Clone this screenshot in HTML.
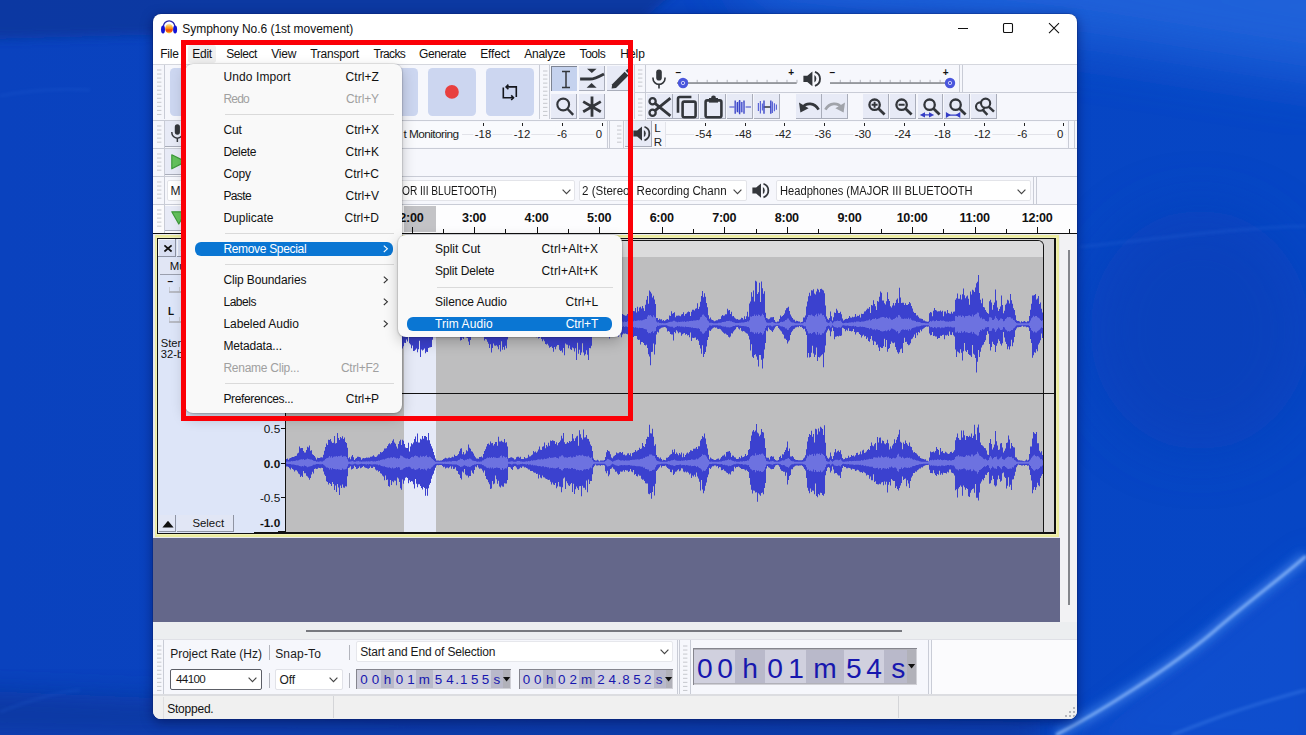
<!DOCTYPE html>
<html><head><meta charset="utf-8"><title>Audacity</title>
<style>
html,body{margin:0;padding:0}
body{width:1306px;height:735px;overflow:hidden;position:relative;background:#0b45c2;font-family:"Liberation Sans", sans-serif;}
span{font-family:"Liberation Sans", sans-serif}
</style></head><body>

<svg style="position:absolute;left:0;top:0" width="1306" height="735" viewBox="0 0 1306 735">
<defs>
<linearGradient id="bgA" x1="0" y1="0" x2="1" y2="0">
 <stop offset="0" stop-color="#0a42be"/><stop offset="0.5" stop-color="#0845c2"/><stop offset="1" stop-color="#0646c5"/>
</linearGradient>
<filter id="bl2" x="-20%" y="-20%" width="140%" height="140%"><feGaussianBlur stdDeviation="1.6"/></filter>
<filter id="bl6" x="-20%" y="-20%" width="140%" height="140%"><feGaussianBlur stdDeviation="5"/></filter>
<filter id="bl14" x="-30%" y="-30%" width="160%" height="160%"><feGaussianBlur stdDeviation="14"/></filter>
<filter id="bl30" x="-30%" y="-30%" width="160%" height="160%"><feGaussianBlur stdDeviation="28"/></filter>
</defs>
<rect width="1306" height="735" fill="url(#bgA)"/>
<!-- darker top-left band -->
<path d="M-40 -30 H700 L640 22 L-40 40 Z" fill="#0a389f" opacity="0.9" filter="url(#bl6)"/>
<!-- lighter top-right -->
<path d="M720 -60 H1400 V90 L1080 40 L760 8 Z" fill="#2265dc" opacity="0.9" filter="url(#bl30)"/>
<!-- darker bottom-left band -->
<path d="M-40 735 V690 L500 712 L1040 722 V760 Z" fill="#0a3597" opacity="0.7" filter="url(#bl14)"/>
<!-- mid-right slightly darker -->
<ellipse cx="1200" cy="330" rx="110" ry="120" fill="#083db6" opacity="0.55" filter="url(#bl30)"/>
<!-- lighter zone below streak -->
<path d="M1070 745 C1110 712 1170 668 1212 633 C1250 600 1285 575 1316 550 V760 Z" fill="#1254d6" opacity="0.55" filter="url(#bl14)"/>
<path d="M1056 735 C1100 712 1170 668 1212 633 C1250 600 1285 575 1306 556" stroke="#4a8af0" stroke-width="11" fill="none" opacity="0.62" filter="url(#bl6)"/>
<path d="M1056 735 C1100 712 1170 668 1212 633 C1250 600 1285 575 1306 556" stroke="#9cc6ff" stroke-width="2.6" fill="none" opacity="0.85" filter="url(#bl2)"/>
<path d="M1172 735 C1210 720 1240 708 1306 690" stroke="#3f80ea" stroke-width="3" fill="none" opacity="0.45" filter="url(#bl2)"/>
<path d="M1080 247 C1150 240 1230 228 1306 226" stroke="#2a68d8" stroke-width="2.5" fill="none" opacity="0.3" filter="url(#bl2)"/>
<path d="M0 96 C30 90 60 88 90 90" stroke="#2a68d8" stroke-width="3" fill="none" opacity="0.18" filter="url(#bl2)"/>
<path d="M0 712 C30 700 60 692 80 690" stroke="#2a68d8" stroke-width="3" fill="none" opacity="0.18" filter="url(#bl2)"/>
</svg>
<div style="position:absolute;left:153px;top:14px;width:924px;height:705px;border-radius:8px;background:#fff;overflow:hidden;box-shadow:0 0 0 0.6px rgba(10,30,100,0.5),0 3px 12px rgba(0,10,70,0.55)"><div style="position:absolute;left:-153px;top:-14px;width:1306px;height:735px">
<svg style="position:absolute;left:160px;top:19px;overflow:visible;" width="18" height="18" viewBox="0 0 18 18">
<defs><linearGradient id="audg" x1="0" y1="0" x2="0" y2="1">
<stop offset="0" stop-color="#fff1c0"/><stop offset="0.25" stop-color="#ffc04a"/><stop offset="0.5" stop-color="#ff8a12"/>
<stop offset="0.62" stop-color="#f0480e"/><stop offset="0.78" stop-color="#f4520e"/><stop offset="0.9" stop-color="#ffb020"/><stop offset="1" stop-color="#fff060"/>
</linearGradient></defs>
<ellipse cx="9.1" cy="9.6" rx="3.9" ry="4.9" fill="url(#audg)"/>
<path d="M3.4 10 V7.6 A5.7 5.8 0 0 1 14.8 7.6 V10" fill="none" stroke="#2a2ab0" stroke-width="1.3"/>
<ellipse cx="3" cy="10.5" rx="2" ry="4.1" fill="#1414d6"/>
<ellipse cx="15.1" cy="10.5" rx="2" ry="4.1" fill="#1414d6"/>
</svg>
<span id="t1" style="position:absolute;left:182.3px;top:19.6px;line-height:18px;font-size:12px;font-weight:normal;color:#111;white-space:pre;letter-spacing:-0.039px;">Symphony No.6 (1st movement)</span>
<svg style="position:absolute;left:950px;top:18px;overflow:visible;" width="120" height="22" viewBox="0 0 120 22">
<path d="M8 10.5 H18" stroke="#111" stroke-width="1.1" fill="none"/>
<rect x="53.5" y="5.5" width="9" height="9" rx="1" stroke="#111" stroke-width="1.1" fill="none"/>
<path d="M99 5.2 L109 15.2 M109 5.2 L99 15.2" stroke="#111" stroke-width="1.1" fill="none"/>
</svg>
<div style="position:absolute;left:188px;top:45px;width:28px;height:18px;background:#f0f0f0;border-radius:3px"></div>
<span id="t2" style="position:absolute;left:160.3px;top:45.0px;line-height:18px;font-size:12px;font-weight:normal;color:#111;white-space:pre;letter-spacing:-0.270px;">File</span>
<span id="t3" style="position:absolute;left:192.3px;top:45.0px;line-height:18px;font-size:12px;font-weight:normal;color:#111;white-space:pre;letter-spacing:-0.282px;">Edit</span>
<span id="t4" style="position:absolute;left:226.2px;top:45.0px;line-height:18px;font-size:12px;font-weight:normal;color:#111;white-space:pre;letter-spacing:-0.429px;">Select</span>
<span id="t5" style="position:absolute;left:271.2px;top:45.0px;line-height:18px;font-size:12px;font-weight:normal;color:#111;white-space:pre;letter-spacing:-0.228px;">View</span>
<span id="t6" style="position:absolute;left:310.2px;top:45.0px;line-height:18px;font-size:12px;font-weight:normal;color:#111;white-space:pre;letter-spacing:-0.248px;">Transport</span>
<span id="t7" style="position:absolute;left:373.6px;top:45.0px;line-height:18px;font-size:12px;font-weight:normal;color:#111;white-space:pre;letter-spacing:-0.684px;">Tracks</span>
<span id="t8" style="position:absolute;left:419.1px;top:45.0px;line-height:18px;font-size:12px;font-weight:normal;color:#111;white-space:pre;letter-spacing:-0.393px;">Generate</span>
<span id="t9" style="position:absolute;left:480.2px;top:45.0px;line-height:18px;font-size:12px;font-weight:normal;color:#111;white-space:pre;letter-spacing:-0.140px;">Effect</span>
<span id="t10" style="position:absolute;left:524.2px;top:45.0px;line-height:18px;font-size:12px;font-weight:normal;color:#111;white-space:pre;letter-spacing:-0.231px;">Analyze</span>
<span id="t11" style="position:absolute;left:579.6px;top:45.0px;line-height:18px;font-size:12px;font-weight:normal;color:#111;white-space:pre;letter-spacing:-0.448px;">Tools</span>
<span id="t12" style="position:absolute;left:620.2px;top:45.0px;line-height:18px;font-size:12px;font-weight:normal;color:#111;white-space:pre;letter-spacing:0.032px;">Help</span>
<div style="position:absolute;left:153px;top:64px;width:924px;height:170px;background:#f6f7fc"></div>
<div style="position:absolute;left:153px;top:64px;width:924px;height:1px;background:#d5d7de"></div>
<div style="position:absolute;left:153px;top:119.5px;width:924px;height:1.2px;background:#c9ccd6"></div>
<div style="position:absolute;left:153px;top:147.5px;width:924px;height:1.2px;background:#c9ccd6"></div>
<div style="position:absolute;left:153px;top:175.5px;width:924px;height:1.2px;background:#c9ccd6"></div>
<div style="position:absolute;left:153px;top:203.5px;width:924px;height:1.2px;background:#c9ccd6"></div>
<div style="position:absolute;left:153px;top:91.5px;width:443px;height:1.2px;background:#c9ccd6;left:634px"></div>
<svg style="position:absolute;left:156.5px;top:67.8px;overflow:visible;" width="6" height="50" viewBox="0 0 6 50"><rect x="0" y="1.50" width="4.4" height="1" fill="#c6c8ce"/><rect x="0" y="5.54" width="4.4" height="1" fill="#c6c8ce"/><rect x="0" y="9.58" width="4.4" height="1" fill="#c6c8ce"/><rect x="0" y="13.62" width="4.4" height="1" fill="#c6c8ce"/><rect x="0" y="17.66" width="4.4" height="1" fill="#c6c8ce"/><rect x="0" y="21.70" width="4.4" height="1" fill="#c6c8ce"/><rect x="0" y="25.74" width="4.4" height="1" fill="#c6c8ce"/><rect x="0" y="29.78" width="4.4" height="1" fill="#c6c8ce"/><rect x="0" y="33.82" width="4.4" height="1" fill="#c6c8ce"/><rect x="0" y="37.86" width="4.4" height="1" fill="#c6c8ce"/><rect x="0" y="41.90" width="4.4" height="1" fill="#c6c8ce"/><rect x="0" y="45.94" width="4.4" height="1" fill="#c6c8ce"/></svg>
<div style="position:absolute;left:163.5px;top:65px;width:1px;height:54px;background:#c9ccd6"></div>
<div style="position:absolute;left:169.5px;top:67.7px;width:47.7px;height:48.3px;background:#ccd6f0;border-radius:4.5px"></div>
<div style="position:absolute;left:215px;top:67.7px;width:47.7px;height:48.3px;background:#ccd6f0;border-radius:4.5px"></div>
<div style="position:absolute;left:262px;top:67.7px;width:47.7px;height:48.3px;background:#ccd6f0;border-radius:4.5px"></div>
<div style="position:absolute;left:312px;top:67.7px;width:47.7px;height:48.3px;background:#ccd6f0;border-radius:4.5px"></div>
<div style="position:absolute;left:370.5px;top:67.7px;width:47.7px;height:48.3px;background:#ccd6f0;border-radius:4.5px"></div>
<div style="position:absolute;left:428.1px;top:67.7px;width:47.7px;height:48.3px;background:#ccd6f0;border-radius:4.5px"></div>
<div style="position:absolute;left:486.2px;top:67.7px;width:47.7px;height:48.3px;background:#ccd6f0;border-radius:4.5px"></div>
<svg style="position:absolute;left:428.1px;top:67.7px;overflow:visible;" width="48" height="48" viewBox="0 0 48 48"><circle cx="23.9" cy="23.9" r="6.9" fill="#e8403f"/></svg>
<svg style="position:absolute;left:486.2px;top:67.7px;overflow:visible;" width="48" height="48" viewBox="0 0 48 48">
<g fill="none" stroke="#14161c" stroke-width="1.6" stroke-linejoin="miter" stroke-linecap="butt">
<path d="M20.4 18.9 H30.3 V29"/><path d="M22.4 16.6 L20.1 18.9 L22.4 21.2"/>
<path d="M17.3 19.6 V29.7 H27.2"/><path d="M25.2 27.4 L27.5 29.7 L25.2 32"/>
</g></svg>
<div style="position:absolute;left:538.5px;top:65px;width:1px;height:54px;background:#c9ccd6"></div>
<svg style="position:absolute;left:542.5px;top:69.2px;overflow:visible;" width="6" height="50" viewBox="0 0 6 50"><rect x="0" y="1.50" width="4.4" height="1" fill="#c6c8ce"/><rect x="0" y="5.54" width="4.4" height="1" fill="#c6c8ce"/><rect x="0" y="9.58" width="4.4" height="1" fill="#c6c8ce"/><rect x="0" y="13.62" width="4.4" height="1" fill="#c6c8ce"/><rect x="0" y="17.66" width="4.4" height="1" fill="#c6c8ce"/><rect x="0" y="21.70" width="4.4" height="1" fill="#c6c8ce"/><rect x="0" y="25.74" width="4.4" height="1" fill="#c6c8ce"/><rect x="0" y="29.78" width="4.4" height="1" fill="#c6c8ce"/><rect x="0" y="33.82" width="4.4" height="1" fill="#c6c8ce"/><rect x="0" y="37.86" width="4.4" height="1" fill="#c6c8ce"/><rect x="0" y="41.90" width="4.4" height="1" fill="#c6c8ce"/><rect x="0" y="45.94" width="4.4" height="1" fill="#c6c8ce"/></svg>
<div style="position:absolute;left:549.3px;top:65px;width:1px;height:54px;background:#c9ccd6"></div>
<div style="position:absolute;left:551.2px;top:65.6px;width:26.2px;height:25px;background:#c5d2ee;box-shadow:inset 1px 1px 0 #7d8493"></div>
<div style="position:absolute;left:579px;top:65.6px;width:26.4px;height:25px;background:#e7eaf6;box-shadow:inset -1px -1px 0 #a9adba"></div>
<div style="position:absolute;left:606.8px;top:65.6px;width:26.4px;height:25px;background:#e7eaf6;box-shadow:inset -1px -1px 0 #a9adba"></div>
<div style="position:absolute;left:551.2px;top:93.8px;width:26.2px;height:25.4px;background:#e7eaf6;box-shadow:inset -1px -1px 0 #a9adba"></div>
<div style="position:absolute;left:579px;top:93.8px;width:26.4px;height:25.4px;background:#e7eaf6;box-shadow:inset -1px -1px 0 #a9adba"></div>
<svg style="position:absolute;left:551.2px;top:65.6px;overflow:visible;" width="26" height="25" viewBox="0 0 26 25"><path d="M11 5.6 H19 M11 21.4 H19 M15 5.6 V21.4" stroke="#33363b" stroke-width="1.5" fill="none"/></svg>
<svg style="position:absolute;left:579px;top:65.6px;overflow:visible;" width="26" height="25" viewBox="0 0 26 25">
<path d="M8 2.8 H17.6 L12.8 7.1 Z" fill="#33363b"/>
<path d="M7.6 21.8 H17.6 L12.6 17 Z" fill="#33363b"/>
<path d="M1.1 13 H11 C15 13 18.5 11.4 25 7.9" stroke="#33363b" stroke-width="2.8" fill="none"/></svg>
<svg style="position:absolute;left:606.8px;top:65.6px;overflow:visible;" width="26" height="25" viewBox="0 0 26 25">
<path d="M4.6 22.6 L5.2 18.2 L17.6 5.8 L21.4 9.6 L9 22 Z" fill="#33363b"/>
<path d="M18.6 4.8 L20.2 3.2 Q21.2 2.4 22.2 3.4 L23.8 5 Q24.6 6 23.8 7 L22.4 8.6 Z" fill="#33363b"/></svg>
<svg style="position:absolute;left:551.2px;top:93.8px;overflow:visible;" width="26" height="25" viewBox="0 0 26 25">
<circle cx="12.2" cy="10.5" r="5.9" stroke="#33363b" stroke-width="2.1" fill="none"/>
<path d="M16.6 15 L22.2 20.8" stroke="#33363b" stroke-width="2.4" fill="none"/></svg>
<svg style="position:absolute;left:579px;top:93.8px;overflow:visible;" width="26" height="25" viewBox="0 0 26 25">
<path d="M13 2.6 V22.8 M4.2 7.6 L21.8 17.8 M21.8 7.6 L4.2 17.8" stroke="#33363b" stroke-width="2.8" fill="none"/></svg>
<div style="position:absolute;left:634px;top:65px;width:1px;height:54px;background:#c9ccd6"></div>
<svg style="position:absolute;left:638px;top:68.4px;overflow:visible;" width="6" height="23" viewBox="0 0 6 23"><rect x="0" y="1.50" width="4.4" height="1" fill="#c6c8ce"/><rect x="0" y="5.54" width="4.4" height="1" fill="#c6c8ce"/><rect x="0" y="9.58" width="4.4" height="1" fill="#c6c8ce"/><rect x="0" y="13.62" width="4.4" height="1" fill="#c6c8ce"/><rect x="0" y="17.66" width="4.4" height="1" fill="#c6c8ce"/></svg>
<div style="position:absolute;left:644.6px;top:65px;width:1px;height:26.5px;background:#c9ccd6"></div>
<svg style="position:absolute;left:651.2px;top:69.2px;overflow:visible;" width="16" height="20" viewBox="0 0 16 20">
<g transform="scale(1.0)">
<rect x="5.2" y="0.4" width="5.6" height="11.2" rx="2.8" fill="#33363b"/>
<path d="M2 8.6 V9.4 A6 6 0 0 0 14 9.4 V8.6" stroke="#33363b" stroke-width="1.6" fill="none"/>
<path d="M8 15.4 V19.6" stroke="#33363b" stroke-width="1.6"/>
</g></svg>
<span id="t13" style="position:absolute;left:675.6px;top:65.1px;line-height:15px;font-size:10px;font-weight:bold;color:#111;white-space:pre;">–</span>
<span id="t14" style="position:absolute;left:788.2px;top:64.8px;line-height:15px;font-size:10px;font-weight:bold;color:#111;white-space:pre;">+</span>
<svg style="position:absolute;left:676.7px;top:82.9px;overflow:visible;" width="119.69999999999993" height="2" viewBox="0 0 119.69999999999993 2"><rect x="9.8" y="-3.2" width="1" height="3" fill="#b4b6bd"/><rect x="19.7" y="-3.2" width="1" height="3" fill="#b4b6bd"/><rect x="29.7" y="-3.2" width="1" height="3" fill="#b4b6bd"/><rect x="39.7" y="-3.2" width="1" height="3" fill="#b4b6bd"/><rect x="49.7" y="-3.2" width="1" height="3" fill="#b4b6bd"/><rect x="59.6" y="-3.2" width="1" height="3" fill="#b4b6bd"/><rect x="69.6" y="-3.2" width="1" height="3" fill="#b4b6bd"/><rect x="79.6" y="-3.2" width="1" height="3" fill="#b4b6bd"/><rect x="89.6" y="-3.2" width="1" height="3" fill="#b4b6bd"/><rect x="99.5" y="-3.2" width="1" height="3" fill="#b4b6bd"/><rect x="109.5" y="-3.2" width="1" height="3" fill="#b4b6bd"/><rect x="119.5" y="-3.2" width="1" height="3" fill="#b4b6bd"/><rect x="0" y="-0.8" width="119.69999999999993" height="1.7" fill="#8b8d93"/></svg>
<svg style="position:absolute;left:676.8px;top:76.60000000000001px;overflow:visible;" width="12" height="12" viewBox="0 0 12 12"><circle cx="6" cy="6" r="5.2" fill="#4a56dd"/><circle cx="6" cy="6" r="1.7" fill="none" stroke="#c8ccf6" stroke-width="1"/></svg>
<svg style="position:absolute;left:802.6px;top:70.6px;overflow:visible;" width="19" height="16" viewBox="0 0 19 16">
<g transform="scale(0.98)">
<path d="M0.4 4.8 H4.4 L9.6 0.4 V15.6 L4.4 11.2 H0.4 Z" fill="#33363b"/>
<path d="M11.6 4.2 A4.6 4.6 0 0 1 11.6 11.8 Z" fill="#33363b"/>
<path d="M12.2 0.8 A7.6 7.6 0 0 1 12.2 15.2" stroke="#33363b" stroke-width="1.9" fill="none"/>
</g></svg>
<span id="t15" style="position:absolute;left:829.6px;top:65.1px;line-height:15px;font-size:10px;font-weight:bold;color:#111;white-space:pre;">–</span>
<span id="t16" style="position:absolute;left:942.8px;top:64.8px;line-height:15px;font-size:10px;font-weight:bold;color:#111;white-space:pre;">+</span>
<svg style="position:absolute;left:830.4px;top:82.9px;overflow:visible;" width="119.80000000000007" height="2" viewBox="0 0 119.80000000000007 2"><rect x="9.8" y="-3.2" width="1" height="3" fill="#b4b6bd"/><rect x="19.8" y="-3.2" width="1" height="3" fill="#b4b6bd"/><rect x="29.8" y="-3.2" width="1" height="3" fill="#b4b6bd"/><rect x="39.7" y="-3.2" width="1" height="3" fill="#b4b6bd"/><rect x="49.7" y="-3.2" width="1" height="3" fill="#b4b6bd"/><rect x="59.7" y="-3.2" width="1" height="3" fill="#b4b6bd"/><rect x="69.7" y="-3.2" width="1" height="3" fill="#b4b6bd"/><rect x="79.7" y="-3.2" width="1" height="3" fill="#b4b6bd"/><rect x="89.7" y="-3.2" width="1" height="3" fill="#b4b6bd"/><rect x="99.6" y="-3.2" width="1" height="3" fill="#b4b6bd"/><rect x="109.6" y="-3.2" width="1" height="3" fill="#b4b6bd"/><rect x="119.6" y="-3.2" width="1" height="3" fill="#b4b6bd"/><rect x="0" y="-0.8" width="119.80000000000007" height="1.7" fill="#8b8d93"/></svg>
<svg style="position:absolute;left:943.7px;top:76.60000000000001px;overflow:visible;" width="12" height="12" viewBox="0 0 12 12"><circle cx="6" cy="6" r="5.2" fill="#4a56dd"/><circle cx="6" cy="6" r="1.7" fill="none" stroke="#c8ccf6" stroke-width="1"/></svg>
<div style="position:absolute;left:959.2px;top:65px;width:1px;height:26.5px;background:#c9ccd6"></div>
<div style="position:absolute;left:961.6px;top:65px;width:1px;height:26.5px;background:#c9ccd6"></div>
<svg style="position:absolute;left:638px;top:96.6px;overflow:visible;" width="6" height="23" viewBox="0 0 6 23"><rect x="0" y="1.50" width="4.4" height="1" fill="#c6c8ce"/><rect x="0" y="5.54" width="4.4" height="1" fill="#c6c8ce"/><rect x="0" y="9.58" width="4.4" height="1" fill="#c6c8ce"/><rect x="0" y="13.62" width="4.4" height="1" fill="#c6c8ce"/><rect x="0" y="17.66" width="4.4" height="1" fill="#c6c8ce"/></svg>
<div style="position:absolute;left:644.6px;top:92.5px;width:1px;height:27px;background:#c9ccd6"></div>
<div style="position:absolute;left:646.7px;top:93.6px;width:25.9px;height:25.8px;background:#e7eaf6;box-shadow:inset -1px -1px 0 #a9adba"></div>
<div style="position:absolute;left:673.2px;top:93.6px;width:25.9px;height:25.8px;background:#e7eaf6;box-shadow:inset -1px -1px 0 #a9adba"></div>
<div style="position:absolute;left:700.4px;top:93.6px;width:25.9px;height:25.8px;background:#e7eaf6;box-shadow:inset -1px -1px 0 #a9adba"></div>
<div style="position:absolute;left:727.3px;top:93.6px;width:25.9px;height:25.8px;background:#e7eaf6;box-shadow:inset -1px -1px 0 #a9adba"></div>
<div style="position:absolute;left:754.3px;top:93.6px;width:25.9px;height:25.8px;background:#e7eaf6;box-shadow:inset -1px -1px 0 #a9adba"></div>
<div style="position:absolute;left:795.7px;top:93.6px;width:25.9px;height:25.8px;background:#e7eaf6;box-shadow:inset -1px -1px 0 #a9adba"></div>
<div style="position:absolute;left:822.4px;top:93.6px;width:25.9px;height:25.8px;background:#e7eaf6;box-shadow:inset -1px -1px 0 #a9adba"></div>
<div style="position:absolute;left:863.3px;top:93.6px;width:25.9px;height:25.8px;background:#e7eaf6;box-shadow:inset -1px -1px 0 #a9adba"></div>
<div style="position:absolute;left:890.4px;top:93.6px;width:25.9px;height:25.8px;background:#e7eaf6;box-shadow:inset -1px -1px 0 #a9adba"></div>
<div style="position:absolute;left:917.5px;top:93.6px;width:25.9px;height:25.8px;background:#e7eaf6;box-shadow:inset -1px -1px 0 #a9adba"></div>
<div style="position:absolute;left:944.4px;top:93.6px;width:25.9px;height:25.8px;background:#e7eaf6;box-shadow:inset -1px -1px 0 #a9adba"></div>
<div style="position:absolute;left:971.4px;top:93.6px;width:25.9px;height:25.8px;background:#e7eaf6;box-shadow:inset -1px -1px 0 #a9adba"></div>
<svg style="position:absolute;left:646.7px;top:93.6px;overflow:visible;" width="26" height="26" viewBox="0 0 26 26">
<circle cx="5.6" cy="7.2" r="3.1" stroke="#33363b" stroke-width="2.3" fill="none"/>
<circle cx="5.6" cy="18.8" r="3.1" stroke="#33363b" stroke-width="2.3" fill="none"/>
<path d="M8 9.4 L23.4 21.8 M8 16.6 L23.4 4.2" stroke="#33363b" stroke-width="2.8" fill="none"/></svg>
<svg style="position:absolute;left:673.2px;top:93.6px;overflow:visible;" width="26" height="26" viewBox="0 0 26 26">
<path d="M5 18.8 V4.8 Q5 3 6.8 3 H18.4" stroke="#33363b" stroke-width="2.6" fill="none"/>
<rect x="9.6" y="7.6" width="13" height="15.6" rx="1.6" stroke="#33363b" stroke-width="2.6" fill="none"/></svg>
<svg style="position:absolute;left:700.4px;top:93.6px;overflow:visible;" width="26" height="26" viewBox="0 0 26 26">
<rect x="5.6" y="6.4" width="15.8" height="16.8" rx="1.6" stroke="#33363b" stroke-width="2.6" fill="none"/>
<rect x="9" y="4" width="9" height="4.6" fill="#33363b"/>
<circle cx="13.5" cy="4" r="2.4" fill="#33363b"/></svg>
<svg style="position:absolute;left:727.3px;top:93.6px;overflow:visible;" width="26" height="26" viewBox="0 0 26 26">
<path d="M2.4 13 H7.6 M18.6 13 H24" stroke="#3a45c8" stroke-width="1.2" fill="none"/>
<path d="M8.2 6.4 V19.8 M10.4 8 V18.2 M12.6 6 V20.2 M14.8 8 V18.2 M17 6.4 V19.8" stroke="#3a45c8" stroke-width="1.4" fill="none"/>
<path d="M9.3 9 V17.2 M11.5 7.4 V18.6 M13.7 7.4 V18.6 M15.9 9 V17.2" stroke="#8f97e6" stroke-width="0.9" fill="none"/></svg>
<svg style="position:absolute;left:754.3px;top:93.6px;overflow:visible;" width="26" height="26" viewBox="0 0 26 26">
<path d="M4.4 9 V17 M6.4 7 V19.4 M8.4 9.4 V16.6 M18.4 7.4 V19 M20.4 9.2 V17.2 M22.4 10.4 V15.8" stroke="#5a64d8" stroke-width="1.2" fill="none"/>
<path d="M9.6 13 H17" stroke="#33363b" stroke-width="1.3" fill="none"/>
<path d="M10 6.6 V19.8 M16.8 6.6 V19.8" stroke="#3a45c8" stroke-width="1.4" fill="none"/></svg>
<svg style="position:absolute;left:795.7px;top:93.6px;overflow:visible;" width="26" height="26" viewBox="0 0 26 26">
<path d="M6.4 13.6 C10 8.4 18.4 8 22.6 15.6" stroke="#33363b" stroke-width="2.7" fill="none"/>
<path d="M3 8.4 L4.4 18.4 L12.6 14.2 Z" fill="#33363b"/></svg>
<svg style="position:absolute;left:822.4px;top:93.6px;overflow:visible;" width="26" height="26" viewBox="0 0 26 26">
<path d="M19.6 13.6 C16 8.4 7.6 8 3.4 15.6" stroke="#a0a3aa" stroke-width="2.7" fill="none"/>
<path d="M23 8.4 L21.6 18.4 L13.4 14.2 Z" fill="#a0a3aa"/></svg>
<svg style="position:absolute;left:863.3px;top:93.6px;overflow:visible;" width="26" height="26" viewBox="0 0 26 26">
<circle cx="11.6" cy="10.7" r="5.2" stroke="#33363b" stroke-width="2.3" fill="none"/>
<path d="M15.4 14.6 L21.6 20.4" stroke="#33363b" stroke-width="2.8" fill="none"/><path d="M8.6 10.7 H14.6 M11.6 7.7 V13.7" stroke="#33363b" stroke-width="1.9"/></svg>
<svg style="position:absolute;left:890.4px;top:93.6px;overflow:visible;" width="26" height="26" viewBox="0 0 26 26">
<circle cx="11.6" cy="10.7" r="5.2" stroke="#33363b" stroke-width="2.3" fill="none"/>
<path d="M15.4 14.6 L21.6 20.4" stroke="#33363b" stroke-width="2.8" fill="none"/><path d="M8.6 10.7 H14.6" stroke="#33363b" stroke-width="1.9"/></svg>
<svg style="position:absolute;left:917.5px;top:93.6px;overflow:visible;" width="26" height="26" viewBox="0 0 26 26">
<circle cx="11.6" cy="10.7" r="5.2" stroke="#33363b" stroke-width="2.3" fill="none"/>
<path d="M15.4 14.6 L21.6 20.4" stroke="#33363b" stroke-width="2.8" fill="none"/><path d="M4 20.9 H14" stroke="#343cc6" stroke-width="1.1"/><path d="M1.8 20.9 L7 18.3 V23.5 Z M16.2 20.9 L11 18.3 V23.5 Z" fill="#343cc6"/></svg>
<svg style="position:absolute;left:944.4px;top:93.6px;overflow:visible;" width="26" height="26" viewBox="0 0 26 26">
<circle cx="11.6" cy="10.7" r="5.2" stroke="#33363b" stroke-width="2.3" fill="none"/>
<path d="M15.4 14.6 L21.6 20.4" stroke="#33363b" stroke-width="2.8" fill="none"/><path d="M4 21.1 H14" stroke="#343cc6" stroke-width="1.2"/><path d="M1.9 18.1 V24.1 L6.7 21.1 Z M16.3 18.1 V24.1 L11.5 21.1 Z" fill="#343cc6"/></svg>
<svg style="position:absolute;left:971.4px;top:93.6px;overflow:visible;" width="26" height="26" viewBox="0 0 26 26">
<circle cx="9.2" cy="12.6" r="4.2" stroke="#33363b" stroke-width="2.1" fill="none"/>
<path d="M12 16.2 L16.4 20.8" stroke="#33363b" stroke-width="2.5" fill="none"/>
<circle cx="14.6" cy="9.2" r="4.6" stroke="#33363b" stroke-width="2.1" fill="#e7eaf6"/>
<path d="M17.8 12.8 L23 17.6" stroke="#33363b" stroke-width="2.5" fill="none"/></svg>
<svg style="position:absolute;left:156.5px;top:124.3px;overflow:visible;" width="6" height="23" viewBox="0 0 6 23"><rect x="0" y="1.50" width="4.4" height="1" fill="#c6c8ce"/><rect x="0" y="5.54" width="4.4" height="1" fill="#c6c8ce"/><rect x="0" y="9.58" width="4.4" height="1" fill="#c6c8ce"/><rect x="0" y="13.62" width="4.4" height="1" fill="#c6c8ce"/><rect x="0" y="17.66" width="4.4" height="1" fill="#c6c8ce"/></svg>
<div style="position:absolute;left:163.5px;top:120.5px;width:1px;height:27px;background:#c9ccd6"></div>
<div style="position:absolute;left:165px;top:121.2px;width:24px;height:25.6px;background:#e7eaf6;box-shadow:inset -1px -1px 0 #a9adba"></div>
<svg style="position:absolute;left:170.4px;top:124.4px;overflow:visible;" width="16" height="20" viewBox="0 0 16 20">
<g transform="scale(0.92)">
<rect x="5.2" y="0.4" width="5.6" height="11.2" rx="2.8" fill="#33363b"/>
<path d="M2 8.6 V9.4 A6 6 0 0 0 14 9.4 V8.6" stroke="#33363b" stroke-width="1.6" fill="none"/>
<path d="M8 15.4 V19.6" stroke="#33363b" stroke-width="1.6"/>
</g></svg>
<div style="position:absolute;left:190px;top:121.5px;width:416px;height:25px;background:#f9fafd"></div>
<span id="t17" style="position:absolute;left:403.6px;top:125.4px;line-height:18px;font-size:11.8px;font-weight:normal;color:#222;white-space:pre;letter-spacing:-0.560px;">t Monitoring</span>
<div style="position:absolute;left:483.1px;top:122.6px;width:1px;height:3.6px;background:#222"></div>
<span id="t18" style="position:absolute;left:483.0px;transform:translateX(-50%);top:125.80000000000001px;line-height:17px;font-size:11.4px;font-weight:normal;color:#222;white-space:pre;background:#f9fafd;padding:0 1.5px;z-index:2">-18</span>
<div style="position:absolute;left:522.1px;top:122.6px;width:1px;height:3.6px;background:#222"></div>
<span id="t19" style="position:absolute;left:522.0px;transform:translateX(-50%);top:125.80000000000001px;line-height:17px;font-size:11.4px;font-weight:normal;color:#222;white-space:pre;background:#f9fafd;padding:0 1.5px;z-index:2">-12</span>
<div style="position:absolute;left:562.1px;top:122.6px;width:1px;height:3.6px;background:#222"></div>
<span id="t20" style="position:absolute;left:562.0px;transform:translateX(-50%);top:125.80000000000001px;line-height:17px;font-size:11.4px;font-weight:normal;color:#222;white-space:pre;background:#f9fafd;padding:0 1.5px;z-index:2">-6</span>
<div style="position:absolute;left:601.9px;top:122.6px;width:1px;height:3.6px;background:#222"></div>
<span id="t21" style="position:absolute;left:598.8px;transform:translateX(-50%);top:125.80000000000001px;line-height:17px;font-size:11.4px;font-weight:normal;color:#222;white-space:pre;background:#f9fafd;padding:0 1.5px;z-index:2">0</span>
<div style="position:absolute;left:462px;top:134.2px;width:140px;height:1px;background:#e2e3e9"></div>
<div style="position:absolute;left:606.6px;top:121px;width:1px;height:26.5px;background:#c9ccd6"></div>
<div style="position:absolute;left:609.4px;top:121px;width:1px;height:26.5px;background:#c9ccd6"></div>
<svg style="position:absolute;left:616.6px;top:124.3px;overflow:visible;" width="6" height="23" viewBox="0 0 6 23"><rect x="0" y="1.50" width="4.4" height="1" fill="#c6c8ce"/><rect x="0" y="5.54" width="4.4" height="1" fill="#c6c8ce"/><rect x="0" y="9.58" width="4.4" height="1" fill="#c6c8ce"/><rect x="0" y="13.62" width="4.4" height="1" fill="#c6c8ce"/><rect x="0" y="17.66" width="4.4" height="1" fill="#c6c8ce"/></svg>
<div style="position:absolute;left:623.4px;top:120.5px;width:1px;height:27px;background:#c9ccd6"></div>
<div style="position:absolute;left:625px;top:121.2px;width:26.8px;height:25.6px;background:#e7eaf6;box-shadow:inset -1px -1px 0 #a9adba"></div>
<svg style="position:absolute;left:632.6px;top:126.4px;overflow:visible;" width="19" height="16" viewBox="0 0 19 16">
<g transform="scale(0.94)">
<path d="M0.4 4.8 H4.4 L9.6 0.4 V15.6 L4.4 11.2 H0.4 Z" fill="#33363b"/>
<path d="M11.6 4.2 A4.6 4.6 0 0 1 11.6 11.8 Z" fill="#33363b"/>
<path d="M12.2 0.8 A7.6 7.6 0 0 1 12.2 15.2" stroke="#33363b" stroke-width="1.9" fill="none"/>
</g></svg>
<span id="t22" style="position:absolute;left:654.2px;top:118.7px;line-height:17px;font-size:11.6px;font-weight:normal;color:#222;white-space:pre;">L</span>
<span id="t23" style="position:absolute;left:653.8px;top:132.7px;line-height:17px;font-size:11.6px;font-weight:normal;color:#222;white-space:pre;">R</span>
<div style="position:absolute;left:664.6px;top:121.5px;width:401px;height:25.4px;background:#f9fafd"></div>
<div style="position:absolute;left:664.6px;top:133.9px;width:401px;height:1px;background:#e2e3e9"></div>
<div style="position:absolute;left:664.6px;top:121.5px;width:1px;height:25.4px;background:#e3e4ea"></div>
<div style="position:absolute;left:704.8px;top:122.6px;width:1px;height:3.6px;background:#222"></div>
<span id="t24" style="position:absolute;left:703.5px;transform:translateX(-50%);top:125.80000000000001px;line-height:17px;font-size:11.4px;font-weight:normal;color:#222;white-space:pre;background:#f9fafd;padding:0 1.5px;z-index:2">-54</span>
<div style="position:absolute;left:744.64px;top:122.6px;width:1px;height:3.6px;background:#222"></div>
<span id="t25" style="position:absolute;left:743.34px;transform:translateX(-50%);top:125.80000000000001px;line-height:17px;font-size:11.4px;font-weight:normal;color:#222;white-space:pre;background:#f9fafd;padding:0 1.5px;z-index:2">-48</span>
<div style="position:absolute;left:784.48px;top:122.6px;width:1px;height:3.6px;background:#222"></div>
<span id="t26" style="position:absolute;left:783.1800000000001px;transform:translateX(-50%);top:125.80000000000001px;line-height:17px;font-size:11.4px;font-weight:normal;color:#222;white-space:pre;background:#f9fafd;padding:0 1.5px;z-index:2">-42</span>
<div style="position:absolute;left:824.3199999999999px;top:122.6px;width:1px;height:3.6px;background:#222"></div>
<span id="t27" style="position:absolute;left:823.02px;transform:translateX(-50%);top:125.80000000000001px;line-height:17px;font-size:11.4px;font-weight:normal;color:#222;white-space:pre;background:#f9fafd;padding:0 1.5px;z-index:2">-36</span>
<div style="position:absolute;left:864.16px;top:122.6px;width:1px;height:3.6px;background:#222"></div>
<span id="t28" style="position:absolute;left:862.86px;transform:translateX(-50%);top:125.80000000000001px;line-height:17px;font-size:11.4px;font-weight:normal;color:#222;white-space:pre;background:#f9fafd;padding:0 1.5px;z-index:2">-30</span>
<div style="position:absolute;left:904.0px;top:122.6px;width:1px;height:3.6px;background:#222"></div>
<span id="t29" style="position:absolute;left:902.7px;transform:translateX(-50%);top:125.80000000000001px;line-height:17px;font-size:11.4px;font-weight:normal;color:#222;white-space:pre;background:#f9fafd;padding:0 1.5px;z-index:2">-24</span>
<div style="position:absolute;left:943.8399999999999px;top:122.6px;width:1px;height:3.6px;background:#222"></div>
<span id="t30" style="position:absolute;left:942.54px;transform:translateX(-50%);top:125.80000000000001px;line-height:17px;font-size:11.4px;font-weight:normal;color:#222;white-space:pre;background:#f9fafd;padding:0 1.5px;z-index:2">-18</span>
<div style="position:absolute;left:983.68px;top:122.6px;width:1px;height:3.6px;background:#222"></div>
<span id="t31" style="position:absolute;left:982.38px;transform:translateX(-50%);top:125.80000000000001px;line-height:17px;font-size:11.4px;font-weight:normal;color:#222;white-space:pre;background:#f9fafd;padding:0 1.5px;z-index:2">-12</span>
<div style="position:absolute;left:1023.52px;top:122.6px;width:1px;height:3.6px;background:#222"></div>
<span id="t32" style="position:absolute;left:1022.22px;transform:translateX(-50%);top:125.80000000000001px;line-height:17px;font-size:11.4px;font-weight:normal;color:#222;white-space:pre;background:#f9fafd;padding:0 1.5px;z-index:2">-6</span>
<div style="position:absolute;left:1063.36px;top:122.6px;width:1px;height:3.6px;background:#222"></div>
<span id="t33" style="position:absolute;left:1060.1599999999999px;transform:translateX(-50%);top:125.80000000000001px;line-height:17px;font-size:11.4px;font-weight:normal;color:#222;white-space:pre;background:#f9fafd;padding:0 1.5px;z-index:2">0</span>
<div style="position:absolute;left:1067.6px;top:121px;width:1px;height:26.5px;background:#c9ccd6"></div>
<div style="position:absolute;left:1073.6px;top:121px;width:1px;height:26.5px;background:#c9ccd6"></div>
<svg style="position:absolute;left:156.5px;top:152px;overflow:visible;" width="6" height="23" viewBox="0 0 6 23"><rect x="0" y="1.50" width="4.4" height="1" fill="#c6c8ce"/><rect x="0" y="5.54" width="4.4" height="1" fill="#c6c8ce"/><rect x="0" y="9.58" width="4.4" height="1" fill="#c6c8ce"/><rect x="0" y="13.62" width="4.4" height="1" fill="#c6c8ce"/><rect x="0" y="17.66" width="4.4" height="1" fill="#c6c8ce"/></svg>
<div style="position:absolute;left:163.5px;top:148.5px;width:1px;height:27px;background:#c9ccd6"></div>
<div style="position:absolute;left:165px;top:149.4px;width:25px;height:25.4px;background:#e7eaf6;box-shadow:inset -1px -1px 0 #a9adba"></div>
<svg style="position:absolute;left:170.6px;top:154.4px;overflow:visible;" width="16" height="16" viewBox="0 0 16 16"><path d="M0.8 0.8 L14.6 7.6 L0.8 14.8 Z" fill="#63c25c" stroke="#3d9a3a" stroke-width="1.2" stroke-linejoin="round"/></svg>
<svg style="position:absolute;left:156.5px;top:180.2px;overflow:visible;" width="6" height="23" viewBox="0 0 6 23"><rect x="0" y="1.50" width="4.4" height="1" fill="#c6c8ce"/><rect x="0" y="5.54" width="4.4" height="1" fill="#c6c8ce"/><rect x="0" y="9.58" width="4.4" height="1" fill="#c6c8ce"/><rect x="0" y="13.62" width="4.4" height="1" fill="#c6c8ce"/><rect x="0" y="17.66" width="4.4" height="1" fill="#c6c8ce"/></svg>
<div style="position:absolute;left:163.5px;top:176.4px;width:1px;height:27.4px;background:#c9ccd6"></div>
<div style="position:absolute;left:167.4px;top:179.8px;width:94.6px;height:21px;background:#fff;border:1px solid #e3e4e9;box-sizing:border-box;border-radius:2px"></div>
<span id="t34" style="position:absolute;left:170.6px;top:181.8px;line-height:18px;font-size:12px;font-weight:normal;color:#1a1a1a;white-space:pre;">MME</span>
<svg style="position:absolute;left:248.5px;top:188.6px;overflow:visible;" width="9" height="6" viewBox="0 0 9 6"><path d="M0.6 0.6 L4.5 4.6 L8.4 0.6" stroke="#444" stroke-width="1.15" fill="none"/></svg>
<svg style="position:absolute;left:270px;top:181.4px;overflow:visible;" width="16" height="20" viewBox="0 0 16 20">
<g transform="scale(0.95)">
<rect x="5.2" y="0.4" width="5.6" height="11.2" rx="2.8" fill="#33363b"/>
<path d="M2 8.6 V9.4 A6 6 0 0 0 14 9.4 V8.6" stroke="#33363b" stroke-width="1.6" fill="none"/>
<path d="M8 15.4 V19.6" stroke="#33363b" stroke-width="1.6"/>
</g></svg>
<div style="position:absolute;left:290px;top:179.8px;width:285px;height:21px;background:#fff;border:1px solid #e3e4e9;box-sizing:border-box;border-radius:2px"></div>
<span id="t35" style="position:absolute;left:401.9px;top:181.8px;line-height:18px;font-size:12px;font-weight:normal;color:#1a1a1a;white-space:pre;transform:scaleX(0.8462);transform-origin:left center;">OR III BLUETOOTH)</span>
<svg style="position:absolute;left:561.5px;top:188.6px;overflow:visible;" width="9" height="6" viewBox="0 0 9 6"><path d="M0.6 0.6 L4.5 4.6 L8.4 0.6" stroke="#444" stroke-width="1.15" fill="none"/></svg>
<div style="position:absolute;left:578.7px;top:179.8px;width:168.0999999999999px;height:21px;background:#fff;border:1px solid #e3e4e9;box-sizing:border-box;border-radius:2px"></div>
<span id="t36" style="position:absolute;left:582.2px;top:181.8px;line-height:18px;font-size:12px;font-weight:normal;color:#1a1a1a;white-space:pre;transform:scaleX(0.9634);transform-origin:left center;">2 (Stereo) Recording Chann</span>
<svg style="position:absolute;left:733.3px;top:188.6px;overflow:visible;" width="9" height="6" viewBox="0 0 9 6"><path d="M0.6 0.6 L4.5 4.6 L8.4 0.6" stroke="#444" stroke-width="1.15" fill="none"/></svg>
<svg style="position:absolute;left:752.2px;top:183.4px;overflow:visible;" width="19" height="16" viewBox="0 0 19 16">
<g transform="scale(0.94)">
<path d="M0.4 4.8 H4.4 L9.6 0.4 V15.6 L4.4 11.2 H0.4 Z" fill="#33363b"/>
<path d="M11.6 4.2 A4.6 4.6 0 0 1 11.6 11.8 Z" fill="#33363b"/>
<path d="M12.2 0.8 A7.6 7.6 0 0 1 12.2 15.2" stroke="#33363b" stroke-width="1.9" fill="none"/>
</g></svg>
<div style="position:absolute;left:776px;top:179.8px;width:254.5999999999999px;height:21px;background:#fff;border:1px solid #e3e4e9;box-sizing:border-box;border-radius:2px"></div>
<span id="t37" style="position:absolute;left:779.6px;top:181.8px;line-height:18px;font-size:12px;font-weight:normal;color:#1a1a1a;white-space:pre;transform:scaleX(0.9296);transform-origin:left center;">Headphones (MAJOR III BLUETOOTH</span>
<svg style="position:absolute;left:1017.0999999999999px;top:188.6px;overflow:visible;" width="9" height="6" viewBox="0 0 9 6"><path d="M0.6 0.6 L4.5 4.6 L8.4 0.6" stroke="#444" stroke-width="1.15" fill="none"/></svg>
<div style="position:absolute;left:1033.4px;top:176.4px;width:1px;height:27.4px;background:#c9ccd6"></div>
<div style="position:absolute;left:1036px;top:176.4px;width:1px;height:27.4px;background:#c9ccd6"></div>
<div style="position:absolute;left:153px;top:204.6px;width:924px;height:28.2px;background:#fbfbfd"></div>
<svg style="position:absolute;left:156.5px;top:208.4px;overflow:visible;" width="6" height="23" viewBox="0 0 6 23"><rect x="0" y="1.50" width="4.4" height="1" fill="#c6c8ce"/><rect x="0" y="5.54" width="4.4" height="1" fill="#c6c8ce"/><rect x="0" y="9.58" width="4.4" height="1" fill="#c6c8ce"/><rect x="0" y="13.62" width="4.4" height="1" fill="#c6c8ce"/><rect x="0" y="17.66" width="4.4" height="1" fill="#c6c8ce"/></svg>
<div style="position:absolute;left:163.5px;top:205px;width:1px;height:27.6px;background:#c9ccd6"></div>
<div style="position:absolute;left:165px;top:205.8px;width:25px;height:25.6px;background:#e7eaf6;box-shadow:inset -1px -1px 0 #a9adba"></div>
<svg style="position:absolute;left:171px;top:211.4px;overflow:visible;" width="16" height="14" viewBox="0 0 16 14"><path d="M0.8 0.8 H14.8 L7.8 13 Z" fill="#63c25c" stroke="#3d9a3a" stroke-width="1.2" stroke-linejoin="round"/></svg>
<div style="position:absolute;left:253px;top:205.2px;width:824px;height:27.4px;background:#fdfdfe"></div>
<div style="position:absolute;left:403.6px;top:206.2px;width:32.8px;height:25.8px;background:#c3c3c6"></div>
<div style="position:absolute;left:286.3px;top:227.4px;width:1.1px;height:5.4px;background:#111"></div>
<div style="position:absolute;left:317.6px;top:229.0px;width:1.1px;height:3.8px;background:#111"></div>
<div style="position:absolute;left:348.9px;top:227.4px;width:1.1px;height:5.4px;background:#111"></div>
<span id="t38" style="position:absolute;left:348.78px;transform:translateX(-50%);top:209.1px;line-height:19px;font-size:12.6px;font-weight:bold;color:#111;white-space:pre;letter-spacing:-0.3px">1:00</span>
<div style="position:absolute;left:380.2px;top:229.0px;width:1.1px;height:3.8px;background:#111"></div>
<div style="position:absolute;left:411.5px;top:227.4px;width:1.1px;height:5.4px;background:#111"></div>
<span id="t39" style="position:absolute;left:411.36px;transform:translateX(-50%);top:209.1px;line-height:19px;font-size:12.6px;font-weight:bold;color:#111;white-space:pre;letter-spacing:-0.3px">2:00</span>
<div style="position:absolute;left:442.8px;top:229.0px;width:1.1px;height:3.8px;background:#111"></div>
<div style="position:absolute;left:474.0px;top:227.4px;width:1.1px;height:5.4px;background:#111"></div>
<span id="t40" style="position:absolute;left:473.94px;transform:translateX(-50%);top:209.1px;line-height:19px;font-size:12.6px;font-weight:bold;color:#111;white-space:pre;letter-spacing:-0.3px">3:00</span>
<div style="position:absolute;left:505.3px;top:229.0px;width:1.1px;height:3.8px;background:#111"></div>
<div style="position:absolute;left:536.6px;top:227.4px;width:1.1px;height:5.4px;background:#111"></div>
<span id="t41" style="position:absolute;left:536.52px;transform:translateX(-50%);top:209.1px;line-height:19px;font-size:12.6px;font-weight:bold;color:#111;white-space:pre;letter-spacing:-0.3px">4:00</span>
<div style="position:absolute;left:567.9px;top:229.0px;width:1.1px;height:3.8px;background:#111"></div>
<div style="position:absolute;left:599.2px;top:227.4px;width:1.1px;height:5.4px;background:#111"></div>
<span id="t42" style="position:absolute;left:599.1px;transform:translateX(-50%);top:209.1px;line-height:19px;font-size:12.6px;font-weight:bold;color:#111;white-space:pre;letter-spacing:-0.3px">5:00</span>
<div style="position:absolute;left:630.5px;top:229.0px;width:1.1px;height:3.8px;background:#111"></div>
<div style="position:absolute;left:661.8px;top:227.4px;width:1.1px;height:5.4px;background:#111"></div>
<span id="t43" style="position:absolute;left:661.68px;transform:translateX(-50%);top:209.1px;line-height:19px;font-size:12.6px;font-weight:bold;color:#111;white-space:pre;letter-spacing:-0.3px">6:00</span>
<div style="position:absolute;left:693.1px;top:229.0px;width:1.1px;height:3.8px;background:#111"></div>
<div style="position:absolute;left:724.4px;top:227.4px;width:1.1px;height:5.4px;background:#111"></div>
<span id="t44" style="position:absolute;left:724.26px;transform:translateX(-50%);top:209.1px;line-height:19px;font-size:12.6px;font-weight:bold;color:#111;white-space:pre;letter-spacing:-0.3px">7:00</span>
<div style="position:absolute;left:755.6px;top:229.0px;width:1.1px;height:3.8px;background:#111"></div>
<div style="position:absolute;left:786.9px;top:227.4px;width:1.1px;height:5.4px;background:#111"></div>
<span id="t45" style="position:absolute;left:786.84px;transform:translateX(-50%);top:209.1px;line-height:19px;font-size:12.6px;font-weight:bold;color:#111;white-space:pre;letter-spacing:-0.3px">8:00</span>
<div style="position:absolute;left:818.2px;top:229.0px;width:1.1px;height:3.8px;background:#111"></div>
<div style="position:absolute;left:849.5px;top:227.4px;width:1.1px;height:5.4px;background:#111"></div>
<span id="t46" style="position:absolute;left:849.42px;transform:translateX(-50%);top:209.1px;line-height:19px;font-size:12.6px;font-weight:bold;color:#111;white-space:pre;letter-spacing:-0.3px">9:00</span>
<div style="position:absolute;left:880.8px;top:229.0px;width:1.1px;height:3.8px;background:#111"></div>
<div style="position:absolute;left:912.1px;top:227.4px;width:1.1px;height:5.4px;background:#111"></div>
<span id="t47" style="position:absolute;left:911.9999999999999px;transform:translateX(-50%);top:209.1px;line-height:19px;font-size:12.6px;font-weight:bold;color:#111;white-space:pre;letter-spacing:-0.3px">10:00</span>
<div style="position:absolute;left:943.4px;top:229.0px;width:1.1px;height:3.8px;background:#111"></div>
<div style="position:absolute;left:974.7px;top:227.4px;width:1.1px;height:5.4px;background:#111"></div>
<span id="t48" style="position:absolute;left:974.58px;transform:translateX(-50%);top:209.1px;line-height:19px;font-size:12.6px;font-weight:bold;color:#111;white-space:pre;letter-spacing:-0.3px">11:00</span>
<div style="position:absolute;left:1006.0px;top:229.0px;width:1.1px;height:3.8px;background:#111"></div>
<div style="position:absolute;left:1037.3px;top:227.4px;width:1.1px;height:5.4px;background:#111"></div>
<span id="t49" style="position:absolute;left:1037.16px;transform:translateX(-50%);top:209.1px;line-height:19px;font-size:12.6px;font-weight:bold;color:#111;white-space:pre;letter-spacing:-0.3px">12:00</span>
<div style="position:absolute;left:1068.5px;top:229.0px;width:1.1px;height:3.8px;background:#111"></div>
<div style="position:absolute;left:153px;top:232.5px;width:924px;height:1.4px;background:#111"></div>
<div style="position:absolute;left:153px;top:234px;width:907px;height:303.5px;background:#e9eaef"></div>
<div style="position:absolute;left:154.6px;top:235.3px;width:904.2px;height:301.3px;background:#ebeb9e"></div>
<div style="position:absolute;left:156.2px;top:236.8px;width:901px;height:298.2px;background:#f0f0b6"></div>
<div style="position:absolute;left:157.3px;top:238.2px;width:898.7px;height:295.4px;background:#111"></div>
<div style="position:absolute;left:158.2px;top:239.0px;width:95.4px;height:293.6px;background:#dde5f8"></div>
<div style="position:absolute;left:158.2px;top:239.0px;width:17.5px;height:17.6px;background:#d9dff2;box-shadow:inset -1px -1px 0 #8f94a3, inset 1px 1px 0 #f4f6fc"></div>
<svg style="position:absolute;left:164px;top:245px;overflow:visible;" width="8" height="7" viewBox="0 0 8 7"><path d="M0.4 0.3 L7.6 6.5 M7.6 0.3 L0.4 6.5" stroke="#111" stroke-width="1.7"/></svg>
<div style="position:absolute;left:176.6px;top:239.0px;width:77px;height:17.6px;background:#d9dff2;box-shadow:inset -1px -1px 0 #8f94a3, inset 1px 1px 0 #f4f6fc"></div>
<span id="t50" style="position:absolute;left:180.4px;top:239.9px;line-height:17px;font-size:11.4px;font-weight:normal;color:#111;white-space:pre;">Symphony...</span>
<div style="position:absolute;left:160.4px;top:258.2px;width:45.4px;height:16.4px;background:#e1e6f5;box-shadow:inset -1px -1px 0 #9a9fae"></div>
<span id="t51" style="position:absolute;left:169.8px;top:257.9px;line-height:17px;font-size:11.4px;font-weight:normal;color:#111;white-space:pre;">Mute</span>
<div style="position:absolute;left:207px;top:258.2px;width:45.4px;height:16.4px;background:#e1e6f5;box-shadow:inset -1px -1px 0 #9a9fae"></div>
<span id="t52" style="position:absolute;left:218.6px;top:257.9px;line-height:17px;font-size:11.4px;font-weight:normal;color:#111;white-space:pre;">Solo</span>
<span id="t53" style="position:absolute;left:167.6px;top:273.9px;line-height:15px;font-size:10px;font-weight:bold;color:#111;white-space:pre;">–</span>
<div style="position:absolute;left:169px;top:291.2px;width:62px;height:1.6px;background:#b7bac4"></div>
<div style="position:absolute;left:169.0px;top:287.4px;width:1px;height:4px;background:#c8cbd4"></div>
<div style="position:absolute;left:179.2px;top:287.4px;width:1px;height:4px;background:#c8cbd4"></div>
<div style="position:absolute;left:189.4px;top:287.4px;width:1px;height:4px;background:#c8cbd4"></div>
<div style="position:absolute;left:199.6px;top:287.4px;width:1px;height:4px;background:#c8cbd4"></div>
<div style="position:absolute;left:209.8px;top:287.4px;width:1px;height:4px;background:#c8cbd4"></div>
<div style="position:absolute;left:220.0px;top:287.4px;width:1px;height:4px;background:#c8cbd4"></div>
<div style="position:absolute;left:230.2px;top:287.4px;width:1px;height:4px;background:#c8cbd4"></div>
<span id="t54" style="position:absolute;left:238px;top:274.9px;line-height:15px;font-size:10px;font-weight:bold;color:#111;white-space:pre;">+</span>
<span id="t55" style="position:absolute;left:168px;top:304.3px;line-height:15px;font-size:10px;font-weight:bold;color:#111;white-space:pre;">L</span>
<div style="position:absolute;left:169px;top:321.2px;width:62px;height:1.6px;background:#b7bac4"></div>
<div style="position:absolute;left:169.0px;top:317.4px;width:1px;height:4px;background:#c8cbd4"></div>
<div style="position:absolute;left:179.2px;top:317.4px;width:1px;height:4px;background:#c8cbd4"></div>
<div style="position:absolute;left:189.4px;top:317.4px;width:1px;height:4px;background:#c8cbd4"></div>
<div style="position:absolute;left:199.6px;top:317.4px;width:1px;height:4px;background:#c8cbd4"></div>
<div style="position:absolute;left:209.8px;top:317.4px;width:1px;height:4px;background:#c8cbd4"></div>
<div style="position:absolute;left:220.0px;top:317.4px;width:1px;height:4px;background:#c8cbd4"></div>
<div style="position:absolute;left:230.2px;top:317.4px;width:1px;height:4px;background:#c8cbd4"></div>
<span id="t56" style="position:absolute;left:238px;top:304.3px;line-height:15px;font-size:10px;font-weight:bold;color:#111;white-space:pre;">R</span>
<span id="t57" style="position:absolute;left:160.8px;top:335.1px;line-height:17px;font-size:11.2px;font-weight:normal;color:#111;white-space:pre;">Stereo, 44100Hz</span>
<span id="t58" style="position:absolute;left:160.8px;top:346.3px;line-height:17px;font-size:11.2px;font-weight:normal;color:#111;white-space:pre;">32-bit float</span>
<div style="position:absolute;left:159.2px;top:514.8px;width:16.6px;height:17.2px;background:#e1e6f5;box-shadow:inset -1px -1px 0 #8f94a3"></div>
<svg style="position:absolute;left:161.8px;top:519.8px;overflow:visible;" width="12" height="8" viewBox="0 0 12 8"><path d="M0.4 7.4 L6 0.8 L11.6 7.4 Z" fill="#111"/></svg>
<div style="position:absolute;left:176.6px;top:514.8px;width:57.6px;height:17.2px;background:#e1e6f5;box-shadow:inset -1px -1px 0 #8f94a3"></div>
<span id="t59" style="position:absolute;left:192.4px;top:514.7px;line-height:17px;font-size:11.4px;font-weight:normal;color:#111;white-space:pre;">Select</span>
<div style="position:absolute;left:254.4px;top:239.2px;width:30.4px;height:293.2px;background:#dde5f8"></div>
<span id="t60" style="position:absolute;right:1025.8px;top:419.6px;line-height:18px;font-size:11.8px;font-weight:normal;color:#111;white-space:pre;">0.5</span>
<span id="t61" style="position:absolute;right:1025.8px;top:454.8px;line-height:18px;font-size:11.8px;font-weight:bold;color:#111;white-space:pre;">0.0</span>
<span id="t62" style="position:absolute;right:1025.8px;top:489.2px;line-height:18px;font-size:11.8px;font-weight:normal;color:#111;white-space:pre;">-0.5</span>
<span id="t63" style="position:absolute;right:1025.8px;top:514.4px;line-height:18px;font-size:11.8px;font-weight:bold;color:#111;white-space:pre;">-1.0</span>
<div style="position:absolute;left:280.6px;top:428.40000000000003px;width:4.4px;height:1px;background:#111"></div>
<div style="position:absolute;left:280.6px;top:462.8px;width:4.4px;height:1px;background:#111"></div>
<div style="position:absolute;left:280.6px;top:497.20000000000005px;width:4.4px;height:1px;background:#111"></div>
<div style="position:absolute;left:278px;top:531.2px;width:7px;height:1.2px;background:#111"></div>
<div style="position:absolute;left:284.8px;top:239.2px;width:1.1px;height:293.2px;background:#111"></div>
<div style="position:absolute;left:285.8px;top:239.2px;width:768.4px;height:293.2px;background:#d5d5d6"></div>
<div style="position:absolute;left:285.8px;top:239.6px;width:758.4px;height:153.8px;background:#bebebf;border:1px solid #151515;border-left:none;border-bottom:none;box-sizing:border-box;border-radius:0 6px 0 0;overflow:hidden"><div style="position:absolute;left:0;top:0;width:100%;height:16.8px;background:#dbdbdc"></div></div>
<div style="position:absolute;left:285.8px;top:394.2px;width:758.4px;height:138.2px;background:#bebebf;border-right:1px solid #151515;box-sizing:border-box"></div>
<div style="position:absolute;left:403.6px;top:257.4px;width:32.8px;height:275px;background:#e6eaf7"></div>
<div style="position:absolute;left:403.6px;top:240.6px;width:32.8px;height:16.8px;background:#eef0f8"></div>
<div style="position:absolute;left:285.8px;top:393.2px;width:768.4px;height:1.2px;background:#111"></div>
<svg style="position:absolute;left:0px;top:0px;overflow:visible;" width="1306" height="735" viewBox="0 0 1306 735"><polygon points="286,320.3 287,320.3 287,319.9 288,319.9 288,319.8 289,319.8 289,319.3 290,319.3 290,317.9 291,317.9 291,318.7 292,318.7 292,317.5 293,317.5 293,317.9 294,317.9 294,317.0 295,317.0 295,316.4 296,316.4 296,314.3 297,314.3 297,313.7 298,313.7 298,310.7 299,310.7 299,310.3 300,310.3 300,310.1 301,310.1 301,309.2 302,309.2 302,305.5 303,305.5 303,311.6 304,311.6 304,311.9 305,311.9 305,311.7 306,311.7 306,310.9 307,310.9 307,309.0 308,309.0 308,304.3 309,304.3 309,309.0 310,309.0 310,314.1 311,314.1 311,312.8 312,312.8 312,317.1 313,317.1 313,318.2 314,318.2 314,316.7 315,316.7 315,319.8 316,319.8 316,317.4 317,317.4 317,317.8 318,317.8 318,318.6 319,318.6 319,318.5 320,318.5 320,318.3 321,318.3 321,318.2 322,318.2 322,319.1 323,319.1 323,315.7 324,315.7 324,312.6 325,312.6 325,306.2 326,306.2 326,306.0 327,306.0 327,302.2 328,302.2 328,298.4 329,298.4 329,302.1 330,302.1 330,302.3 331,302.3 331,294.1 332,294.1 332,301.0 333,301.0 333,303.3 334,303.3 334,308.7 335,308.7 335,300.6 336,300.6 336,299.5 337,299.5 337,300.7 338,300.7 338,296.4 339,296.4 339,295.2 340,295.2 340,295.3 341,295.3 341,297.7 342,297.7 342,297.9 343,297.9 343,295.4 344,295.4 344,307.0 345,307.0 345,301.2 346,301.2 346,302.6 347,302.6 347,306.9 348,306.9 348,317.8 349,317.8 349,319.7 350,319.7 350,316.9 351,316.9 351,317.5 352,317.5 352,314.4 353,314.4 353,319.0 354,319.0 354,321.2 355,321.2 355,320.6 356,320.6 356,317.4 357,317.4 357,317.0 358,317.0 358,318.2 359,318.2 359,318.8 360,318.8 360,318.4 361,318.4 361,317.9 362,317.9 362,319.6 363,319.6 363,319.1 364,319.1 364,318.6 365,318.6 365,318.5 366,318.5 366,319.1 367,319.1 367,317.9 368,317.9 368,318.5 369,318.5 369,317.4 370,317.4 370,316.3 371,316.3 371,317.9 372,317.9 372,315.9 373,315.9 373,318.1 374,318.1 374,317.2 375,317.2 375,318.0 376,318.0 376,316.0 377,316.0 377,315.9 378,315.9 378,315.0 379,315.0 379,315.6 380,315.6 380,313.4 381,313.4 381,314.0 382,314.0 382,311.1 383,311.1 383,311.4 384,311.4 384,309.4 385,309.4 385,303.8 386,303.8 386,306.0 387,306.0 387,306.9 388,306.9 388,304.6 389,304.6 389,305.4 390,305.4 390,301.5 391,301.5 391,300.0 392,300.0 392,299.0 393,299.0 393,299.7 394,299.7 394,305.0 395,305.0 395,304.6 396,304.6 396,303.7 397,303.7 397,307.5 398,307.5 398,305.3 399,305.3 399,300.8 400,300.8 400,298.8 401,298.8 401,293.0 402,293.0 402,295.2 403,295.2 403,294.3 404,294.3 404,304.9 405,304.9 405,307.2 406,307.2 406,308.8 407,308.8 407,309.6 408,309.6 408,308.3 409,308.3 409,306.7 410,306.7 410,304.5 411,304.5 411,309.7 412,309.7 412,299.4 413,299.4 413,300.5 414,300.5 414,301.9 415,301.9 415,301.2 416,301.2 416,306.8 417,306.8 417,297.8 418,297.8 418,292.5 419,292.5 419,297.2 420,297.2 420,307.2 421,307.2 421,297.7 422,297.7 422,298.8 423,298.8 423,297.0 424,297.0 424,297.9 425,297.9 425,298.1 426,298.1 426,297.3 427,297.3 427,294.7 428,294.7 428,296.6 429,296.6 429,298.3 430,298.3 430,310.2 431,310.2 431,301.7 432,301.7 432,308.5 433,308.5 433,313.6 434,313.6 434,315.7 435,315.7 435,319.6 436,319.6 436,321.0 437,321.0 437,321.5 438,321.5 438,321.7 439,321.7 439,320.9 440,320.9 440,321.5 441,321.5 441,321.8 442,321.8 442,320.2 443,320.2 443,319.4 444,319.4 444,319.3 445,319.3 445,319.3 446,319.3 446,318.7 447,318.7 447,317.5 448,317.5 448,317.3 449,317.3 449,318.0 450,318.0 450,319.0 451,319.0 451,318.4 452,318.4 452,317.7 453,317.7 453,317.8 454,317.8 454,317.9 455,317.9 455,316.1 456,316.1 456,315.7 457,315.7 457,314.8 458,314.8 458,311.9 459,311.9 459,310.9 460,310.9 460,307.9 461,307.9 461,308.7 462,308.7 462,311.8 463,311.8 463,313.6 464,313.6 464,314.2 465,314.2 465,312.0 466,312.0 466,311.8 467,311.8 467,308.1 468,308.1 468,310.4 469,310.4 469,306.8 470,306.8 470,306.0 471,306.0 471,311.7 472,311.7 472,314.5 473,314.5 473,315.9 474,315.9 474,315.7 475,315.7 475,318.5 476,318.5 476,319.0 477,319.0 477,320.2 478,320.2 478,320.1 479,320.1 479,319.6 480,319.6 480,318.7 481,318.7 481,317.6 482,317.6 482,315.0 483,315.0 483,314.6 484,314.6 484,311.6 485,311.6 485,305.5 486,305.5 486,305.5 487,305.5 487,303.7 488,303.7 488,300.8 489,300.8 489,302.7 490,302.7 490,300.4 491,300.4 491,303.7 492,303.7 492,304.4 493,304.4 493,301.4 494,301.4 494,301.2 495,301.2 495,300.8 496,300.8 496,301.1 497,301.1 497,297.2 498,297.2 498,301.1 499,301.1 499,308.3 500,308.3 500,307.5 501,307.5 501,301.9 502,301.9 502,300.8 503,300.8 503,299.4 504,299.4 504,301.9 505,301.9 505,301.0 506,301.0 506,298.9 507,298.9 507,305.1 508,305.1 508,318.4 509,318.4 509,319.9 510,319.9 510,318.2 511,318.2 511,317.1 512,317.1 512,317.7 513,317.7 513,318.1 514,318.1 514,320.6 515,320.6 515,320.4 516,320.4 516,318.1 517,318.1 517,317.5 518,317.5 518,316.3 519,316.3 519,317.7 520,317.7 520,318.7 521,318.7 521,320.1 522,320.1 522,321.4 523,321.4 523,318.4 524,318.4 524,317.9 525,317.9 525,318.5 526,318.5 526,320.4 527,320.4 527,318.7 528,318.7 528,319.6 529,319.6 529,317.3 530,317.3 530,316.5 531,316.5 531,315.4 532,315.4 532,314.9 533,314.9 533,317.4 534,317.4 534,314.8 535,314.8 535,312.8 536,312.8 536,312.6 537,312.6 537,312.4 538,312.4 538,312.2 539,312.2 539,310.7 540,310.7 540,308.1 541,308.1 541,308.9 542,308.9 542,308.1 543,308.1 543,308.2 544,308.2 544,308.2 545,308.2 545,306.3 546,306.3 546,304.5 547,304.5 547,305.6 548,305.6 548,310.6 549,310.6 549,303.8 550,303.8 550,309.4 551,309.4 551,303.9 552,303.9 552,308.0 553,308.0 553,297.8 554,297.8 554,300.2 555,300.2 555,300.1 556,300.1 556,309.7 557,309.7 557,303.1 558,303.1 558,302.4 559,302.4 559,299.4 560,299.4 560,300.6 561,300.6 561,294.9 562,294.9 562,296.7 563,296.7 563,295.8 564,295.8 564,302.6 565,302.6 565,302.7 566,302.7 566,303.3 567,303.3 567,302.0 568,302.0 568,303.8 569,303.8 569,301.0 570,301.0 570,299.1 571,299.1 571,302.5 572,302.5 572,300.2 573,300.2 573,297.3 574,297.3 574,298.4 575,298.4 575,294.8 576,294.8 576,299.2 577,299.2 577,293.6 578,293.6 578,298.3 579,298.3 579,294.3 580,294.3 580,295.0 581,295.0 581,294.6 582,294.6 582,295.4 583,295.4 583,305.0 584,305.0 584,287.4 585,287.4 585,294.9 586,294.9 586,291.9 587,291.9 587,294.2 588,294.2 588,296.8 589,296.8 589,298.5 590,298.5 590,301.6 591,301.6 591,303.9 592,303.9 592,311.2 593,311.2 593,319.2 594,319.2 594,320.6 595,320.6 595,321.4 596,321.4 596,321.3 597,321.3 597,321.6 598,321.6 598,321.6 599,321.6 599,321.2 600,321.2 600,321.7 601,321.7 601,321.8 602,321.8 602,320.8 603,320.8 603,321.7 604,321.7 604,321.6 605,321.6 605,319.4 606,319.4 606,308.9 607,308.9 607,309.8 608,309.8 608,310.2 609,310.2 609,309.7 610,309.7 610,313.8 611,313.8 611,316.5 612,316.5 612,319.2 613,319.2 613,316.1 614,316.1 614,318.8 615,318.8 615,314.3 616,314.3 616,312.7 617,312.7 617,311.9 618,311.9 618,311.2 619,311.2 619,312.0 620,312.0 620,310.7 621,310.7 621,314.0 622,314.0 622,314.1 623,314.1 623,314.7 624,314.7 624,315.2 625,315.2 625,315.7 626,315.7 626,315.5 627,315.5 627,314.1 628,314.1 628,313.7 629,313.7 629,315.2 630,315.2 630,317.3 631,317.3 631,313.8 632,313.8 632,312.7 633,312.7 633,311.1 634,311.1 634,311.2 635,311.2 635,308.0 636,308.0 636,312.4 637,312.4 637,306.7 638,306.7 638,311.3 639,311.3 639,307.6 640,307.6 640,306.8 641,306.8 641,308.5 642,308.5 642,306.1 643,306.1 643,308.2 644,308.2 644,311.0 645,311.0 645,304.7 646,304.7 646,299.7 647,299.7 647,296.0 648,296.0 648,303.7 649,303.7 649,290.5 650,290.5 650,291.7 651,291.7 651,293.5 652,293.5 652,297.5 653,297.5 653,295.8 654,295.8 654,299.6 655,299.6 655,303.9 656,303.9 656,318.0 657,318.0 657,317.9 658,317.9 658,320.0 659,320.0 659,318.7 660,318.7 660,319.5 661,319.5 661,319.2 662,319.2 662,320.8 663,320.8 663,319.9 664,319.9 664,320.9 665,320.9 665,320.3 666,320.3 666,319.5 667,319.5 667,319.1 668,319.1 668,319.7 669,319.7 669,315.5 670,315.5 670,316.1 671,316.1 671,311.2 672,311.2 672,313.8 673,313.8 673,313.0 674,313.0 674,312.3 675,312.3 675,317.3 676,317.3 676,315.8 677,315.8 677,315.7 678,315.7 678,315.5 679,315.5 679,315.8 680,315.8 680,316.2 681,316.2 681,314.5 682,314.5 682,314.1 683,314.1 683,312.3 684,312.3 684,315.8 685,315.8 685,314.0 686,314.0 686,313.5 687,313.5 687,312.2 688,312.2 688,311.6 689,311.6 689,312.1 690,312.1 690,315.9 691,315.9 691,311.7 692,311.7 692,309.8 693,309.8 693,309.7 694,309.7 694,310.4 695,310.4 695,308.8 696,308.8 696,308.2 697,308.2 697,303.2 698,303.2 698,309.0 699,309.0 699,306.7 700,306.7 700,301.7 701,301.7 701,296.1 702,296.1 702,290.9 703,290.9 703,297.2 704,297.2 704,293.2 705,293.2 705,296.8 706,296.8 706,302.9 707,302.9 707,307.2 708,307.2 708,315.2 709,315.2 709,318.8 710,318.8 710,317.5 711,317.5 711,319.5 712,319.5 712,320.0 713,320.0 713,320.4 714,320.4 714,321.3 715,321.3 715,320.8 716,320.8 716,320.2 717,320.2 717,320.3 718,320.3 718,319.2 719,319.2 719,319.2 720,319.2 720,319.1 721,319.1 721,316.2 722,316.2 722,315.0 723,315.0 723,315.8 724,315.8 724,315.6 725,315.6 725,314.3 726,314.3 726,314.2 727,314.2 727,308.7 728,308.7 728,310.4 729,310.4 729,309.9 730,309.9 730,314.1 731,314.1 731,311.8 732,311.8 732,316.2 733,316.2 733,316.0 734,316.0 734,317.5 735,317.5 735,318.4 736,318.4 736,319.2 737,319.2 737,318.9 738,318.9 738,319.8 739,319.8 739,319.7 740,319.7 740,319.2 741,319.2 741,317.7 742,317.7 742,318.0 743,318.0 743,319.6 744,319.6 744,316.3 745,316.3 745,319.1 746,319.1 746,316.2 747,316.2 747,311.7 748,311.7 748,316.7 749,316.7 749,303.5 750,303.5 750,301.5 751,301.5 751,292.3 752,292.3 752,296.7 753,296.7 753,290.6 754,290.6 754,301.6 755,301.6 755,280.8 756,280.8 756,281.5 757,281.5 757,293.9 758,293.9 758,292.3 759,292.3 759,282.7 760,282.7 760,302.0 761,302.0 761,281.4 762,281.4 762,288.2 763,288.2 763,293.8 764,293.8 764,291.3 765,291.3 765,312.7 766,312.7 766,317.9 767,317.9 767,318.6 768,318.6 768,319.3 769,319.3 769,318.7 770,318.7 770,317.5 771,317.5 771,317.3 772,317.3 772,317.3 773,317.3 773,317.1 774,317.1 774,320.1 775,320.1 775,321.8 776,321.8 776,322.3 777,322.3 777,321.6 778,321.6 778,321.4 779,321.4 779,319.1 780,319.1 780,315.4 781,315.4 781,316.7 782,316.7 782,316.1 783,316.1 783,315.1 784,315.1 784,313.5 785,313.5 785,310.3 786,310.3 786,308.3 787,308.3 787,307.7 788,307.7 788,306.8 789,306.8 789,311.1 790,311.1 790,314.4 791,314.4 791,316.5 792,316.5 792,317.9 793,317.9 793,319.4 794,319.4 794,319.7 795,319.7 795,321.4 796,321.4 796,320.8 797,320.8 797,320.9 798,320.9 798,321.6 799,321.6 799,321.4 800,321.4 800,322.4 801,322.4 801,321.9 802,321.9 802,321.8 803,321.8 803,317.6 804,317.6 804,317.5 805,317.5 805,315.6 806,315.6 806,306.5 807,306.5 807,301.4 808,301.4 808,296.2 809,296.2 809,292.7 810,292.7 810,295.7 811,295.7 811,290.2 812,290.2 812,290.5 813,290.5 813,289.2 814,289.2 814,293.5 815,293.5 815,294.4 816,294.4 816,291.5 817,291.5 817,288.7 818,288.7 818,289.8 819,289.8 819,292.2 820,292.2 820,289.0 821,289.0 821,288.7 822,288.7 822,289.7 823,289.7 823,290.6 824,290.6 824,293.3 825,293.3 825,305.6 826,305.6 826,316.6 827,316.6 827,318.7 828,318.7 828,319.7 829,319.7 829,318.0 830,318.0 830,311.5 831,311.5 831,316.3 832,316.3 832,320.5 833,320.5 833,317.3 834,317.3 834,312.5 835,312.5 835,312.9 836,312.9 836,308.7 837,308.7 837,310.5 838,310.5 838,313.1 839,313.1 839,313.1 840,313.1 840,311.8 841,311.8 841,314.3 842,314.3 842,318.6 843,318.6 843,320.4 844,320.4 844,319.8 845,319.8 845,319.1 846,319.1 846,318.8 847,318.8 847,319.1 848,319.1 848,317.9 849,317.9 849,316.1 850,316.1 850,317.6 851,317.6 851,317.7 852,317.7 852,316.7 853,316.7 853,317.3 854,317.3 854,316.7 855,316.7 855,314.0 856,314.0 856,316.8 857,316.8 857,315.8 858,315.8 858,315.9 859,315.9 859,314.8 860,314.8 860,317.6 861,317.6 861,313.7 862,313.7 862,313.9 863,313.9 863,313.7 864,313.7 864,311.5 865,311.5 865,311.2 866,311.2 866,309.8 867,309.8 867,308.4 868,308.4 868,308.7 869,308.7 869,307.1 870,307.1 870,312.9 871,312.9 871,305.1 872,305.1 872,305.4 873,305.4 873,300.3 874,300.3 874,304.0 875,304.0 875,306.2 876,306.2 876,310.1 877,310.1 877,301.1 878,301.1 878,301.7 879,301.7 879,296.8 880,296.8 880,291.5 881,291.5 881,292.7 882,292.7 882,300.4 883,300.4 883,300.4 884,300.4 884,303.2 885,303.2 885,304.6 886,304.6 886,301.3 887,301.3 887,292.2 888,292.2 888,298.9 889,298.9 889,301.1 890,301.1 890,306.3 891,306.3 891,307.4 892,307.4 892,305.4 893,305.4 893,303.0 894,303.0 894,305.4 895,305.4 895,302.9 896,302.9 896,299.7 897,299.7 897,298.6 898,298.6 898,303.0 899,303.0 899,287.8 900,287.8 900,297.6 901,297.6 901,303.1 902,303.1 902,302.7 903,302.7 903,302.7 904,302.7 904,304.9 905,304.9 905,303.3 906,303.3 906,305.1 907,305.1 907,305.0 908,305.0 908,304.1 909,304.1 909,301.9 910,301.9 910,303.3 911,303.3 911,306.0 912,306.0 912,308.5 913,308.5 913,311.8 914,311.8 914,313.0 915,313.0 915,313.0 916,313.0 916,315.6 917,315.6 917,315.3 918,315.3 918,316.8 919,316.8 919,318.2 920,318.2 920,318.6 921,318.6 921,318.8 922,318.8 922,319.0 923,319.0 923,320.5 924,320.5 924,320.5 925,320.5 925,321.2 926,321.2 926,321.6 927,321.6 927,321.7 928,321.7 928,321.4 929,321.4 929,313.2 930,313.2 930,312.1 931,312.1 931,312.4 932,312.4 932,316.3 933,316.3 933,310.7 934,310.7 934,308.1 935,308.1 935,310.0 936,310.0 936,310.4 937,310.4 937,311.6 938,311.6 938,311.2 939,311.2 939,311.2 940,311.2 940,310.4 941,310.4 941,311.7 942,311.7 942,310.8 943,310.8 943,316.2 944,316.2 944,311.6 945,311.6 945,311.4 946,311.4 946,313.4 947,313.4 947,309.9 948,309.9 948,313.1 949,313.1 949,313.4 950,313.4 950,313.8 951,313.8 951,311.7 952,311.7 952,313.4 953,313.4 953,311.8 954,311.8 954,311.4 955,311.4 955,299.7 956,299.7 956,298.2 957,298.2 957,293.6 958,293.6 958,298.7 959,298.7 959,298.7 960,298.7 960,294.7 961,294.7 961,299.6 962,299.6 962,294.3 963,294.3 963,288.6 964,288.6 964,295.2 965,295.2 965,298.3 966,298.3 966,296.6 967,296.6 967,295.5 968,295.5 968,298.7 969,298.7 969,304.7 970,304.7 970,291.6 971,291.6 971,294.4 972,294.4 972,289.8 973,289.8 973,290.4 974,290.4 974,291.9 975,291.9 975,287.6 976,287.6 976,283.2 977,283.2 977,281.8 978,281.8 978,275.0 979,275.0 979,292.9 980,292.9 980,299.7 981,299.7 981,303.3 982,303.3 982,298.4 983,298.4 983,307.0 984,307.0 984,307.5 985,307.5 985,309.9 986,309.9 986,311.8 987,311.8 987,313.1 988,313.1 988,313.8 989,313.8 989,301.2 990,301.2 990,299.8 991,299.8 991,302.5 992,302.5 992,309.7 993,309.7 993,304.9 994,304.9 994,302.5 995,302.5 995,289.4 996,289.4 996,300.6 997,300.6 997,307.5 998,307.5 998,311.0 999,311.0 999,309.1 1000,309.1 1000,306.5 1001,306.5 1001,295.5 1002,295.5 1002,305.1 1003,305.1 1003,313.3 1004,313.3 1004,310.8 1005,310.8 1005,304.7 1006,304.7 1006,303.5 1007,303.5 1007,299.7 1008,299.7 1008,300.5 1009,300.5 1009,303.4 1010,303.4 1010,294.1 1011,294.1 1011,300.2 1012,300.2 1012,303.8 1013,303.8 1013,308.2 1014,308.2 1014,310.0 1015,310.0 1015,315.2 1016,315.2 1016,320.2 1017,320.2 1017,321.1 1018,321.1 1018,321.1 1019,321.1 1019,321.5 1020,321.5 1020,322.5 1021,322.5 1021,321.3 1022,321.3 1022,322.1 1023,322.1 1023,321.6 1024,321.6 1024,321.0 1025,321.0 1025,321.7 1026,321.7 1026,322.3 1027,322.3 1027,321.3 1028,321.3 1028,321.3 1029,321.3 1029,316.0 1030,316.0 1030,309.7 1031,309.7 1031,303.7 1032,303.7 1032,295.5 1033,295.5 1033,295.6 1034,295.6 1034,295.0 1035,295.0 1035,294.1 1036,294.1 1036,299.6 1037,299.6 1037,298.4 1038,298.4 1038,296.0 1039,296.0 1039,303.9 1040,303.9 1040,302.5 1041,302.5 1041,308.8 1042,308.8 1042,312.5 1043,312.5 1043,337.9 1042,337.9 1042,333.6 1041,333.6 1041,340.3 1040,340.3 1040,342.8 1039,342.8 1039,344.6 1038,344.6 1038,351.2 1037,351.2 1037,349.2 1036,349.2 1036,352.8 1035,352.8 1035,352.2 1034,352.2 1034,355.3 1033,355.3 1033,357.8 1032,357.8 1032,342.9 1031,342.9 1031,339.0 1030,339.0 1030,331.0 1029,331.0 1029,327.6 1028,327.6 1028,327.1 1027,327.1 1027,327.3 1026,327.3 1026,326.6 1025,326.6 1025,326.6 1024,326.6 1024,326.7 1023,326.7 1023,325.7 1022,325.7 1022,326.4 1021,326.4 1021,326.9 1020,326.9 1020,327.1 1019,327.1 1019,327.3 1018,327.3 1018,327.2 1017,327.2 1017,328.6 1016,328.6 1016,330.2 1015,330.2 1015,336.9 1014,336.9 1014,342.4 1013,342.4 1013,346.2 1012,346.2 1012,339.7 1011,339.7 1011,346.2 1010,346.2 1010,349.6 1009,349.6 1009,346.5 1008,346.5 1008,349.2 1007,349.2 1007,344.0 1006,344.0 1006,341.7 1005,341.7 1005,337.6 1004,337.6 1004,332.1 1003,332.1 1003,343.3 1002,343.3 1002,345.5 1001,345.5 1001,343.7 1000,343.7 1000,341.0 999,341.0 999,339.3 998,339.3 998,343.3 997,343.3 997,345.8 996,345.8 996,351.9 995,351.9 995,344.9 994,344.9 994,344.1 993,344.1 993,341.8 992,341.8 992,347.1 991,347.1 991,350.5 990,350.5 990,344.0 989,344.0 989,333.7 988,333.7 988,331.2 987,331.2 987,335.0 986,335.0 986,340.2 985,340.2 985,342.0 984,342.0 984,344.4 983,344.4 983,345.3 982,345.3 982,347.4 981,347.4 981,351.7 980,351.7 980,356.9 979,356.9 979,350.1 978,350.1 978,361.8 977,361.8 977,372.4 976,372.4 976,358.1 975,358.1 975,354.7 974,354.7 974,353.8 973,353.8 973,345.0 972,345.0 972,356.9 971,356.9 971,355.6 970,355.6 970,354.9 969,354.9 969,354.0 968,354.0 968,349.9 967,349.9 967,352.0 966,352.0 966,350.8 965,350.8 965,342.9 964,342.9 964,351.3 963,351.3 963,360.4 962,360.4 962,352.8 961,352.8 961,349.2 960,349.2 960,353.2 959,353.2 959,352.3 958,352.3 958,351.4 957,351.4 957,357.0 956,357.0 956,349.4 955,349.4 955,336.6 954,336.6 954,335.3 953,335.3 953,332.2 952,332.2 952,335.0 951,335.0 951,334.7 950,334.7 950,331.5 949,331.5 949,335.9 948,335.9 948,334.8 947,334.8 947,335.4 946,335.4 946,335.2 945,335.2 945,339.3 944,339.3 944,334.8 943,334.8 943,335.1 942,335.1 942,336.0 941,336.0 941,335.8 940,335.8 940,338.1 939,338.1 939,338.1 938,338.1 938,339.0 937,339.0 937,336.6 936,336.6 936,336.6 935,336.6 935,335.7 934,335.7 934,336.1 933,336.1 933,332.1 932,332.1 932,334.9 931,334.9 931,335.3 930,335.3 930,333.5 929,333.5 929,326.6 928,326.6 928,326.7 927,326.7 927,326.6 926,326.6 926,326.9 925,326.9 925,327.7 924,327.7 924,328.4 923,328.4 923,329.3 922,329.3 922,331.2 921,331.2 921,329.8 920,329.8 920,332.8 919,332.8 919,331.9 918,331.9 918,335.3 917,335.3 917,332.8 916,332.8 916,337.9 915,337.9 915,334.4 914,334.4 914,336.7 913,336.7 913,338.4 912,338.4 912,339.3 911,339.3 911,343.3 910,343.3 910,344.7 909,344.7 909,345.3 908,345.3 908,344.0 907,344.0 907,341.7 906,341.7 906,342.0 905,342.0 905,337.8 904,337.8 904,343.1 903,343.1 903,353.1 902,353.1 902,348.4 901,348.4 901,349.3 900,349.3 900,352.3 899,352.3 899,353.7 898,353.7 898,352.2 897,352.2 897,349.8 896,349.8 896,347.0 895,347.0 895,342.6 894,342.6 894,343.3 893,343.3 893,342.7 892,342.7 892,341.6 891,341.6 891,344.0 890,344.0 890,347.9 889,347.9 889,348.9 888,348.9 888,351.7 887,351.7 887,340.1 886,340.1 886,347.1 885,347.1 885,338.8 884,338.8 884,346.2 883,346.2 883,348.1 882,348.1 882,347.9 881,347.9 881,347.0 880,347.0 880,351.1 879,351.1 879,347.5 878,347.5 878,344.4 877,344.4 877,345.0 876,345.0 876,341.8 875,341.8 875,341.3 874,341.3 874,345.1 873,345.1 873,340.4 872,340.4 872,335.9 871,335.9 871,338.9 870,338.9 870,341.7 869,341.7 869,340.9 868,340.9 868,337.4 867,337.4 867,338.9 866,338.9 866,335.9 865,335.9 865,336.6 864,336.6 864,334.7 863,334.7 863,335.8 862,335.8 862,337.4 861,337.4 861,335.0 860,335.0 860,333.9 859,333.9 859,332.2 858,332.2 858,332.1 857,332.1 857,332.5 856,332.5 856,334.6 855,334.6 855,332.1 854,332.1 854,329.1 853,329.1 853,330.9 852,330.9 852,331.4 851,331.4 851,330.9 850,330.9 850,330.9 849,330.9 849,328.3 848,328.3 848,330.7 847,330.7 847,329.8 846,329.8 846,331.2 845,331.2 845,329.0 844,329.0 844,328.3 843,328.3 843,327.7 842,327.7 842,335.5 841,335.5 841,336.0 840,336.0 840,335.7 839,335.7 839,336.5 838,336.5 838,336.0 837,336.0 837,336.5 836,336.5 836,336.8 835,336.8 835,339.2 834,339.2 834,330.9 833,330.9 833,327.8 832,327.8 832,331.4 831,331.4 831,336.2 830,336.2 830,330.5 829,330.5 829,328.7 828,328.7 828,330.5 827,330.5 827,332.4 826,332.4 826,345.4 825,345.4 825,352.6 824,352.6 824,367.2 823,367.2 823,354.2 822,354.2 822,355.2 821,355.2 821,356.6 820,356.6 820,357.5 819,357.5 819,356.9 818,356.9 818,361.0 817,361.0 817,347.5 816,347.5 816,354.8 815,354.8 815,357.0 814,357.0 814,353.6 813,353.6 813,345.7 812,345.7 812,352.8 811,352.8 811,357.1 810,357.1 810,357.6 809,357.6 809,352.9 808,352.9 808,357.6 807,357.6 807,334.9 806,334.9 806,331.6 805,331.6 805,328.7 804,328.7 804,329.2 803,329.2 803,327.9 802,327.9 802,326.8 801,326.8 801,326.9 800,326.9 800,326.1 799,326.1 799,327.2 798,327.2 798,326.8 797,326.8 797,327.3 796,327.3 796,327.5 795,327.5 795,328.8 794,328.8 794,329.3 793,329.3 793,330.7 792,330.7 792,332.3 791,332.3 791,335.0 790,335.0 790,340.3 789,340.3 789,341.4 788,341.4 788,343.4 787,343.4 787,340.1 786,340.1 786,338.7 785,338.7 785,338.6 784,338.6 784,334.8 783,334.8 783,333.7 782,333.7 782,331.5 781,331.5 781,330.5 780,330.5 780,329.2 779,329.2 779,327.9 778,327.9 778,325.9 777,325.9 777,326.1 776,326.1 776,326.8 775,326.8 775,328.6 774,328.6 774,330.2 773,330.2 773,332.0 772,332.0 772,330.7 771,330.7 771,330.0 770,330.0 770,329.2 769,329.2 769,327.6 768,327.6 768,331.3 767,331.3 767,330.6 766,330.6 766,343.0 765,343.0 765,349.5 764,349.5 764,358.5 763,358.5 763,368.4 762,368.4 762,359.7 761,359.7 761,355.0 760,355.0 760,354.9 759,354.9 759,366.4 758,366.4 758,359.8 757,359.8 757,356.6 756,356.6 756,354.2 755,354.2 755,355.1 754,355.1 754,358.1 753,358.1 753,356.7 752,356.7 752,344.3 751,344.3 751,350.5 750,350.5 750,339.6 749,339.6 749,335.7 748,335.7 748,333.7 747,333.7 747,333.2 746,333.2 746,332.5 745,332.5 745,331.6 744,331.6 744,330.9 743,330.9 743,331.4 742,331.4 742,330.7 741,330.7 741,328.0 740,328.0 740,329.5 739,329.5 739,328.5 738,328.5 738,327.0 737,327.0 737,327.2 736,327.2 736,329.3 735,329.3 735,330.2 734,330.2 734,331.6 733,331.6 733,333.4 732,333.4 732,333.3 731,333.3 731,336.6 730,336.6 730,337.4 729,337.4 729,336.8 728,336.8 728,335.0 727,335.0 727,334.4 726,334.4 726,333.4 725,333.4 725,333.7 724,333.7 724,332.7 723,332.7 723,331.7 722,331.7 722,330.6 721,330.6 721,329.3 720,329.3 720,328.8 719,328.8 719,329.0 718,329.0 718,328.8 717,328.8 717,327.6 716,327.6 716,327.7 715,327.7 715,327.3 714,327.3 714,327.8 713,327.8 713,328.4 712,328.4 712,329.4 711,329.4 711,331.0 710,331.0 710,330.4 709,330.4 709,337.0 708,337.0 708,339.9 707,339.9 707,346.4 706,346.4 706,352.1 705,352.1 705,354.0 704,354.0 704,357.0 703,357.0 703,345.2 702,345.2 702,353.8 701,353.8 701,348.6 700,348.6 700,345.1 699,345.1 699,340.8 698,340.8 698,339.2 697,339.2 697,339.9 696,339.9 696,337.5 695,337.5 695,337.7 694,337.7 694,337.9 693,337.9 693,337.8 692,337.8 692,340.9 691,340.9 691,332.5 690,332.5 690,337.3 689,337.3 689,334.9 688,334.9 688,335.4 687,335.4 687,333.9 686,333.9 686,334.8 685,334.8 685,332.9 684,332.9 684,333.6 683,333.6 683,334.2 682,334.2 682,335.7 681,335.7 681,332.4 680,332.4 680,332.3 679,332.3 679,333.2 678,333.2 678,331.4 677,331.4 677,330.2 676,330.2 676,333.3 675,333.3 675,332.0 674,332.0 674,340.4 673,340.4 673,334.4 672,334.4 672,334.5 671,334.5 671,334.1 670,334.1 670,331.8 669,331.8 669,331.0 668,331.0 668,331.4 667,331.4 667,328.2 666,328.2 666,327.3 665,327.3 665,327.0 664,327.0 664,327.3 663,327.3 663,327.6 662,327.6 662,327.7 661,327.7 661,328.4 660,328.4 660,329.2 659,329.2 659,332.4 658,332.4 658,331.7 657,331.7 657,334.4 656,334.4 656,344.4 655,344.4 655,354.6 654,354.6 654,343.4 653,343.4 653,351.7 652,351.7 652,351.9 651,351.9 651,365.2 650,365.2 650,356.4 649,356.4 649,354.2 648,354.2 648,348.0 647,348.0 647,344.8 646,344.8 646,345.6 645,345.6 645,345.0 644,345.0 644,342.9 643,342.9 643,342.0 642,342.0 642,342.1 641,342.1 641,344.5 640,344.5 640,339.8 639,339.8 639,340.1 638,340.1 638,339.2 637,339.2 637,335.9 636,335.9 636,336.1 635,336.1 635,336.1 634,336.1 634,336.9 633,336.9 633,338.8 632,338.8 632,333.9 631,333.9 631,337.5 630,337.5 630,333.2 629,333.2 629,333.8 628,333.8 628,334.2 627,334.2 627,334.0 626,334.0 626,333.5 625,333.5 625,333.8 624,333.8 624,333.4 623,333.4 623,334.5 622,334.5 622,337.2 621,337.2 621,334.2 620,334.2 620,335.0 619,335.0 619,336.8 618,336.8 618,335.7 617,335.7 617,335.3 616,335.3 616,334.1 615,334.1 615,332.5 614,332.5 614,330.5 613,330.5 613,328.4 612,328.4 612,332.1 611,332.1 611,334.8 610,334.8 610,338.5 609,338.5 609,336.6 608,336.6 608,332.9 607,332.9 607,334.7 606,334.7 606,331.1 605,331.1 605,327.0 604,327.0 604,327.2 603,327.2 603,327.2 602,327.2 602,326.6 601,326.6 601,326.6 600,326.6 600,326.4 599,326.4 599,326.5 598,326.5 598,326.8 597,326.8 597,326.9 596,326.9 596,327.8 595,327.8 595,327.2 594,327.2 594,328.7 593,328.7 593,336.4 592,336.4 592,345.8 591,345.8 591,348.2 590,348.2 590,348.1 589,348.1 589,359.9 588,359.9 588,354.7 587,354.7 587,350.2 586,350.2 586,354.3 585,354.3 585,355.5 584,355.5 584,352.5 583,352.5 583,343.3 582,343.3 582,352.6 581,352.6 581,355.0 580,355.0 580,349.8 579,349.8 579,353.8 578,353.8 578,342.8 577,342.8 577,359.9 576,359.9 576,348.3 575,348.3 575,351.4 574,351.4 574,348.3 573,348.3 573,347.4 572,347.4 572,350.1 571,350.1 571,349.3 570,349.3 570,345.5 569,345.5 569,348.2 568,348.2 568,344.8 567,344.8 567,344.6 566,344.6 566,343.6 565,343.6 565,355.2 564,355.2 564,348.0 563,348.0 563,352.5 562,352.5 562,350.5 561,350.5 561,351.1 560,351.1 560,349.8 559,349.8 559,344.9 558,344.9 558,344.9 557,344.9 557,346.4 556,346.4 556,349.2 555,349.2 555,347.0 554,347.0 554,351.7 553,351.7 553,348.0 552,348.0 552,346.6 551,346.6 551,347.0 550,347.0 550,347.8 549,347.8 549,345.5 548,345.5 548,343.8 547,343.8 547,344.6 546,344.6 546,344.0 545,344.0 545,341.3 544,341.3 544,339.5 543,339.5 543,341.2 542,341.2 542,339.0 541,339.0 541,337.1 540,337.1 540,337.9 539,337.9 539,338.5 538,338.5 538,332.8 537,332.8 537,337.2 536,337.2 536,335.6 535,335.6 535,334.1 534,334.1 534,335.2 533,335.2 533,334.3 532,334.3 532,335.6 531,335.6 531,332.8 530,332.8 530,334.0 529,334.0 529,328.8 528,328.8 528,331.0 527,331.0 527,330.5 526,330.5 526,331.1 525,331.1 525,329.4 524,329.4 524,328.2 523,328.2 523,327.9 522,327.9 522,329.8 521,329.8 521,329.9 520,329.9 520,330.7 519,330.7 519,331.1 518,331.1 518,331.8 517,331.8 517,331.4 516,331.4 516,328.3 515,328.3 515,328.0 514,328.0 514,328.7 513,328.7 513,330.2 512,330.2 512,332.6 511,332.6 511,329.3 510,329.3 510,328.6 509,328.6 509,329.0 508,329.0 508,339.6 507,339.6 507,348.3 506,348.3 506,345.8 505,345.8 505,349.8 504,349.8 504,346.9 503,346.9 503,349.8 502,349.8 502,341.2 501,341.2 501,351.4 500,351.4 500,345.0 499,345.0 499,349.2 498,349.2 498,346.5 497,346.5 497,345.2 496,345.2 496,345.7 495,345.7 495,345.6 494,345.6 494,343.5 493,343.5 493,348.1 492,348.1 492,352.6 491,352.6 491,344.3 490,344.3 490,347.9 489,347.9 489,343.7 488,343.7 488,341.8 487,341.8 487,339.5 486,339.5 486,338.9 485,338.9 485,340.6 484,340.6 484,331.3 483,331.3 483,333.4 482,333.4 482,330.1 481,330.1 481,329.9 480,329.9 480,329.4 479,329.4 479,330.2 478,330.2 478,327.9 477,327.9 477,328.6 476,328.6 476,330.9 475,330.9 475,331.7 474,331.7 474,334.4 473,334.4 473,335.0 472,335.0 472,335.6 471,335.6 471,339.9 470,339.9 470,345.0 469,345.0 469,341.5 468,341.5 468,338.1 467,338.1 467,337.4 466,337.4 466,335.5 465,335.5 465,331.1 464,331.1 464,339.1 463,339.1 463,337.7 462,337.7 462,339.9 461,339.9 461,340.6 460,340.6 460,336.9 459,336.9 459,335.4 458,335.4 458,330.0 457,330.0 457,331.0 456,331.0 456,331.5 455,331.5 455,331.8 454,331.8 454,331.2 453,331.2 453,329.9 452,329.9 452,330.3 451,330.3 451,329.9 450,329.9 450,330.3 449,330.3 449,329.0 448,329.0 448,329.8 447,329.8 447,329.6 446,329.6 446,329.6 445,329.6 445,329.1 444,329.1 444,328.4 443,328.4 443,327.2 442,327.2 442,327.0 441,327.0 441,326.5 440,326.5 440,327.5 439,327.5 439,327.7 438,327.7 438,326.7 437,326.7 437,326.9 436,326.9 436,329.1 435,329.1 435,332.1 434,332.1 434,334.4 433,334.4 433,339.8 432,339.8 432,347.1 431,347.1 431,347.3 430,347.3 430,347.5 429,347.5 429,348.1 428,348.1 428,352.1 427,352.1 427,351.7 426,351.7 426,353.2 425,353.2 425,348.5 424,348.5 424,349.7 423,349.7 423,350.6 422,350.6 422,349.4 421,349.4 421,357.0 420,357.0 420,340.7 419,340.7 419,349.3 418,349.3 418,352.2 417,352.2 417,348.4 416,348.4 416,349.7 415,349.7 415,350.7 414,350.7 414,350.9 413,350.9 413,345.4 412,345.4 412,348.3 411,348.3 411,344.4 410,344.4 410,343.2 409,343.2 409,335.8 408,335.8 408,341.5 407,341.5 407,339.6 406,339.6 406,343.0 405,343.0 405,342.8 404,342.8 404,346.3 403,346.3 403,348.6 402,348.6 402,354.1 401,354.1 401,347.6 400,347.6 400,344.7 399,344.7 399,349.7 398,349.7 398,341.3 397,341.3 397,341.4 396,341.4 396,350.8 395,350.8 395,346.0 394,346.0 394,346.0 393,346.0 393,344.8 392,344.8 392,338.9 391,338.9 391,347.7 390,347.7 390,350.6 389,350.6 389,337.3 388,337.3 388,343.3 387,343.3 387,346.5 386,346.5 386,335.0 385,335.0 385,338.6 384,338.6 384,338.6 383,338.6 383,335.5 382,335.5 382,336.7 381,336.7 381,335.2 380,335.2 380,330.7 379,330.7 379,334.1 378,334.1 378,332.5 377,332.5 377,331.9 376,331.9 376,333.1 375,333.1 375,331.5 374,331.5 374,330.9 373,330.9 373,332.6 372,332.6 372,332.4 371,332.4 371,330.2 370,330.2 370,331.0 369,331.0 369,330.1 368,330.1 368,330.6 367,330.6 367,330.2 366,330.2 366,331.4 365,331.4 365,330.2 364,330.2 364,329.4 363,329.4 363,327.6 362,327.6 362,328.8 361,328.8 361,329.3 360,329.3 360,329.5 359,329.5 359,330.0 358,330.0 358,330.8 357,330.8 357,329.9 356,329.9 356,329.4 355,329.4 355,327.8 354,327.8 354,329.8 353,329.8 353,331.4 352,331.4 352,330.1 351,330.1 351,329.8 350,329.8 350,328.5 349,328.5 349,330.4 348,330.4 348,338.6 347,338.6 347,340.1 346,340.1 346,346.2 345,346.2 345,347.4 344,347.4 344,353.4 343,353.4 343,351.0 342,351.0 342,351.8 341,351.8 341,351.3 340,351.3 340,348.7 339,348.7 339,350.9 338,350.9 338,346.5 337,346.5 337,356.3 336,356.3 336,348.5 335,348.5 335,346.8 334,346.8 334,345.4 333,345.4 333,349.7 332,349.7 332,345.6 331,345.6 331,350.1 330,350.1 330,346.1 329,346.1 329,346.7 328,346.7 328,344.6 327,344.6 327,345.3 326,345.3 326,342.0 325,342.0 325,335.8 324,335.8 324,333.7 323,333.7 323,329.7 322,329.7 322,329.5 321,329.5 321,330.3 320,330.3 320,329.6 319,329.6 319,329.6 318,329.6 318,329.2 317,329.2 317,329.0 316,329.0 316,330.0 315,330.0 315,331.2 314,331.2 314,333.4 313,333.4 313,333.8 312,333.8 312,336.0 311,336.0 311,338.7 310,338.7 310,343.0 309,343.0 309,342.9 308,342.9 308,338.4 307,338.4 307,337.7 306,337.7 306,336.5 305,336.5 305,337.5 304,337.5 304,341.7 303,341.7 303,337.4 302,337.4 302,344.8 301,344.8 301,340.8 300,340.8 300,339.5 299,339.5 299,336.0 298,336.0 298,333.6 297,333.6 297,332.2 296,332.2 296,331.9 295,331.9 295,331.1 294,331.1 294,331.4 293,331.4 293,332.6 292,332.6 292,330.0 291,330.0 291,329.2 290,329.2 290,329.6 289,329.6 289,328.6 288,328.6 288,330.1 287,330.1 287,329.5 286,329.5" fill="#3b41cf"/><polygon points="286,323.1 287,323.1 287,323.0 288,323.0 288,323.0 289,323.0 289,322.8 290,322.8 290,322.9 291,322.9 291,322.5 292,322.5 292,322.7 293,322.7 293,322.3 294,322.3 294,322.4 295,322.4 295,322.3 296,322.3 296,322.1 297,322.1 297,321.3 298,321.3 298,320.8 299,320.8 299,320.2 300,320.2 300,319.5 301,319.5 301,320.0 302,320.0 302,320.7 303,320.7 303,320.7 304,320.7 304,321.2 305,321.2 305,321.2 306,321.2 306,320.2 307,320.2 307,319.7 308,319.7 308,319.1 309,319.1 309,319.1 310,319.1 310,320.8 311,320.8 311,321.3 312,321.3 312,321.8 313,321.8 313,321.9 314,321.9 314,322.1 315,322.1 315,322.6 316,322.6 316,322.8 317,322.8 317,322.6 318,322.6 318,323.0 319,323.0 319,322.9 320,322.9 320,322.6 321,322.6 321,322.9 322,322.9 322,322.4 323,322.4 323,322.0 324,322.0 324,320.7 325,320.7 325,319.3 326,319.3 326,318.3 327,318.3 327,317.6 328,317.6 328,317.5 329,317.5 329,317.0 330,317.0 330,318.0 331,318.0 331,317.5 332,317.5 332,317.3 333,317.3 333,317.9 334,317.9 334,318.3 335,318.3 335,316.9 336,316.9 336,317.7 337,317.7 337,317.4 338,317.4 338,317.0 339,317.0 339,317.4 340,317.4 340,315.9 341,315.9 341,316.5 342,316.5 342,316.5 343,316.5 343,316.0 344,316.0 344,318.3 345,318.3 345,316.7 346,316.7 346,317.0 347,317.0 347,320.0 348,320.0 348,322.7 349,322.7 349,323.1 350,323.1 350,322.6 351,322.6 351,322.1 352,322.1 352,322.3 353,322.3 353,322.8 354,322.8 354,323.2 355,323.2 355,323.0 356,323.0 356,323.0 357,323.0 357,322.2 358,322.2 358,322.7 359,322.7 359,322.7 360,322.7 360,322.8 361,322.8 361,322.8 362,322.8 362,322.7 363,322.7 363,322.8 364,322.8 364,322.7 365,322.7 365,322.9 366,322.9 366,322.9 367,322.9 367,322.8 368,322.8 368,322.7 369,322.7 369,322.3 370,322.3 370,322.5 371,322.5 371,322.6 372,322.6 372,322.6 373,322.6 373,322.3 374,322.3 374,322.1 375,322.1 375,322.2 376,322.2 376,322.4 377,322.4 377,321.7 378,321.7 378,322.0 379,322.0 379,321.3 380,321.3 380,321.3 381,321.3 381,321.0 382,321.0 382,321.3 383,321.3 383,319.9 384,319.9 384,319.9 385,319.9 385,320.2 386,320.2 386,320.3 387,320.3 387,319.6 388,319.6 388,318.3 389,318.3 389,318.8 390,318.8 390,319.1 391,319.1 391,318.3 392,318.3 392,317.3 393,317.3 393,318.9 394,318.9 394,319.0 395,319.0 395,318.2 396,318.2 396,318.4 397,318.4 397,319.3 398,319.3 398,319.6 399,319.6 399,318.8 400,318.8 400,316.5 401,316.5 401,316.3 402,316.3 402,316.2 403,316.2 403,318.7 404,318.7 404,318.1 405,318.1 405,319.5 406,319.5 406,319.7 407,319.7 407,320.5 408,320.5 408,320.0 409,320.0 409,319.3 410,319.3 410,319.6 411,319.6 411,318.1 412,318.1 412,318.3 413,318.3 413,318.8 414,318.8 414,317.2 415,317.2 415,316.3 416,316.3 416,317.2 417,317.2 417,316.8 418,316.8 418,318.1 419,318.1 419,318.1 420,318.1 420,317.3 421,317.3 421,318.3 422,318.3 422,316.1 423,316.1 423,316.3 424,316.3 424,317.0 425,317.0 425,317.9 426,317.9 426,315.9 427,315.9 427,317.2 428,317.2 428,317.8 429,317.8 429,318.1 430,318.1 430,319.1 431,319.1 431,319.6 432,319.6 432,319.8 433,319.8 433,321.7 434,321.7 434,322.2 435,322.2 435,323.0 436,323.0 436,323.2 437,323.2 437,323.2 438,323.2 438,323.2 439,323.2 439,323.2 440,323.2 440,323.2 441,323.2 441,323.2 442,323.2 442,323.2 443,323.2 443,323.2 444,323.2 444,323.0 445,323.0 445,322.8 446,322.8 446,322.9 447,322.9 447,322.7 448,322.7 448,322.8 449,322.8 449,322.9 450,322.9 450,322.8 451,322.8 451,322.4 452,322.4 452,322.5 453,322.5 453,322.6 454,322.6 454,322.4 455,322.4 455,322.1 456,322.1 456,321.9 457,321.9 457,322.1 458,322.1 458,320.9 459,320.9 459,321.0 460,321.0 460,320.4 461,320.4 461,320.1 462,320.1 462,320.6 463,320.6 463,321.5 464,321.5 464,321.8 465,321.8 465,320.6 466,320.6 466,320.3 467,320.3 467,320.7 468,320.7 468,320.1 469,320.1 469,319.8 470,319.8 470,320.5 471,320.5 471,320.3 472,320.3 472,321.6 473,321.6 473,322.1 474,322.1 474,321.9 475,321.9 475,322.3 476,322.3 476,322.9 477,322.9 477,322.9 478,322.9 478,322.8 479,322.8 479,322.9 480,322.9 480,322.7 481,322.7 481,322.6 482,322.6 482,321.9 483,321.9 483,321.4 484,321.4 484,320.6 485,320.6 485,320.4 486,320.4 486,319.3 487,319.3 487,318.3 488,318.3 488,319.3 489,319.3 489,318.6 490,318.6 490,318.8 491,318.8 491,318.9 492,318.9 492,319.0 493,319.0 493,318.7 494,318.7 494,319.3 495,319.3 495,319.0 496,319.0 496,318.8 497,318.8 497,319.0 498,319.0 498,318.6 499,318.6 499,318.0 500,318.0 500,317.2 501,317.2 501,317.7 502,317.7 502,317.2 503,317.2 503,318.3 504,318.3 504,317.7 505,317.7 505,317.9 506,317.9 506,318.2 507,318.2 507,319.9 508,319.9 508,322.8 509,322.8 509,322.9 510,322.9 510,322.9 511,322.9 511,322.3 512,322.3 512,322.7 513,322.7 513,322.8 514,322.8 514,323.2 515,323.2 515,323.1 516,323.1 516,322.8 517,322.8 517,322.4 518,322.4 518,322.2 519,322.2 519,322.3 520,322.3 520,322.7 521,322.7 521,322.9 522,322.9 522,323.1 523,323.1 523,322.9 524,322.9 524,322.9 525,322.9 525,322.6 526,322.6 526,322.9 527,322.9 527,322.3 528,322.3 528,322.2 529,322.2 529,322.3 530,322.3 530,321.7 531,321.7 531,321.9 532,321.9 532,321.6 533,321.6 533,321.8 534,321.8 534,321.8 535,321.8 535,321.1 536,321.1 536,321.2 537,321.2 537,320.6 538,320.6 538,320.4 539,320.4 539,320.9 540,320.9 540,319.7 541,319.7 541,320.1 542,320.1 542,320.1 543,320.1 543,319.3 544,319.3 544,320.1 545,320.1 545,319.6 546,319.6 546,319.6 547,319.6 547,319.5 548,319.5 548,319.5 549,319.5 549,318.6 550,318.6 550,318.5 551,318.5 551,318.0 552,318.0 552,317.9 553,317.9 553,316.9 554,316.9 554,317.0 555,317.0 555,318.1 556,318.1 556,317.9 557,317.9 557,318.9 558,318.9 558,319.1 559,319.1 559,316.7 560,316.7 560,316.0 561,316.0 561,315.8 562,315.8 562,317.0 563,317.0 563,316.7 564,316.7 564,318.3 565,318.3 565,317.9 566,317.9 566,317.5 567,317.5 567,318.8 568,318.8 568,318.2 569,318.2 569,317.7 570,317.7 570,317.8 571,317.8 571,318.2 572,318.2 572,318.6 573,318.6 573,317.4 574,317.4 574,316.1 575,316.1 575,316.2 576,316.2 576,318.0 577,318.0 577,317.7 578,317.7 578,315.7 579,315.7 579,316.0 580,316.0 580,317.4 581,317.4 581,315.6 582,315.6 582,316.6 583,316.6 583,316.5 584,316.5 584,316.5 585,316.5 585,316.6 586,316.6 586,317.6 587,317.6 587,315.1 588,315.1 588,316.3 589,316.3 589,317.5 590,317.5 590,318.3 591,318.3 591,319.0 592,319.0 592,320.5 593,320.5 593,322.9 594,322.9 594,323.2 595,323.2 595,323.2 596,323.2 596,323.2 597,323.2 597,323.2 598,323.2 598,323.2 599,323.2 599,323.2 600,323.2 600,323.2 601,323.2 601,323.2 602,323.2 602,323.2 603,323.2 603,323.2 604,323.2 604,323.2 605,323.2 605,322.5 606,322.5 606,321.4 607,321.4 607,321.3 608,321.3 608,321.2 609,321.2 609,321.0 610,321.0 610,321.7 611,321.7 611,322.5 612,322.5 612,323.1 613,323.1 613,322.5 614,322.5 614,322.2 615,322.2 615,321.4 616,321.4 616,321.8 617,321.8 617,321.1 618,321.1 618,321.1 619,321.1 619,320.8 620,320.8 620,321.4 621,321.4 621,321.2 622,321.2 622,321.4 623,321.4 623,322.2 624,322.2 624,321.4 625,321.4 625,322.0 626,322.0 626,322.0 627,322.0 627,321.3 628,321.3 628,321.9 629,321.9 629,321.5 630,321.5 630,321.0 631,321.0 631,321.6 632,321.6 632,321.7 633,321.7 633,321.3 634,321.3 634,320.6 635,320.6 635,321.1 636,321.1 636,320.7 637,320.7 637,320.6 638,320.6 638,320.2 639,320.2 639,320.6 640,320.6 640,320.3 641,320.3 641,320.5 642,320.5 642,320.3 643,320.3 643,319.8 644,319.8 644,319.4 645,319.4 645,319.1 646,319.1 646,318.9 647,318.9 647,316.4 648,316.4 648,315.1 649,315.1 649,315.5 650,315.5 650,315.1 651,315.1 651,316.3 652,316.3 652,317.2 653,317.2 653,315.3 654,315.3 654,316.8 655,316.8 655,317.5 656,317.5 656,321.4 657,321.4 657,322.6 658,322.6 658,322.3 659,322.3 659,322.9 660,322.9 660,322.9 661,322.9 661,323.2 662,323.2 662,323.1 663,323.1 663,323.2 664,323.2 664,323.2 665,323.2 665,323.2 666,323.2 666,323.1 667,323.1 667,322.7 668,322.7 668,322.2 669,322.2 669,321.9 670,321.9 670,321.7 671,321.7 671,321.7 672,321.7 672,321.6 673,321.6 673,320.7 674,320.7 674,320.7 675,320.7 675,321.4 676,321.4 676,321.7 677,321.7 677,322.3 678,322.3 678,321.8 679,321.8 679,322.1 680,322.1 680,321.7 681,321.7 681,321.8 682,321.8 682,321.6 683,321.6 683,321.7 684,321.7 684,321.2 685,321.2 685,322.0 686,322.0 686,321.4 687,321.4 687,321.3 688,321.3 688,321.5 689,321.5 689,321.1 690,321.1 690,321.1 691,321.1 691,320.7 692,320.7 692,321.0 693,321.0 693,320.5 694,320.5 694,320.5 695,320.5 695,320.5 696,320.5 696,320.2 697,320.2 697,319.9 698,319.9 698,320.2 699,320.2 699,319.4 700,319.4 700,317.2 701,317.2 701,316.7 702,316.7 702,314.8 703,314.8 703,314.6 704,314.6 704,315.7 705,315.7 705,317.1 706,317.1 706,317.7 707,317.7 707,320.2 708,320.2 708,321.2 709,321.2 709,322.8 710,322.8 710,322.8 711,322.8 711,322.7 712,322.7 712,323.1 713,323.1 713,323.2 714,323.2 714,323.2 715,323.2 715,323.2 716,323.2 716,323.2 717,323.2 717,323.2 718,323.2 718,322.8 719,322.8 719,322.8 720,322.8 720,322.8 721,322.8 721,322.4 722,322.4 722,322.0 723,322.0 723,322.0 724,322.0 724,321.7 725,321.7 725,321.8 726,321.8 726,321.1 727,321.1 727,321.1 728,321.1 728,321.1 729,321.1 729,320.8 730,320.8 730,321.2 731,321.2 731,321.3 732,321.3 732,321.9 733,321.9 733,322.3 734,322.3 734,322.5 735,322.5 735,322.9 736,322.9 736,323.0 737,323.0 737,323.0 738,323.0 738,323.1 739,323.1 739,322.7 740,322.7 740,322.7 741,322.7 741,322.5 742,322.5 742,322.5 743,322.5 743,322.5 744,322.5 744,322.2 745,322.2 745,322.1 746,322.1 746,321.9 747,321.9 747,321.3 748,321.3 748,321.4 749,321.4 749,320.2 750,320.2 750,316.5 751,316.5 751,316.7 752,316.7 752,316.1 753,316.1 753,315.9 754,315.9 754,314.5 755,314.5 755,316.0 756,316.0 756,314.8 757,314.8 757,316.1 758,316.1 758,314.5 759,314.5 759,315.1 760,315.1 760,316.2 761,316.2 761,315.5 762,315.5 762,313.7 763,313.7 763,314.9 764,314.9 764,317.4 765,317.4 765,320.3 766,320.3 766,322.3 767,322.3 767,322.8 768,322.8 768,322.7 769,322.7 769,322.8 770,322.8 770,322.8 771,322.8 771,322.2 772,322.2 772,322.0 773,322.0 773,322.6 774,322.6 774,323.0 775,323.0 775,323.2 776,323.2 776,323.2 777,323.2 777,323.2 778,323.2 778,323.2 779,323.2 779,323.0 780,323.0 780,322.1 781,322.1 781,321.8 782,321.8 782,321.9 783,321.9 783,321.5 784,321.5 784,321.2 785,321.2 785,320.0 786,320.0 786,319.8 787,319.8 787,318.5 788,318.5 788,318.6 789,318.6 789,320.3 790,320.3 790,321.5 791,321.5 791,322.3 792,322.3 792,322.6 793,322.6 793,322.6 794,322.6 794,323.0 795,323.0 795,323.2 796,323.2 796,323.2 797,323.2 797,323.2 798,323.2 798,323.2 799,323.2 799,323.2 800,323.2 800,323.2 801,323.2 801,323.2 802,323.2 802,323.2 803,323.2 803,322.7 804,322.7 804,322.1 805,322.1 805,322.2 806,322.2 806,319.5 807,319.5 807,317.1 808,317.1 808,315.0 809,315.0 809,314.9 810,314.9 810,315.3 811,315.3 811,314.4 812,314.4 812,315.4 813,315.4 813,316.1 814,316.1 814,316.4 815,316.4 815,314.9 816,314.9 816,313.7 817,313.7 817,316.3 818,316.3 818,313.6 819,313.6 819,314.8 820,314.8 820,313.5 821,313.5 821,313.6 822,313.6 822,315.2 823,315.2 823,315.1 824,315.1 824,316.8 825,316.8 825,318.7 826,318.7 826,321.7 827,321.7 827,322.4 828,322.4 828,322.9 829,322.9 829,322.5 830,322.5 830,320.9 831,320.9 831,321.7 832,321.7 832,323.2 833,323.2 833,322.2 834,322.2 834,321.3 835,321.3 835,321.2 836,321.2 836,320.9 837,320.9 837,320.5 838,320.5 838,321.1 839,321.1 839,321.1 840,321.1 840,320.6 841,320.6 841,321.7 842,321.7 842,323.0 843,323.0 843,323.2 844,323.2 844,322.9 845,322.9 845,322.7 846,322.7 846,322.7 847,322.7 847,322.9 848,322.9 848,322.7 849,322.7 849,322.5 850,322.5 850,322.4 851,322.4 851,322.2 852,322.2 852,322.3 853,322.3 853,322.6 854,322.6 854,321.8 855,321.8 855,322.3 856,322.3 856,321.6 857,321.6 857,321.5 858,321.5 858,321.4 859,321.4 859,321.7 860,321.7 860,321.9 861,321.9 861,321.4 862,321.4 862,321.6 863,321.6 863,321.5 864,321.5 864,321.3 865,321.3 865,321.0 866,321.0 866,320.6 867,320.6 867,320.4 868,320.4 868,320.3 869,320.3 869,319.2 870,319.2 870,320.4 871,320.4 871,320.0 872,320.0 872,319.0 873,319.0 873,318.7 874,318.7 874,319.1 875,319.1 875,318.1 876,318.1 876,319.2 877,319.2 877,319.0 878,319.0 878,318.5 879,318.5 879,318.3 880,318.3 880,317.5 881,317.5 881,317.2 882,317.2 882,317.0 883,317.0 883,317.1 884,317.1 884,317.4 885,317.4 885,318.0 886,318.0 886,317.1 887,317.1 887,317.9 888,317.9 888,318.7 889,318.7 889,317.4 890,317.4 890,318.7 891,318.7 891,319.8 892,319.8 892,319.7 893,319.7 893,319.1 894,319.1 894,318.7 895,318.7 895,317.9 896,317.9 896,316.7 897,316.7 897,317.4 898,317.4 898,314.9 899,314.9 899,315.3 900,315.3 900,316.8 901,316.8 901,318.5 902,318.5 902,318.8 903,318.8 903,318.9 904,318.9 904,318.5 905,318.5 905,318.8 906,318.8 906,318.5 907,318.5 907,319.0 908,319.0 908,317.7 909,317.7 909,319.3 910,319.3 910,318.2 911,318.2 911,319.7 912,319.7 912,320.4 913,320.4 913,320.6 914,320.6 914,320.8 915,320.8 915,321.1 916,321.1 916,322.0 917,322.0 917,321.8 918,321.8 918,321.9 919,321.9 919,322.1 920,322.1 920,322.4 921,322.4 921,322.9 922,322.9 922,323.0 923,323.0 923,323.1 924,323.1 924,323.1 925,323.1 925,323.2 926,323.2 926,323.2 927,323.2 927,323.2 928,323.2 928,323.2 929,323.2 929,322.1 930,322.1 930,321.1 931,321.1 931,321.5 932,321.5 932,320.8 933,320.8 933,320.5 934,320.5 934,321.3 935,321.3 935,320.9 936,320.9 936,320.1 937,320.1 937,321.1 938,321.1 938,321.1 939,321.1 939,321.1 940,321.1 940,320.2 941,320.2 941,320.8 942,320.8 942,320.8 943,320.8 943,320.6 944,320.6 944,321.0 945,321.0 945,321.6 946,321.6 946,321.5 947,321.5 947,321.6 948,321.6 948,321.7 949,321.7 949,321.2 950,321.2 950,321.6 951,321.6 951,321.2 952,321.2 952,321.0 953,321.0 953,320.8 954,320.8 954,321.1 955,321.1 955,316.0 956,316.0 956,316.0 957,316.0 957,316.9 958,316.9 958,315.4 959,315.4 959,315.8 960,315.8 960,315.4 961,315.4 961,317.1 962,317.1 962,315.6 963,315.6 963,316.1 964,316.1 964,317.5 965,317.5 965,316.0 966,316.0 966,316.1 967,316.1 967,316.0 968,316.0 968,315.4 969,315.4 969,315.3 970,315.3 970,316.0 971,316.0 971,316.6 972,316.6 972,314.6 973,314.6 973,316.5 974,316.5 974,314.9 975,314.9 975,314.2 976,314.2 976,313.7 977,313.7 977,312.6 978,312.6 978,312.8 979,312.8 979,316.4 980,316.4 980,318.3 981,318.3 981,317.6 982,317.6 982,319.3 983,319.3 983,318.7 984,318.7 984,319.2 985,319.2 985,320.8 986,320.8 986,320.9 987,320.9 987,321.4 988,321.4 988,321.3 989,321.3 989,317.3 990,317.3 990,317.3 991,317.3 991,317.7 992,317.7 992,319.9 993,319.9 993,320.1 994,320.1 994,318.8 995,318.8 995,316.3 996,316.3 996,318.0 997,318.0 997,319.3 998,319.3 998,320.8 999,320.8 999,320.0 1000,320.0 1000,318.5 1001,318.5 1001,318.4 1002,318.4 1002,318.9 1003,318.9 1003,321.3 1004,321.3 1004,320.8 1005,320.8 1005,319.0 1006,319.0 1006,318.2 1007,318.2 1007,317.0 1008,317.0 1008,317.3 1009,317.3 1009,316.9 1010,316.9 1010,317.3 1011,317.3 1011,318.4 1012,318.4 1012,318.4 1013,318.4 1013,319.9 1014,319.9 1014,320.6 1015,320.6 1015,321.9 1016,321.9 1016,322.9 1017,322.9 1017,323.2 1018,323.2 1018,323.2 1019,323.2 1019,323.2 1020,323.2 1020,323.2 1021,323.2 1021,323.2 1022,323.2 1022,323.2 1023,323.2 1023,323.2 1024,323.2 1024,323.2 1025,323.2 1025,323.2 1026,323.2 1026,323.2 1027,323.2 1027,323.2 1028,323.2 1028,323.2 1029,323.2 1029,322.4 1030,322.4 1030,320.4 1031,320.4 1031,318.2 1032,318.2 1032,317.3 1033,317.3 1033,315.8 1034,315.8 1034,316.8 1035,316.8 1035,316.0 1036,316.0 1036,315.9 1037,315.9 1037,317.2 1038,317.2 1038,317.8 1039,317.8 1039,318.6 1040,318.6 1040,319.9 1041,319.9 1041,320.9 1042,320.9 1042,320.3 1043,320.3 1043,328.1 1042,328.1 1042,327.5 1041,327.5 1041,328.5 1040,328.5 1040,329.8 1039,329.8 1039,330.6 1038,330.6 1038,331.2 1037,331.2 1037,332.5 1036,332.5 1036,332.4 1035,332.4 1035,331.6 1034,331.6 1034,332.6 1033,332.6 1033,331.1 1032,331.1 1032,330.2 1031,330.2 1031,328.0 1030,328.0 1030,326.0 1029,326.0 1029,325.2 1028,325.2 1028,325.2 1027,325.2 1027,325.2 1026,325.2 1026,325.2 1025,325.2 1025,325.2 1024,325.2 1024,325.2 1023,325.2 1023,325.2 1022,325.2 1022,325.2 1021,325.2 1021,325.2 1020,325.2 1020,325.2 1019,325.2 1019,325.2 1018,325.2 1018,325.2 1017,325.2 1017,325.5 1016,325.5 1016,326.5 1015,326.5 1015,327.8 1014,327.8 1014,328.5 1013,328.5 1013,330.0 1012,330.0 1012,330.0 1011,330.0 1011,331.1 1010,331.1 1010,331.5 1009,331.5 1009,331.1 1008,331.1 1008,331.4 1007,331.4 1007,330.2 1006,330.2 1006,329.4 1005,329.4 1005,327.6 1004,327.6 1004,327.1 1003,327.1 1003,329.5 1002,329.5 1002,330.0 1001,330.0 1001,329.9 1000,329.9 1000,328.4 999,328.4 999,327.6 998,327.6 998,329.1 997,329.1 997,330.4 996,330.4 996,332.1 995,332.1 995,329.6 994,329.6 994,328.3 993,328.3 993,328.5 992,328.5 992,330.7 991,330.7 991,331.1 990,331.1 990,331.1 989,331.1 989,327.1 988,327.1 988,327.0 987,327.0 987,327.5 986,327.5 986,327.6 985,327.6 985,329.2 984,329.2 984,329.7 983,329.7 983,329.1 982,329.1 982,330.8 981,330.8 981,330.1 980,330.1 980,332.0 979,332.0 979,335.6 978,335.6 978,335.8 977,335.8 977,334.7 976,334.7 976,334.2 975,334.2 975,333.5 974,333.5 974,331.9 973,331.9 973,333.8 972,333.8 972,331.8 971,331.8 971,332.4 970,332.4 970,333.1 969,333.1 969,333.0 968,333.0 968,332.4 967,332.4 967,332.3 966,332.3 966,332.4 965,332.4 965,330.9 964,330.9 964,332.3 963,332.3 963,332.8 962,332.8 962,331.3 961,331.3 961,333.0 960,333.0 960,332.6 959,332.6 959,333.0 958,333.0 958,331.5 957,331.5 957,332.4 956,332.4 956,332.4 955,332.4 955,327.3 954,327.3 954,327.6 953,327.6 953,327.4 952,327.4 952,327.2 951,327.2 951,326.8 950,326.8 950,327.2 949,327.2 949,326.7 948,326.7 948,326.8 947,326.8 947,326.9 946,326.9 946,326.8 945,326.8 945,327.4 944,327.4 944,327.8 943,327.8 943,327.6 942,327.6 942,327.6 941,327.6 941,328.2 940,328.2 940,327.3 939,327.3 939,327.3 938,327.3 938,327.3 937,327.3 937,328.3 936,328.3 936,327.5 935,327.5 935,327.1 934,327.1 934,327.9 933,327.9 933,327.6 932,327.6 932,326.9 931,326.9 931,327.3 930,327.3 930,326.3 929,326.3 929,325.2 928,325.2 928,325.2 927,325.2 927,325.2 926,325.2 926,325.2 925,325.2 925,325.3 924,325.3 924,325.3 923,325.3 923,325.4 922,325.4 922,325.5 921,325.5 921,326.0 920,326.0 920,326.3 919,326.3 919,326.5 918,326.5 918,326.6 917,326.6 917,326.4 916,326.4 916,327.3 915,327.3 915,327.6 914,327.6 914,327.8 913,327.8 913,328.0 912,328.0 912,328.7 911,328.7 911,330.2 910,330.2 910,329.1 909,329.1 909,330.7 908,330.7 908,329.4 907,329.4 907,329.9 906,329.9 906,329.6 905,329.6 905,329.9 904,329.9 904,329.5 903,329.5 903,329.6 902,329.6 902,329.9 901,329.9 901,331.6 900,331.6 900,333.1 899,333.1 899,333.5 898,333.5 898,331.0 897,331.0 897,331.7 896,331.7 896,330.5 895,330.5 895,329.7 894,329.7 894,329.3 893,329.3 893,328.7 892,328.7 892,328.6 891,328.6 891,329.7 890,329.7 890,331.0 889,331.0 889,329.7 888,329.7 888,330.5 887,330.5 887,331.3 886,331.3 886,330.4 885,330.4 885,331.0 884,331.0 884,331.3 883,331.3 883,331.4 882,331.4 882,331.2 881,331.2 881,330.9 880,330.9 880,330.1 879,330.1 879,329.9 878,329.9 878,329.4 877,329.4 877,329.2 876,329.2 876,330.3 875,330.3 875,329.3 874,329.3 874,329.7 873,329.7 873,329.4 872,329.4 872,328.4 871,328.4 871,328.0 870,328.0 870,329.2 869,329.2 869,328.1 868,328.1 868,328.0 867,328.0 867,327.8 866,327.8 866,327.4 865,327.4 865,327.1 864,327.1 864,326.9 863,326.9 863,326.8 862,326.8 862,327.0 861,327.0 861,326.5 860,326.5 860,326.7 859,326.7 859,327.0 858,327.0 858,326.9 857,326.9 857,326.8 856,326.8 856,326.1 855,326.1 855,326.6 854,326.6 854,325.8 853,325.8 853,326.1 852,326.1 852,326.2 851,326.2 851,326.0 850,326.0 850,325.9 849,325.9 849,325.7 848,325.7 848,325.5 847,325.5 847,325.7 846,325.7 846,325.7 845,325.7 845,325.5 844,325.5 844,325.2 843,325.2 843,325.4 842,325.4 842,326.7 841,326.7 841,327.8 840,327.8 840,327.3 839,327.3 839,327.3 838,327.3 838,327.9 837,327.9 837,327.5 836,327.5 836,327.2 835,327.2 835,327.1 834,327.1 834,326.2 833,326.2 833,325.2 832,325.2 832,326.7 831,326.7 831,327.5 830,327.5 830,325.9 829,325.9 829,325.5 828,325.5 828,326.0 827,326.0 827,326.7 826,326.7 826,329.7 825,329.7 825,331.6 824,331.6 824,333.3 823,333.3 823,333.2 822,333.2 822,334.8 821,334.8 821,334.9 820,334.9 820,333.6 819,333.6 819,334.8 818,334.8 818,332.1 817,332.1 817,334.7 816,334.7 816,333.5 815,333.5 815,332.0 814,332.0 814,332.3 813,332.3 813,333.0 812,333.0 812,334.0 811,334.0 811,333.1 810,333.1 810,333.5 809,333.5 809,333.4 808,333.4 808,331.3 807,331.3 807,328.9 806,328.9 806,326.2 805,326.2 805,326.3 804,326.3 804,325.7 803,325.7 803,325.2 802,325.2 802,325.2 801,325.2 801,325.2 800,325.2 800,325.2 799,325.2 799,325.2 798,325.2 798,325.2 797,325.2 797,325.2 796,325.2 796,325.2 795,325.2 795,325.4 794,325.4 794,325.8 793,325.8 793,325.8 792,325.8 792,326.1 791,326.1 791,326.9 790,326.9 790,328.1 789,328.1 789,329.8 788,329.8 788,329.9 787,329.9 787,328.6 786,328.6 786,328.4 785,328.4 785,327.2 784,327.2 784,326.9 783,326.9 783,326.5 782,326.5 782,326.6 781,326.6 781,326.3 780,326.3 780,325.4 779,325.4 779,325.2 778,325.2 778,325.2 777,325.2 777,325.2 776,325.2 776,325.2 775,325.2 775,325.4 774,325.4 774,325.8 773,325.8 773,326.4 772,326.4 772,326.2 771,326.2 771,325.6 770,325.6 770,325.6 769,325.6 769,325.7 768,325.7 768,325.6 767,325.6 767,326.1 766,326.1 766,328.1 765,328.1 765,331.0 764,331.0 764,333.5 763,333.5 763,334.7 762,334.7 762,332.9 761,332.9 761,332.2 760,332.2 760,333.3 759,333.3 759,333.9 758,333.9 758,332.3 757,332.3 757,333.6 756,333.6 756,332.4 755,332.4 755,333.9 754,333.9 754,332.5 753,332.5 753,332.3 752,332.3 752,331.7 751,331.7 751,331.9 750,331.9 750,328.2 749,328.2 749,327.0 748,327.0 748,327.1 747,327.1 747,326.5 746,326.5 746,326.3 745,326.3 745,326.2 744,326.2 744,325.9 743,325.9 743,325.9 742,325.9 742,325.9 741,325.9 741,325.7 740,325.7 740,325.7 739,325.7 739,325.3 738,325.3 738,325.4 737,325.4 737,325.4 736,325.4 736,325.5 735,325.5 735,325.9 734,325.9 734,326.1 733,326.1 733,326.5 732,326.5 732,327.1 731,327.1 731,327.2 730,327.2 730,327.6 729,327.6 729,327.3 728,327.3 728,327.3 727,327.3 727,327.3 726,327.3 726,326.6 725,326.6 725,326.7 724,326.7 724,326.4 723,326.4 723,326.4 722,326.4 722,326.0 721,326.0 721,325.6 720,325.6 720,325.6 719,325.6 719,325.6 718,325.6 718,325.2 717,325.2 717,325.2 716,325.2 716,325.2 715,325.2 715,325.2 714,325.2 714,325.2 713,325.2 713,325.3 712,325.3 712,325.7 711,325.7 711,325.6 710,325.6 710,325.6 709,325.6 709,327.2 708,327.2 708,328.2 707,328.2 707,330.7 706,330.7 706,331.3 705,331.3 705,332.7 704,332.7 704,333.8 703,333.8 703,333.6 702,333.6 702,331.7 701,331.7 701,331.2 700,331.2 700,329.0 699,329.0 699,328.2 698,328.2 698,328.5 697,328.5 697,328.2 696,328.2 696,327.9 695,327.9 695,327.9 694,327.9 694,327.9 693,327.9 693,327.4 692,327.4 692,327.7 691,327.7 691,327.3 690,327.3 690,327.3 689,327.3 689,326.9 688,326.9 688,327.1 687,327.1 687,327.0 686,327.0 686,326.4 685,326.4 685,327.2 684,327.2 684,326.7 683,326.7 683,326.8 682,326.8 682,326.6 681,326.6 681,326.7 680,326.7 680,326.3 679,326.3 679,326.6 678,326.6 678,326.1 677,326.1 677,326.7 676,326.7 676,327.0 675,327.0 675,327.7 674,327.7 674,327.7 673,327.7 673,326.8 672,326.8 672,326.7 671,326.7 671,326.7 670,326.7 670,326.5 669,326.5 669,326.2 668,326.2 668,325.7 667,325.7 667,325.3 666,325.3 666,325.2 665,325.2 665,325.2 664,325.2 664,325.2 663,325.2 663,325.3 662,325.3 662,325.2 661,325.2 661,325.5 660,325.5 660,325.5 659,325.5 659,326.1 658,326.1 658,325.8 657,325.8 657,327.0 656,327.0 656,330.9 655,330.9 655,331.6 654,331.6 654,333.1 653,333.1 653,331.2 652,331.2 652,332.1 651,332.1 651,333.3 650,333.3 650,332.9 649,332.9 649,333.3 648,333.3 648,332.0 647,332.0 647,329.5 646,329.5 646,329.3 645,329.3 645,329.0 644,329.0 644,328.6 643,328.6 643,328.1 642,328.1 642,327.9 641,327.9 641,328.1 640,328.1 640,327.8 639,327.8 639,328.2 638,328.2 638,327.8 637,327.8 637,327.7 636,327.7 636,327.3 635,327.3 635,327.8 634,327.8 634,327.1 633,327.1 633,326.7 632,326.7 632,326.8 631,326.8 631,327.4 630,327.4 630,326.9 629,326.9 629,326.5 628,326.5 628,327.1 627,327.1 627,326.4 626,326.4 626,326.4 625,326.4 625,327.0 624,327.0 624,326.2 623,326.2 623,327.0 622,327.0 622,327.2 621,327.2 621,327.0 620,327.0 620,327.6 619,327.6 619,327.3 618,327.3 618,327.3 617,327.3 617,326.6 616,326.6 616,327.0 615,327.0 615,326.2 614,326.2 614,325.9 613,325.9 613,325.3 612,325.3 612,325.9 611,325.9 611,326.7 610,326.7 610,327.4 609,327.4 609,327.2 608,327.2 608,327.1 607,327.1 607,327.0 606,327.0 606,325.9 605,325.9 605,325.2 604,325.2 604,325.2 603,325.2 603,325.2 602,325.2 602,325.2 601,325.2 601,325.2 600,325.2 600,325.2 599,325.2 599,325.2 598,325.2 598,325.2 597,325.2 597,325.2 596,325.2 596,325.2 595,325.2 595,325.2 594,325.2 594,325.5 593,325.5 593,327.9 592,327.9 592,329.4 591,329.4 591,330.1 590,330.1 590,330.9 589,330.9 589,332.1 588,332.1 588,333.3 587,333.3 587,330.8 586,330.8 586,331.8 585,331.8 585,331.9 584,331.9 584,331.9 583,331.9 583,331.8 582,331.8 582,332.8 581,332.8 581,331.0 580,331.0 580,332.4 579,332.4 579,332.7 578,332.7 578,330.7 577,330.7 577,330.4 576,330.4 576,332.2 575,332.2 575,332.3 574,332.3 574,331.0 573,331.0 573,329.8 572,329.8 572,330.2 571,330.2 571,330.6 570,330.6 570,330.7 569,330.7 569,330.2 568,330.2 568,329.6 567,329.6 567,330.9 566,330.9 566,330.5 565,330.5 565,330.1 564,330.1 564,331.7 563,331.7 563,331.4 562,331.4 562,332.6 561,332.6 561,332.4 560,332.4 560,331.7 559,331.7 559,329.3 558,329.3 558,329.5 557,329.5 557,330.5 556,330.5 556,330.3 555,330.3 555,331.4 554,331.4 554,331.5 553,331.5 553,330.5 552,330.5 552,330.4 551,330.4 551,329.9 550,329.9 550,329.8 549,329.8 549,328.9 548,328.9 548,328.9 547,328.9 547,328.8 546,328.8 546,328.8 545,328.8 545,328.3 544,328.3 544,329.1 543,329.1 543,328.3 542,328.3 542,328.3 541,328.3 541,328.7 540,328.7 540,327.5 539,327.5 539,328.0 538,328.0 538,327.8 537,327.8 537,327.2 536,327.2 536,327.3 535,327.3 535,326.6 534,326.6 534,326.6 533,326.6 533,326.8 532,326.8 532,326.5 531,326.5 531,326.7 530,326.7 530,326.1 529,326.1 529,326.2 528,326.2 528,326.1 527,326.1 527,325.5 526,325.5 526,325.8 525,325.8 525,325.5 524,325.5 524,325.5 523,325.5 523,325.3 522,325.3 522,325.5 521,325.5 521,325.7 520,325.7 520,326.1 519,326.1 519,326.2 518,326.2 518,326.0 517,326.0 517,325.6 516,325.6 516,325.3 515,325.3 515,325.2 514,325.2 514,325.6 513,325.6 513,325.7 512,325.7 512,326.1 511,326.1 511,325.5 510,325.5 510,325.5 509,325.5 509,325.6 508,325.6 508,328.5 507,328.5 507,330.2 506,330.2 506,330.5 505,330.5 505,330.7 504,330.7 504,330.1 503,330.1 503,331.2 502,331.2 502,330.7 501,330.7 501,331.2 500,331.2 500,330.4 499,330.4 499,329.8 498,329.8 498,329.4 497,329.4 497,329.6 496,329.6 496,329.4 495,329.4 495,329.1 494,329.1 494,329.7 493,329.7 493,329.4 492,329.4 492,329.5 491,329.5 491,329.6 490,329.6 490,329.8 489,329.8 489,329.1 488,329.1 488,330.1 487,330.1 487,329.1 486,329.1 486,328.0 485,328.0 485,327.8 484,327.8 484,327.0 483,327.0 483,326.5 482,326.5 482,325.8 481,325.8 481,325.7 480,325.7 480,325.5 479,325.5 479,325.6 478,325.6 478,325.5 477,325.5 477,325.5 476,325.5 476,326.1 475,326.1 475,326.5 474,326.5 474,326.3 473,326.3 473,326.8 472,326.8 472,328.1 471,328.1 471,327.9 470,327.9 470,328.6 469,328.6 469,328.3 468,328.3 468,327.7 467,327.7 467,328.1 466,328.1 466,327.8 465,327.8 465,326.6 464,326.6 464,326.9 463,326.9 463,327.8 462,327.8 462,328.3 461,328.3 461,328.0 460,328.0 460,327.4 459,327.4 459,327.5 458,327.5 458,326.3 457,326.3 457,326.5 456,326.5 456,326.3 455,326.3 455,326.0 454,326.0 454,325.8 453,325.8 453,325.9 452,325.9 452,326.0 451,326.0 451,325.6 450,325.6 450,325.5 449,325.5 449,325.6 448,325.6 448,325.7 447,325.7 447,325.5 446,325.5 446,325.6 445,325.6 445,325.4 444,325.4 444,325.2 443,325.2 443,325.2 442,325.2 442,325.2 441,325.2 441,325.2 440,325.2 440,325.2 439,325.2 439,325.2 438,325.2 438,325.2 437,325.2 437,325.2 436,325.2 436,325.4 435,325.4 435,326.2 434,326.2 434,326.7 433,326.7 433,328.6 432,328.6 432,328.8 431,328.8 431,329.3 430,329.3 430,330.3 429,330.3 429,330.6 428,330.6 428,331.2 427,331.2 427,332.5 426,332.5 426,330.5 425,330.5 425,331.4 424,331.4 424,332.1 423,332.1 423,332.3 422,332.3 422,330.1 421,330.1 421,331.1 420,331.1 420,330.3 419,330.3 419,330.3 418,330.3 418,331.6 417,331.6 417,331.2 416,331.2 416,332.1 415,332.1 415,331.2 414,331.2 414,329.6 413,329.6 413,330.1 412,330.1 412,330.3 411,330.3 411,328.8 410,328.8 410,329.1 409,329.1 409,328.4 408,328.4 408,327.9 407,327.9 407,328.7 406,328.7 406,328.9 405,328.9 405,330.3 404,330.3 404,329.7 403,329.7 403,332.2 402,332.2 402,332.1 401,332.1 401,331.9 400,331.9 400,329.6 399,329.6 399,328.8 398,328.8 398,329.1 397,329.1 397,330.0 396,330.0 396,330.2 395,330.2 395,329.4 394,329.4 394,329.5 393,329.5 393,331.1 392,331.1 392,330.1 391,330.1 391,329.3 390,329.3 390,329.6 389,329.6 389,330.1 388,330.1 388,328.8 387,328.8 387,328.1 386,328.1 386,328.2 385,328.2 385,328.5 384,328.5 384,328.5 383,328.5 383,327.1 382,327.1 382,327.4 381,327.4 381,327.1 380,327.1 380,327.1 379,327.1 379,326.4 378,326.4 378,326.7 377,326.7 377,326.0 376,326.0 376,326.2 375,326.2 375,326.3 374,326.3 374,326.1 373,326.1 373,325.8 372,325.8 372,325.8 371,325.8 371,325.9 370,325.9 370,326.1 369,326.1 369,325.7 368,325.7 368,325.6 367,325.6 367,325.5 366,325.5 366,325.5 365,325.5 365,325.7 364,325.7 364,325.6 363,325.6 363,325.7 362,325.7 362,325.6 361,325.6 361,325.6 360,325.6 360,325.7 359,325.7 359,325.7 358,325.7 358,326.2 357,326.2 357,325.4 356,325.4 356,325.4 355,325.4 355,325.2 354,325.2 354,325.6 353,325.6 353,326.1 352,326.1 352,326.3 351,326.3 351,325.8 350,325.8 350,325.3 349,325.3 349,325.7 348,325.7 348,328.4 347,328.4 347,331.4 346,331.4 346,331.7 345,331.7 345,330.1 344,330.1 344,332.4 343,332.4 343,331.9 342,331.9 342,331.9 341,331.9 341,332.5 340,332.5 340,331.0 339,331.0 339,331.4 338,331.4 338,331.0 337,331.0 337,330.7 336,330.7 336,331.5 335,331.5 335,330.1 334,330.1 334,330.5 333,330.5 333,331.1 332,331.1 332,330.9 331,330.9 331,330.4 330,330.4 330,331.4 329,331.4 329,330.9 328,330.9 328,330.8 327,330.8 327,330.1 326,330.1 326,329.1 325,329.1 325,327.7 324,327.7 324,326.4 323,326.4 323,326.0 322,326.0 322,325.5 321,325.5 321,325.8 320,325.8 320,325.5 319,325.5 319,325.4 318,325.4 318,325.8 317,325.8 317,325.6 316,325.6 316,325.8 315,325.8 315,326.3 314,326.3 314,326.5 313,326.5 313,326.6 312,326.6 312,327.1 311,327.1 311,327.6 310,327.6 310,329.3 309,329.3 309,329.3 308,329.3 308,328.7 307,328.7 307,328.2 306,328.2 306,327.2 305,327.2 305,327.2 304,327.2 304,327.7 303,327.7 303,327.7 302,327.7 302,328.4 301,328.4 301,328.9 300,328.9 300,328.2 299,328.2 299,327.6 298,327.6 298,327.1 297,327.1 297,326.3 296,326.3 296,326.1 295,326.1 295,326.0 294,326.0 294,326.1 293,326.1 293,325.7 292,325.7 292,325.9 291,325.9 291,325.5 290,325.5 290,325.6 289,325.6 289,325.4 288,325.4 288,325.4 287,325.4 287,325.3 286,325.3" fill="#6d72e0"/><polygon points="286,459.1 287,459.1 287,458.6 288,458.6 288,459.8 289,459.8 289,458.5 290,458.5 290,458.1 291,458.1 291,457.6 292,457.6 292,456.9 293,456.9 293,456.9 294,456.9 294,456.5 295,456.5 295,456.0 296,456.0 296,455.8 297,455.8 297,453.4 298,453.4 298,452.7 299,452.7 299,446.4 300,446.4 300,448.2 301,448.2 301,447.9 302,447.9 302,448.0 303,448.0 303,450.9 304,450.9 304,452.5 305,452.5 305,452.4 306,452.4 306,450.1 307,450.1 307,446.8 308,446.8 308,447.5 309,447.5 309,445.5 310,445.5 310,450.8 311,450.8 311,450.3 312,450.3 312,454.3 313,454.3 313,455.1 314,455.1 314,455.9 315,455.9 315,457.4 316,457.4 316,459.6 317,459.6 317,457.8 318,457.8 318,458.1 319,458.1 319,457.9 320,457.9 320,457.5 321,457.5 321,457.2 322,457.2 322,457.4 323,457.4 323,454.7 324,454.7 324,450.8 325,450.8 325,447.0 326,447.0 326,443.4 327,443.4 327,445.1 328,445.1 328,439.7 329,439.7 329,440.0 330,440.0 330,438.9 331,438.9 331,441.4 332,441.4 332,443.0 333,443.0 333,442.7 334,442.7 334,436.0 335,436.0 335,443.6 336,443.6 336,443.1 337,443.1 337,433.1 338,433.1 338,438.1 339,438.1 339,440.0 340,440.0 340,436.9 341,436.9 341,438.3 342,438.3 342,436.2 343,436.2 343,439.1 344,439.1 344,437.4 345,437.4 345,442.1 346,442.1 346,442.9 347,442.9 347,447.7 348,447.7 348,458.2 349,458.2 349,457.3 350,457.3 350,459.3 351,459.3 351,456.4 352,456.4 352,455.1 353,455.1 353,457.3 354,457.3 354,459.9 355,459.9 355,458.8 356,458.8 356,457.9 357,457.9 357,456.7 358,456.7 358,456.7 359,456.7 359,456.9 360,456.9 360,457.5 361,457.5 361,459.8 362,459.8 362,458.6 363,458.6 363,458.0 364,458.0 364,458.2 365,458.2 365,457.9 366,457.9 366,457.5 367,457.5 367,457.8 368,457.8 368,457.6 369,457.6 369,457.8 370,457.8 370,456.7 371,456.7 371,456.8 372,456.8 372,456.3 373,456.3 373,455.2 374,455.2 374,456.6 375,456.6 375,457.1 376,457.1 376,456.7 377,456.7 377,455.4 378,455.4 378,454.2 379,454.2 379,454.2 380,454.2 380,452.1 381,452.1 381,452.4 382,452.4 382,452.0 383,452.0 383,450.7 384,450.7 384,448.5 385,448.5 385,448.4 386,448.4 386,448.3 387,448.3 387,445.9 388,445.9 388,444.2 389,444.2 389,443.3 390,443.3 390,444.2 391,444.2 391,442.9 392,442.9 392,440.7 393,440.7 393,439.3 394,439.3 394,442.4 395,442.4 395,443.8 396,443.8 396,446.5 397,446.5 397,448.6 398,448.6 398,443.9 399,443.9 399,441.2 400,441.2 400,439.7 401,439.7 401,445.0 402,445.0 402,439.7 403,439.7 403,440.7 404,440.7 404,444.0 405,444.0 405,447.4 406,447.4 406,448.1 407,448.1 407,448.0 408,448.0 408,442.8 409,442.8 409,451.4 410,451.4 410,446.4 411,446.4 411,443.3 412,443.3 412,444.3 413,444.3 413,442.5 414,442.5 414,439.0 415,439.0 415,436.5 416,436.5 416,441.8 417,441.8 417,433.4 418,433.4 418,442.6 419,442.6 419,442.5 420,442.5 420,438.7 421,438.7 421,439.6 422,439.6 422,436.0 423,436.0 423,438.8 424,438.8 424,435.9 425,435.9 425,435.9 426,435.9 426,437.0 427,437.0 427,440.2 428,440.2 428,433.0 429,433.0 429,440.3 430,440.3 430,443.8 431,443.8 431,446.2 432,446.2 432,448.5 433,448.5 433,452.0 434,452.0 434,455.3 435,455.3 435,458.5 436,458.5 436,460.4 437,460.4 437,460.4 438,460.4 438,460.6 439,460.6 439,460.7 440,460.7 440,460.5 441,460.5 441,460.4 442,460.4 442,460.1 443,460.1 443,459.0 444,459.0 444,458.5 445,458.5 445,457.8 446,457.8 446,458.3 447,458.3 447,458.4 448,458.4 448,457.7 449,457.7 449,457.4 450,457.4 450,458.1 451,458.1 451,457.4 452,457.4 452,456.7 453,456.7 453,457.2 454,457.2 454,454.7 455,454.7 455,455.9 456,455.9 456,456.0 457,456.0 457,455.2 458,455.2 458,454.0 459,454.0 459,451.2 460,451.2 460,448.7 461,448.7 461,448.3 462,448.3 462,454.2 463,454.2 463,451.9 464,451.9 464,454.4 465,454.4 465,453.4 466,453.4 466,450.2 467,450.2 467,451.3 468,451.3 468,444.5 469,444.5 469,447.8 470,447.8 470,448.8 471,448.8 471,451.3 472,451.3 472,451.8 473,451.8 473,453.5 474,453.5 474,455.7 475,455.7 475,457.2 476,457.2 476,458.4 477,458.4 477,458.6 478,458.6 478,458.8 479,458.8 479,456.9 480,456.9 480,457.1 481,457.1 481,456.4 482,456.4 482,457.5 483,457.5 483,453.9 484,453.9 484,451.0 485,451.0 485,449.2 486,449.2 486,446.5 487,446.5 487,444.0 488,444.0 488,443.4 489,443.4 489,444.8 490,444.8 490,441.5 491,441.5 491,443.2 492,443.2 492,443.1 493,443.1 493,445.5 494,445.5 494,444.0 495,444.0 495,442.0 496,442.0 496,442.0 497,442.0 497,445.7 498,445.7 498,436.8 499,436.8 499,441.4 500,441.4 500,441.4 501,441.4 501,440.7 502,440.7 502,441.7 503,441.7 503,442.3 504,442.3 504,439.1 505,439.1 505,442.8 506,442.8 506,442.3 507,442.3 507,446.4 508,446.4 508,458.3 509,458.3 509,458.0 510,458.0 510,457.6 511,457.6 511,457.2 512,457.2 512,457.7 513,457.7 513,458.2 514,458.2 514,459.6 515,459.6 515,459.3 516,459.3 516,457.2 517,457.2 517,456.7 518,456.7 518,456.7 519,456.7 519,457.8 520,457.8 520,456.7 521,456.7 521,459.0 522,459.0 522,459.0 523,459.0 523,458.9 524,458.9 524,457.1 525,457.1 525,458.3 526,458.3 526,458.2 527,458.2 527,457.8 528,457.8 528,454.8 529,454.8 529,456.6 530,456.6 530,456.3 531,456.3 531,455.3 532,455.3 532,454.5 533,454.5 533,451.1 534,451.1 534,452.2 535,452.2 535,451.6 536,451.6 536,452.7 537,452.7 537,451.4 538,451.4 538,449.6 539,449.6 539,446.5 540,446.5 540,449.8 541,449.8 541,450.1 542,450.1 542,446.8 543,446.8 543,446.2 544,446.2 544,442.6 545,442.6 545,448.3 546,448.3 546,444.9 547,444.9 547,446.4 548,446.4 548,442.8 549,442.8 549,445.8 550,445.8 550,440.4 551,440.4 551,440.9 552,440.9 552,440.3 553,440.3 553,440.8 554,440.8 554,441.1 555,441.1 555,444.0 556,444.0 556,442.3 557,442.3 557,445.2 558,445.2 558,443.1 559,443.1 559,441.9 560,441.9 560,440.5 561,440.5 561,435.8 562,435.8 562,438.5 563,438.5 563,433.0 564,433.0 564,442.2 565,442.2 565,444.1 566,444.1 566,443.6 567,443.6 567,442.1 568,442.1 568,443.1 569,443.1 569,441.0 570,441.0 570,441.7 571,441.7 571,440.9 572,440.9 572,434.0 573,434.0 573,438.5 574,438.5 574,440.9 575,440.9 575,438.2 576,438.2 576,436.6 577,436.6 577,435.7 578,435.7 578,445.8 579,445.8 579,430.3 580,430.3 580,434.3 581,434.3 581,437.8 582,437.8 582,439.4 583,439.4 583,429.6 584,429.6 584,437.5 585,437.5 585,437.3 586,437.3 586,435.1 587,435.1 587,438.8 588,438.8 588,439.0 589,439.0 589,441.4 590,441.4 590,444.6 591,444.6 591,446.0 592,446.0 592,451.1 593,451.1 593,458.5 594,458.5 594,460.0 595,460.0 595,460.5 596,460.5 596,460.5 597,460.5 597,459.8 598,459.8 598,460.4 599,460.4 599,461.4 600,461.4 600,460.5 601,460.5 601,460.6 602,460.6 602,460.5 603,460.5 603,460.4 604,460.4 604,460.0 605,460.0 605,457.0 606,457.0 606,452.2 607,452.2 607,449.9 608,449.9 608,450.9 609,450.9 609,451.4 610,451.4 610,454.3 611,454.3 611,457.5 612,457.5 612,458.2 613,458.2 613,456.6 614,456.6 614,455.8 615,455.8 615,455.1 616,455.1 616,452.4 617,452.4 617,453.3 618,453.3 618,453.2 619,453.2 619,452.3 620,452.3 620,452.0 621,452.0 621,453.0 622,453.0 622,451.9 623,451.9 623,454.8 624,454.8 624,454.6 625,454.6 625,455.4 626,455.4 626,455.2 627,455.2 627,453.4 628,453.4 628,453.3 629,453.3 629,455.0 630,455.0 630,453.3 631,453.3 631,456.2 632,456.2 632,453.0 633,453.0 633,452.5 634,452.5 634,451.9 635,451.9 635,450.0 636,450.0 636,451.5 637,451.5 637,450.5 638,450.5 638,450.0 639,450.0 639,447.7 640,447.7 640,448.9 641,448.9 641,448.6 642,448.6 642,443.1 643,443.1 643,445.9 644,445.9 644,447.1 645,447.1 645,444.1 646,444.1 646,438.9 647,438.9 647,436.7 648,436.7 648,437.1 649,437.1 649,424.8 650,424.8 650,433.3 651,433.3 651,433.4 652,433.4 652,428.8 653,428.8 653,436.7 654,436.7 654,445.8 655,445.8 655,444.3 656,444.3 656,455.0 657,455.0 657,457.0 658,457.0 658,457.2 659,457.2 659,458.4 660,458.4 660,457.4 661,457.4 661,458.9 662,458.9 662,460.6 663,460.6 663,459.7 664,459.7 664,459.9 665,459.9 665,460.2 666,460.2 666,457.8 667,457.8 667,457.7 668,457.7 668,456.9 669,456.9 669,455.6 670,455.6 670,454.4 671,454.4 671,454.0 672,454.0 672,449.7 673,449.7 673,452.2 674,452.2 674,449.3 675,449.3 675,453.9 676,453.9 676,452.4 677,452.4 677,453.7 678,453.7 678,455.3 679,455.3 679,453.1 680,453.1 680,454.5 681,454.5 681,452.5 682,452.5 682,457.2 683,457.2 683,453.4 684,453.4 684,456.9 685,456.9 685,454.9 686,454.9 686,453.4 687,453.4 687,452.4 688,452.4 688,453.4 689,453.4 689,451.9 690,451.9 690,450.3 691,450.3 691,450.5 692,450.5 692,451.1 693,451.1 693,448.8 694,448.8 694,448.8 695,448.8 695,448.4 696,448.4 696,446.9 697,446.9 697,448.9 698,448.9 698,446.3 699,446.3 699,446.3 700,446.3 700,440.4 701,440.4 701,438.9 702,438.9 702,436.1 703,436.1 703,437.2 704,437.2 704,433.5 705,433.5 705,438.6 706,438.6 706,444.2 707,444.2 707,448.5 708,448.5 708,454.7 709,454.7 709,459.3 710,459.3 710,457.6 711,457.6 711,458.4 712,458.4 712,458.9 713,458.9 713,459.5 714,459.5 714,459.9 715,459.9 715,459.9 716,459.9 716,459.2 717,459.2 717,458.7 718,458.7 718,458.5 719,458.5 719,459.7 720,459.7 720,458.4 721,458.4 721,457.0 722,457.0 722,455.8 723,455.8 723,455.6 724,455.6 724,454.4 725,454.4 725,456.6 726,456.6 726,452.0 727,452.0 727,451.7 728,451.7 728,451.5 729,451.5 729,450.9 730,450.9 730,452.7 731,452.7 731,456.9 732,456.9 732,455.5 733,455.5 733,455.7 734,455.7 734,457.2 735,457.2 735,457.4 736,457.4 736,459.1 737,459.1 737,458.9 738,458.9 738,458.7 739,458.7 739,456.9 740,456.9 740,458.2 741,458.2 741,455.8 742,455.8 742,457.2 743,457.2 743,456.9 744,456.9 744,456.3 745,456.3 745,454.0 746,454.0 746,456.0 747,456.0 747,455.0 748,455.0 748,449.9 749,449.9 749,449.0 750,449.0 750,441.1 751,441.1 751,435.4 752,435.4 752,431.5 753,431.5 753,429.9 754,429.9 754,431.7 755,431.7 755,430.6 756,430.6 756,424.0 757,424.0 757,432.4 758,432.4 758,433.5 759,433.5 759,436.3 760,436.3 760,434.7 761,434.7 761,429.1 762,429.1 762,432.0 763,432.0 763,432.5 764,432.5 764,438.3 765,438.3 765,448.1 766,448.1 766,457.6 767,457.6 767,457.7 768,457.7 768,457.8 769,457.8 769,459.5 770,459.5 770,456.8 771,456.8 771,456.0 772,456.0 772,456.8 773,456.8 773,456.4 774,456.4 774,458.9 775,458.9 775,460.1 776,460.1 776,460.6 777,460.6 777,460.6 778,460.6 778,460.1 779,460.1 779,457.1 780,457.1 780,455.8 781,455.8 781,458.0 782,458.0 782,454.2 783,454.2 783,454.4 784,454.4 784,452.1 785,452.1 785,449.9 786,449.9 786,447.6 787,447.6 787,441.4 788,441.4 788,450.9 789,450.9 789,448.5 790,448.5 790,456.4 791,456.4 791,456.5 792,456.5 792,456.1 793,456.1 793,457.3 794,457.3 794,459.0 795,459.0 795,459.7 796,459.7 796,460.0 797,460.0 797,459.9 798,459.9 798,460.3 799,460.3 799,460.2 800,460.2 800,460.3 801,460.3 801,460.3 802,460.3 802,459.9 803,459.9 803,458.5 804,458.5 804,457.4 805,457.4 805,455.2 806,455.2 806,449.3 807,449.3 807,441.6 808,441.6 808,436.9 809,436.9 809,434.1 810,434.1 810,435.1 811,435.1 811,430.7 812,430.7 812,436.8 813,436.8 813,434.1 814,434.1 814,442.5 815,442.5 815,428.7 816,428.7 816,429.2 817,429.2 817,434.6 818,434.6 818,428.6 819,428.6 819,431.4 820,431.4 820,426.8 821,426.8 821,427.7 822,427.7 822,428.9 823,428.9 823,434.9 824,434.9 824,425.3 825,425.3 825,442.7 826,442.7 826,455.7 827,455.7 827,457.7 828,457.7 828,458.7 829,458.7 829,457.5 830,457.5 830,452.5 831,452.5 831,456.2 832,456.2 832,459.1 833,459.1 833,455.9 834,455.9 834,452.3 835,452.3 835,448.9 836,448.9 836,452.4 837,452.4 837,451.2 838,451.2 838,450.5 839,450.5 839,452.1 840,452.1 840,450.2 841,450.2 841,454.3 842,454.3 842,458.0 843,458.0 843,459.3 844,459.3 844,459.0 845,459.0 845,457.8 846,457.8 846,458.3 847,458.3 847,458.0 848,458.0 848,455.7 849,455.7 849,457.5 850,457.5 850,457.1 851,457.1 851,454.9 852,454.9 852,455.9 853,455.9 853,455.4 854,455.4 854,456.6 855,456.6 855,455.2 856,455.2 856,453.1 857,453.1 857,452.7 858,452.7 858,454.9 859,454.9 859,454.2 860,454.2 860,451.4 861,451.4 861,454.3 862,454.3 862,450.5 863,450.5 863,449.8 864,449.8 864,453.0 865,453.0 865,452.5 866,452.5 866,451.4 867,451.4 867,450.1 868,450.1 868,449.0 869,449.0 869,450.0 870,450.0 870,446.0 871,446.0 871,442.6 872,442.6 872,445.4 873,445.4 873,446.3 874,446.3 874,444.2 875,444.2 875,442.9 876,442.9 876,450.0 877,450.0 877,437.1 878,437.1 878,442.5 879,442.5 879,437.8 880,437.8 880,437.6 881,437.6 881,443.2 882,443.2 882,440.6 883,440.6 883,441.1 884,441.1 884,443.6 885,443.6 885,444.2 886,444.2 886,443.1 887,443.1 887,439.7 888,439.7 888,443.2 889,443.2 889,449.4 890,449.4 890,446.5 891,446.5 891,448.5 892,448.5 892,445.5 893,445.5 893,443.7 894,443.7 894,439.3 895,439.3 895,443.0 896,443.0 896,439.7 897,439.7 897,436.9 898,436.9 898,434.4 899,434.4 899,429.7 900,429.7 900,441.7 901,441.7 901,442.8 902,442.8 902,449.2 903,449.2 903,442.4 904,442.4 904,444.0 905,444.0 905,440.4 906,440.4 906,443.1 907,443.1 907,444.6 908,444.6 908,446.0 909,446.0 909,442.5 910,442.5 910,446.5 911,446.5 911,447.1 912,447.1 912,450.2 913,450.2 913,452.5 914,452.5 914,452.0 915,452.0 915,453.0 916,453.0 916,453.6 917,453.6 917,454.8 918,454.8 918,456.2 919,456.2 919,456.3 920,456.3 920,457.9 921,457.9 921,458.4 922,458.4 922,458.7 923,458.7 923,459.0 924,459.0 924,459.4 925,459.4 925,459.3 926,459.3 926,460.8 927,460.8 927,460.7 928,460.7 928,461.5 929,461.5 929,457.6 930,457.6 930,451.6 931,451.6 931,452.2 932,452.2 932,452.1 933,452.1 933,451.6 934,451.6 934,452.6 935,452.6 935,451.0 936,451.0 936,447.0 937,447.0 937,449.1 938,449.1 938,450.1 939,450.1 939,454.8 940,454.8 940,447.9 941,447.9 941,451.8 942,451.8 942,451.1 943,451.1 943,453.0 944,453.0 944,453.2 945,453.2 945,451.7 946,451.7 946,452.6 947,452.6 947,453.6 948,453.6 948,453.9 949,453.9 949,453.4 950,453.4 950,452.1 951,452.1 951,451.8 952,451.8 952,452.9 953,452.9 953,451.8 954,451.8 954,450.3 955,450.3 955,440.3 956,440.3 956,437.2 957,437.2 957,433.6 958,433.6 958,438.0 959,438.0 959,439.7 960,439.7 960,440.1 961,440.1 961,430.5 962,430.5 962,437.6 963,437.6 963,430.5 964,430.5 964,435.2 965,435.2 965,440.0 966,440.0 966,436.0 967,436.0 967,436.1 968,436.1 968,436.9 969,436.9 969,435.7 970,435.7 970,436.7 971,436.7 971,433.6 972,433.6 972,438.1 973,438.1 973,435.7 974,435.7 974,424.8 975,424.8 975,434.3 976,434.3 976,440.1 977,440.1 977,427.5 978,427.5 978,424.4 979,424.4 979,432.8 980,432.8 980,442.5 981,442.5 981,445.0 982,445.0 982,445.6 983,445.6 983,446.4 984,446.4 984,448.0 985,448.0 985,448.3 986,448.3 986,450.4 987,450.4 987,454.4 988,454.4 988,455.1 989,455.1 989,443.0 990,443.0 990,439.0 991,439.0 991,444.1 992,444.1 992,449.4 993,449.4 993,447.4 994,447.4 994,444.6 995,444.6 995,431.1 996,431.1 996,441.2 997,441.2 997,445.5 998,445.5 998,450.1 999,450.1 999,449.6 1000,449.6 1000,443.6 1001,443.6 1001,443.0 1002,443.0 1002,447.6 1003,447.6 1003,452.4 1004,452.4 1004,450.7 1005,450.7 1005,448.6 1006,448.6 1006,443.0 1007,443.0 1007,442.6 1008,442.6 1008,435.4 1009,435.4 1009,439.6 1010,439.6 1010,448.4 1011,448.4 1011,443.1 1012,443.1 1012,445.9 1013,445.9 1013,447.2 1014,447.2 1014,447.4 1015,447.4 1015,457.3 1016,457.3 1016,457.5 1017,457.5 1017,459.2 1018,459.2 1018,460.2 1019,460.2 1019,460.2 1020,460.2 1020,460.5 1021,460.5 1021,460.6 1022,460.6 1022,460.7 1023,460.7 1023,460.9 1024,460.9 1024,461.3 1025,461.3 1025,460.4 1026,460.4 1026,459.5 1027,459.5 1027,460.4 1028,460.4 1028,459.8 1029,459.8 1029,453.9 1030,453.9 1030,446.5 1031,446.5 1031,446.5 1032,446.5 1032,438.5 1033,438.5 1033,432.0 1034,432.0 1034,433.2 1035,433.2 1035,434.0 1036,434.0 1036,431.9 1037,431.9 1037,443.2 1038,443.2 1038,443.3 1039,443.3 1039,450.7 1040,450.7 1040,452.4 1041,452.4 1041,451.2 1042,451.2 1042,454.9 1043,454.9 1043,473.9 1042,473.9 1042,475.8 1041,475.8 1041,478.1 1040,478.1 1040,486.2 1039,486.2 1039,485.2 1038,485.2 1038,482.8 1037,482.8 1037,487.3 1036,487.3 1036,489.9 1035,489.9 1035,487.0 1034,487.0 1034,489.7 1033,489.7 1033,493.3 1032,493.3 1032,480.4 1031,480.4 1031,474.9 1030,474.9 1030,469.8 1029,469.8 1029,465.5 1028,465.5 1028,465.7 1027,465.7 1027,465.1 1026,465.1 1026,465.1 1025,465.1 1025,465.8 1024,465.8 1024,465.0 1023,465.0 1023,465.4 1022,465.4 1022,465.5 1021,465.5 1021,464.9 1020,464.9 1020,465.1 1019,465.1 1019,464.6 1018,464.6 1018,465.6 1017,465.6 1017,467.2 1016,467.2 1016,471.8 1015,471.8 1015,475.8 1014,475.8 1014,479.3 1013,479.3 1013,479.5 1012,479.5 1012,490.0 1011,490.0 1011,484.7 1010,484.7 1010,486.8 1009,486.8 1009,477.2 1008,477.2 1008,485.8 1007,485.8 1007,488.4 1006,488.4 1006,478.1 1005,478.1 1005,476.8 1004,476.8 1004,472.5 1003,472.5 1003,473.3 1002,473.3 1002,480.7 1001,480.7 1001,481.7 1000,481.7 1000,479.0 999,479.0 999,475.6 998,475.6 998,479.5 997,479.5 997,485.6 996,485.6 996,486.5 995,486.5 995,485.3 994,485.3 994,479.0 993,479.0 993,475.8 992,475.8 992,480.3 991,480.3 991,483.3 990,483.3 990,483.8 989,483.8 989,471.9 988,471.9 988,472.8 987,472.8 987,474.9 986,474.9 986,474.8 985,474.8 985,478.1 984,478.1 984,480.3 983,480.3 983,479.3 982,479.3 982,481.6 981,481.6 981,483.5 980,483.5 980,492.6 979,492.6 979,500.6 978,500.6 978,497.8 977,497.8 977,497.8 976,497.8 976,484.1 975,484.1 975,492.7 974,492.7 974,488.5 973,488.5 973,489.0 972,489.0 972,490.2 971,490.2 971,492.7 970,492.7 970,497.1 969,497.1 969,496.3 968,496.3 968,489.1 967,489.1 967,488.1 966,488.1 966,489.8 965,489.8 965,487.2 964,487.2 964,485.6 963,485.6 963,495.7 962,495.7 962,486.7 961,486.7 961,485.5 960,485.5 960,487.0 959,487.0 959,488.5 958,488.5 958,497.4 957,497.4 957,489.3 956,489.3 956,490.3 955,490.3 955,475.6 954,475.6 954,473.6 953,473.6 953,473.0 952,473.0 952,472.4 951,472.4 951,469.4 950,469.4 950,469.4 949,469.4 949,472.6 948,472.6 948,471.8 947,471.8 947,473.5 946,473.5 946,473.1 945,473.1 945,473.0 944,473.0 944,472.8 943,472.8 943,474.7 942,474.7 942,473.2 941,473.2 941,474.7 940,474.7 940,470.8 939,470.8 939,474.8 938,474.8 938,474.0 937,474.0 937,476.1 936,476.1 936,474.9 935,474.9 935,473.3 934,473.3 934,470.2 933,470.2 933,473.2 932,473.2 932,473.0 931,473.0 931,473.0 930,473.0 930,469.8 929,469.8 929,464.8 928,464.8 928,464.9 927,464.9 927,465.1 926,465.1 926,465.3 925,465.3 925,465.7 924,465.7 924,466.3 923,466.3 923,467.4 922,467.4 922,467.2 921,467.2 921,468.6 920,468.6 920,468.6 919,468.6 919,469.4 918,469.4 918,470.3 917,470.3 917,471.7 916,471.7 916,471.5 915,471.5 915,472.9 914,472.9 914,473.0 913,473.0 913,475.7 912,475.7 912,477.6 911,477.6 911,480.9 910,480.9 910,487.9 909,487.9 909,483.6 908,483.6 908,480.3 907,480.3 907,486.2 906,486.2 906,478.6 905,478.6 905,479.1 904,479.1 904,480.0 903,480.0 903,476.4 902,476.4 902,483.1 901,483.1 901,485.4 900,485.4 900,488.0 899,488.0 899,490.6 898,490.6 898,489.0 897,489.0 897,486.3 896,486.3 896,487.9 895,487.9 895,481.0 894,481.0 894,481.1 893,481.1 893,480.3 892,480.3 892,478.9 891,478.9 891,485.5 890,485.5 890,482.0 889,482.0 889,484.8 888,484.8 888,492.4 887,492.4 887,481.8 886,481.8 886,484.5 885,484.5 885,481.5 884,481.5 884,485.2 883,485.2 883,481.9 882,481.9 882,482.4 881,482.4 881,484.3 880,484.3 880,483.8 879,483.8 879,484.6 878,484.6 878,484.3 877,484.3 877,483.9 876,483.9 876,481.3 875,481.3 875,481.9 874,481.9 874,474.2 873,474.2 873,480.3 872,480.3 872,480.2 871,480.2 871,476.6 870,476.6 870,478.8 869,478.8 869,475.1 868,475.1 868,474.8 867,474.8 867,475.6 866,475.6 866,473.3 865,473.3 865,472.5 864,472.5 864,471.8 863,471.8 863,472.9 862,472.9 862,472.0 861,472.0 861,472.2 860,472.2 860,471.4 859,471.4 859,470.3 858,470.3 858,469.8 857,469.8 857,470.4 856,470.4 856,470.9 855,470.9 855,469.2 854,469.2 854,469.0 853,469.0 853,468.8 852,468.8 852,469.7 851,469.7 851,468.4 850,468.4 850,467.9 849,467.9 849,467.7 848,467.7 848,468.3 847,468.3 847,468.2 846,468.2 846,467.1 845,467.1 845,466.9 844,466.9 844,465.9 843,465.9 843,468.0 842,468.0 842,471.7 841,471.7 841,477.9 840,477.9 840,475.5 839,475.5 839,475.4 838,475.4 838,474.6 837,474.6 837,472.9 836,472.9 836,473.1 835,473.1 835,473.4 834,473.4 834,469.6 833,469.6 833,466.4 832,466.4 832,470.7 831,470.7 831,472.4 830,472.4 830,467.8 829,467.8 829,466.9 828,466.9 828,467.8 827,467.8 827,471.1 826,471.1 826,475.3 825,475.3 825,493.7 824,493.7 824,495.7 823,495.7 823,494.9 822,494.9 822,493.0 821,493.0 821,492.8 820,492.8 820,495.2 819,495.2 819,494.0 818,494.0 818,497.3 817,497.3 817,496.0 816,496.0 816,483.5 815,483.5 815,494.2 814,494.2 814,490.7 813,490.7 813,490.4 812,490.4 812,491.9 811,491.9 811,488.6 810,488.6 810,493.3 809,493.3 809,490.7 808,490.7 808,487.7 807,487.7 807,477.9 806,477.9 806,470.6 805,470.6 805,469.0 804,469.0 804,467.3 803,467.3 803,466.0 802,466.0 802,465.2 801,465.2 801,465.4 800,465.4 800,465.5 799,465.5 799,465.7 798,465.7 798,465.5 797,465.5 797,465.5 796,465.5 796,465.8 795,465.8 795,466.5 794,466.5 794,467.2 793,467.2 793,469.3 792,469.3 792,469.2 791,469.2 791,475.1 790,475.1 790,476.0 789,476.0 789,480.1 788,480.1 788,484.5 787,484.5 787,472.5 786,472.5 786,475.7 785,475.7 785,471.7 784,471.7 784,471.8 783,471.8 783,471.0 782,471.0 782,470.8 781,470.8 781,469.3 780,469.3 780,466.8 779,466.8 779,465.2 778,465.2 778,464.8 777,464.8 777,464.9 776,464.9 776,465.5 775,465.5 775,467.2 774,467.2 774,469.1 773,469.1 773,469.1 772,469.1 772,469.2 771,469.2 771,468.7 770,468.7 770,467.8 769,467.8 769,467.2 768,467.2 768,466.1 767,466.1 767,468.6 766,468.6 766,482.9 765,482.9 765,487.9 764,487.9 764,494.3 763,494.3 763,492.4 762,492.4 762,493.1 761,493.1 761,495.7 760,495.7 760,494.5 759,494.5 759,493.3 758,493.3 758,501.7 757,501.7 757,492.2 756,492.2 756,492.4 755,492.4 755,490.7 754,490.7 754,490.6 753,490.6 753,493.5 752,493.5 752,489.7 751,489.7 751,484.7 750,484.7 750,477.9 749,477.9 749,472.1 748,472.1 748,471.0 747,471.0 747,469.8 746,469.8 746,470.5 745,470.5 745,469.5 744,469.5 744,469.1 743,469.1 743,469.0 742,469.0 742,468.9 741,468.9 741,467.9 740,467.9 740,467.3 739,467.3 739,466.6 738,466.6 738,466.9 737,466.9 737,467.0 736,467.0 736,468.3 735,468.3 735,466.7 734,466.7 734,471.5 733,471.5 733,470.9 732,470.9 732,471.4 731,471.4 731,474.4 730,474.4 730,473.4 729,473.4 729,474.2 728,474.2 728,473.1 727,473.1 727,472.5 726,472.5 726,471.3 725,471.3 725,470.8 724,470.8 724,469.3 723,469.3 723,470.1 722,470.1 722,470.2 721,470.2 721,467.3 720,467.3 720,466.9 719,466.9 719,468.2 718,468.2 718,466.1 717,466.1 717,466.4 716,466.4 716,465.4 715,465.4 715,465.4 714,465.4 714,466.2 713,466.2 713,466.2 712,466.2 712,467.6 711,467.6 711,469.0 710,469.0 710,468.1 709,468.1 709,474.4 708,474.4 708,477.3 707,477.3 707,482.5 706,482.5 706,485.7 705,485.7 705,490.7 704,490.7 704,493.3 703,493.3 703,489.6 702,489.6 702,479.9 701,479.9 701,490.5 700,490.5 700,481.8 699,481.8 699,478.6 698,478.6 698,476.6 697,476.6 697,472.5 696,472.5 696,476.8 695,476.8 695,474.7 694,474.7 694,476.6 693,476.6 693,475.5 692,475.5 692,478.0 691,478.0 691,473.5 690,473.5 690,474.4 689,474.4 689,472.7 688,472.7 688,471.8 687,471.8 687,472.6 686,472.6 686,471.6 685,471.6 685,472.2 684,472.2 684,471.4 683,471.4 683,468.4 682,468.4 682,468.2 681,468.2 681,470.4 680,470.4 680,471.2 679,471.2 679,469.3 678,469.3 678,470.2 677,470.2 677,471.4 676,471.4 676,471.7 675,471.7 675,473.8 674,473.8 674,474.9 673,474.9 673,469.7 672,469.7 672,472.3 671,472.3 671,472.0 670,472.0 670,469.2 669,469.2 669,468.7 668,468.7 668,467.9 667,467.9 667,466.7 666,466.7 666,465.5 665,465.5 665,465.9 664,465.9 664,466.0 663,466.0 663,465.9 662,465.9 662,467.4 661,467.4 661,465.6 660,465.6 660,467.3 659,467.3 659,468.6 658,468.6 658,469.8 657,469.8 657,471.1 656,471.1 656,483.7 655,483.7 655,495.6 654,495.6 654,486.2 653,486.2 653,491.9 652,491.9 652,498.7 651,498.7 651,493.1 650,493.1 650,494.2 649,494.2 649,493.8 648,493.8 648,483.5 647,483.5 647,483.6 646,483.6 646,483.2 645,483.2 645,481.1 644,481.1 644,479.5 643,479.5 643,479.7 642,479.7 642,478.7 641,478.7 641,475.7 640,475.7 640,475.7 639,475.7 639,474.4 638,474.4 638,476.5 637,476.5 637,475.9 636,475.9 636,473.9 635,473.9 635,474.7 634,474.7 634,470.0 633,470.0 633,472.2 632,472.2 632,471.6 631,471.6 631,469.1 630,469.1 630,471.3 629,471.3 629,472.0 628,472.0 628,470.5 627,470.5 627,470.5 626,470.5 626,470.1 625,470.1 625,471.7 624,471.7 624,470.3 623,470.3 623,471.6 622,471.6 622,471.8 621,471.8 621,471.4 620,471.4 620,474.0 619,474.0 619,474.7 618,474.7 618,473.4 617,473.4 617,471.4 616,471.4 616,471.8 615,471.8 615,469.5 614,469.5 614,468.8 613,468.8 613,467.2 612,467.2 612,468.5 611,468.5 611,469.0 610,469.0 610,474.5 609,474.5 609,476.2 608,476.2 608,470.7 607,470.7 607,473.2 606,473.2 606,471.2 605,471.2 605,465.5 604,465.5 604,465.1 603,465.1 603,465.3 602,465.3 602,465.1 601,465.1 601,465.7 600,465.7 600,465.2 599,465.2 599,465.2 598,465.2 598,465.4 597,465.4 597,465.4 596,465.4 596,464.5 595,464.5 595,465.7 594,465.7 594,467.2 593,467.2 593,474.3 592,474.3 592,480.9 591,480.9 591,481.0 590,481.0 590,483.9 589,483.9 589,479.6 588,479.6 588,492.2 587,492.2 587,480.6 586,480.6 586,489.8 585,489.8 585,487.7 584,487.7 584,487.7 583,487.7 583,485.7 582,485.7 582,496.2 581,496.2 581,486.0 580,486.0 580,486.2 579,486.2 579,489.9 578,489.9 578,488.3 577,488.3 577,486.6 576,486.6 576,489.2 575,489.2 575,493.9 574,493.9 574,483.8 573,483.8 573,492.1 572,492.1 572,483.1 571,483.1 571,484.3 570,484.3 570,486.0 569,486.0 569,485.2 568,485.2 568,483.2 567,483.2 567,481.3 566,481.3 566,488.9 565,488.9 565,477.4 564,477.4 564,478.5 563,478.5 563,487.2 562,487.2 562,492.2 561,492.2 561,486.8 560,486.8 560,486.6 559,486.6 559,481.9 558,481.9 558,486.5 557,486.5 557,488.3 556,488.3 556,482.9 555,482.9 555,484.9 554,484.9 554,484.5 553,484.5 553,482.4 552,482.4 552,484.6 551,484.6 551,481.8 550,481.8 550,479.7 549,479.7 549,479.9 548,479.9 548,479.5 547,479.5 547,478.9 546,478.9 546,478.5 545,478.5 545,477.6 544,477.6 544,477.3 543,477.3 543,475.6 542,475.6 542,478.2 541,478.2 541,477.5 540,477.5 540,474.8 539,474.8 539,478.6 538,478.6 538,473.8 537,473.8 537,473.9 536,473.9 536,472.8 535,472.8 535,472.8 534,472.8 534,472.3 533,472.3 533,471.0 532,471.0 532,470.9 531,470.9 531,471.1 530,471.1 530,469.4 529,469.4 529,469.4 528,469.4 528,468.5 527,468.5 527,467.9 526,467.9 526,467.2 525,467.2 525,467.4 524,467.4 524,466.5 523,466.5 523,466.6 522,466.6 522,467.9 521,467.9 521,467.2 520,467.2 520,468.6 519,468.6 519,469.3 518,469.3 518,469.2 517,469.2 517,467.4 516,467.4 516,466.3 515,466.3 515,466.1 514,466.1 514,467.0 513,467.0 513,470.0 512,470.0 512,469.0 511,469.0 511,467.6 510,467.6 510,467.0 509,467.0 509,467.1 508,467.1 508,480.1 507,480.1 507,483.6 506,483.6 506,483.6 505,483.6 505,483.3 504,483.3 504,486.7 503,486.7 503,486.4 502,486.4 502,485.6 501,485.6 501,487.6 500,487.6 500,486.5 499,486.5 499,480.8 498,480.8 498,483.8 497,483.8 497,479.2 496,479.2 496,475.6 495,475.6 495,483.4 494,483.4 494,484.2 493,484.2 493,481.1 492,481.1 492,488.6 491,488.6 491,488.9 490,488.9 490,484.2 489,484.2 489,482.2 488,482.2 488,479.7 487,479.7 487,479.0 486,479.0 486,476.0 485,476.0 485,470.5 484,470.5 484,472.5 483,472.5 483,470.6 482,470.6 482,468.7 481,468.7 481,468.4 480,468.4 480,468.8 479,468.8 479,467.4 478,467.4 478,465.3 477,465.3 477,467.2 476,467.2 476,466.6 475,466.6 475,470.1 474,470.1 474,473.7 473,473.7 473,472.7 472,472.7 472,470.5 471,470.5 471,476.1 470,476.1 470,475.9 469,475.9 469,477.5 468,477.5 468,475.5 467,475.5 467,475.5 466,475.5 466,474.4 465,474.4 465,469.1 464,469.1 464,472.4 463,472.4 463,471.4 462,471.4 462,479.6 461,479.6 461,477.9 460,477.9 460,474.7 459,474.7 459,474.0 458,474.0 458,471.0 457,471.0 457,470.5 456,470.5 456,467.2 455,467.2 455,468.8 454,468.8 454,468.9 453,468.9 453,466.6 452,466.6 452,468.8 451,468.8 451,466.3 450,466.3 450,467.2 449,467.2 449,468.3 448,468.3 448,467.4 447,467.4 447,467.8 446,467.8 446,468.6 445,468.6 445,466.7 444,466.7 444,467.3 443,467.3 443,465.9 442,465.9 442,465.0 441,465.0 441,464.9 440,464.9 440,464.9 439,464.9 439,465.2 438,465.2 438,465.1 437,465.1 437,465.4 436,465.4 436,467.8 435,467.8 435,470.6 434,470.6 434,473.7 433,473.7 433,475.5 432,475.5 432,478.7 431,478.7 431,483.0 430,483.0 430,484.7 429,484.7 429,488.3 428,488.3 428,495.8 427,495.8 427,488.7 426,488.7 426,495.8 425,495.8 425,488.1 424,488.1 424,487.0 423,487.0 423,489.4 422,489.4 422,488.1 421,488.1 421,486.1 420,486.1 420,484.3 419,484.3 419,484.2 418,484.2 418,487.3 417,487.3 417,483.8 416,483.8 416,478.9 415,478.9 415,488.5 414,488.5 414,484.2 413,484.2 413,481.6 412,481.6 412,481.0 411,481.0 411,481.9 410,481.9 410,480.3 409,480.3 409,483.2 408,483.2 408,478.0 407,478.0 407,477.2 406,477.2 406,477.7 405,477.7 405,480.6 404,480.6 404,483.8 403,483.8 403,479.6 402,479.6 402,489.8 401,489.8 401,488.3 400,488.3 400,482.1 399,482.1 399,478.6 398,478.6 398,477.5 397,477.5 397,485.3 396,485.3 396,480.7 395,480.7 395,480.5 394,480.5 394,482.2 393,482.2 393,481.2 392,481.2 392,484.9 391,484.9 391,480.0 390,480.0 390,486.8 389,486.8 389,485.9 388,485.9 388,479.6 387,479.6 387,480.1 386,480.1 386,475.6 385,475.6 385,480.3 384,480.3 384,476.4 383,476.4 383,475.5 382,475.5 382,473.7 381,473.7 381,473.2 380,473.2 380,471.0 379,471.0 379,471.7 378,471.7 378,470.3 377,470.3 377,470.4 376,470.4 376,469.5 375,469.5 375,466.9 374,466.9 374,466.8 373,466.8 373,468.1 372,468.1 372,467.9 371,467.9 371,466.6 370,466.6 370,468.0 369,468.0 369,468.8 368,468.8 368,468.4 367,468.4 367,468.0 366,468.0 366,467.8 365,467.8 365,467.3 364,467.3 364,466.0 363,466.0 363,467.1 362,467.1 362,467.8 361,467.8 361,468.2 360,468.2 360,466.4 359,466.4 359,468.0 358,468.0 358,468.7 357,468.7 357,469.1 356,469.1 356,466.9 355,466.9 355,465.7 354,465.7 354,468.2 353,468.2 353,469.0 352,469.0 352,469.4 351,469.4 351,466.3 350,466.3 350,467.4 349,467.4 349,467.9 348,467.9 348,476.3 347,476.3 347,486.4 346,486.4 346,486.3 345,486.3 345,487.7 344,487.7 344,487.5 343,487.5 343,484.5 342,484.5 342,487.9 341,487.9 341,485.5 340,485.5 340,494.9 339,494.9 339,487.6 338,487.6 338,483.9 337,483.9 337,492.0 336,492.0 336,485.6 335,485.6 335,490.1 334,490.1 334,483.9 333,483.9 333,482.0 332,482.0 332,486.0 331,486.0 331,484.0 330,484.0 330,483.1 329,483.1 329,484.6 328,484.6 328,481.9 327,481.9 327,481.3 326,481.3 326,476.0 325,476.0 325,474.4 324,474.4 324,471.5 323,471.5 323,467.9 322,467.9 322,467.8 321,467.8 321,468.3 320,468.3 320,467.9 319,467.9 319,467.7 318,467.7 318,468.7 317,468.7 317,469.1 316,469.1 316,468.5 315,468.5 315,469.1 314,469.1 314,473.4 313,473.4 313,471.7 312,471.7 312,474.6 311,474.6 311,477.9 310,477.9 310,479.8 309,479.8 309,477.8 308,477.8 308,476.4 307,476.4 307,475.8 306,475.8 306,473.2 305,473.2 305,473.2 304,473.2 304,471.0 303,471.0 303,477.1 302,477.1 302,475.8 301,475.8 301,477.0 300,477.0 300,474.3 299,474.3 299,473.5 298,473.5 298,471.4 297,471.4 297,470.2 296,470.2 296,470.3 295,470.3 295,471.4 294,471.4 294,469.8 293,469.8 293,468.9 292,468.9 292,467.7 291,467.7 291,469.5 290,469.5 290,468.2 289,468.2 289,467.0 288,467.0 288,466.6 287,466.6 287,466.6 286,466.6" fill="#3b41cf"/><polygon points="286,461.8 287,461.8 287,461.6 288,461.6 288,461.5 289,461.5 289,461.5 290,461.5 290,461.6 291,461.6 291,461.1 292,461.1 292,461.2 293,461.2 293,461.0 294,461.0 294,460.9 295,460.9 295,460.7 296,460.7 296,460.3 297,460.3 297,460.4 298,460.4 298,460.2 299,460.2 299,459.7 300,459.7 300,459.4 301,459.4 301,459.2 302,459.2 302,459.6 303,459.6 303,459.0 304,459.0 304,460.0 305,460.0 305,459.6 306,459.6 306,459.2 307,459.2 307,458.4 308,458.4 308,458.9 309,458.9 309,459.2 310,459.2 310,459.4 311,459.4 311,459.5 312,459.5 312,460.1 313,460.1 313,460.8 314,460.8 314,460.9 315,460.9 315,461.1 316,461.1 316,461.7 317,461.7 317,461.5 318,461.5 318,461.7 319,461.7 319,461.4 320,461.4 320,461.3 321,461.3 321,461.4 322,461.4 322,461.6 323,461.6 323,460.8 324,460.8 324,460.2 325,460.2 325,459.1 326,459.1 326,458.2 327,458.2 327,458.0 328,458.0 328,457.5 329,457.5 329,456.1 330,456.1 330,457.6 331,457.6 331,456.2 332,456.2 332,457.7 333,457.7 333,456.7 334,456.7 334,456.5 335,456.5 335,456.4 336,456.4 336,456.1 337,456.1 337,456.7 338,456.7 338,456.0 339,456.0 339,456.2 340,456.2 340,455.7 341,455.7 341,455.6 342,455.6 342,457.1 343,457.1 343,456.2 344,456.2 344,456.2 345,456.2 345,456.3 346,456.3 346,456.9 347,456.9 347,459.2 348,459.2 348,461.4 349,461.4 349,461.8 350,461.8 350,461.4 351,461.4 351,461.2 352,461.2 352,461.1 353,461.1 353,461.4 354,461.4 354,461.8 355,461.8 355,461.8 356,461.8 356,461.3 357,461.3 357,461.2 358,461.2 358,461.0 359,461.0 359,461.4 360,461.4 360,461.6 361,461.6 361,461.8 362,461.8 362,461.6 363,461.6 363,461.5 364,461.5 364,461.5 365,461.5 365,461.4 366,461.4 366,461.2 367,461.2 367,461.5 368,461.5 368,461.2 369,461.2 369,461.5 370,461.5 370,461.3 371,461.3 371,461.0 372,461.0 372,461.2 373,461.2 373,461.4 374,461.4 374,461.3 375,461.3 375,461.4 376,461.4 376,461.1 377,461.1 377,461.1 378,461.1 378,460.4 379,460.4 379,460.8 380,460.8 380,460.1 381,460.1 381,459.7 382,459.7 382,459.4 383,459.4 383,459.2 384,459.2 384,459.4 385,459.4 385,458.7 386,458.7 386,458.4 387,458.4 387,458.1 388,458.1 388,457.8 389,457.8 389,458.3 390,458.3 390,457.6 391,457.6 391,457.2 392,457.2 392,458.1 393,458.1 393,457.1 394,457.1 394,457.4 395,457.4 395,457.7 396,457.7 396,458.5 397,458.5 397,457.9 398,457.9 398,458.7 399,458.7 399,458.0 400,458.0 400,455.6 401,455.6 401,455.8 402,455.8 402,456.2 403,456.2 403,457.2 404,457.2 404,457.7 405,457.7 405,458.2 406,458.2 406,458.6 407,458.6 407,458.3 408,458.3 408,458.9 409,458.9 409,458.9 410,458.9 410,458.1 411,458.1 411,456.9 412,456.9 412,456.7 413,456.7 413,457.2 414,457.2 414,456.1 415,456.1 415,455.6 416,455.6 416,456.1 417,456.1 417,456.3 418,456.3 418,457.2 419,457.2 419,457.6 420,457.6 420,455.8 421,455.8 421,456.7 422,456.7 422,456.6 423,456.6 423,456.0 424,456.0 424,456.8 425,456.8 425,455.9 426,455.9 426,455.2 427,455.2 427,456.9 428,456.9 428,457.3 429,457.3 429,456.6 430,456.6 430,456.9 431,456.9 431,458.2 432,458.2 432,458.9 433,458.9 433,460.0 434,460.0 434,460.9 435,460.9 435,461.7 436,461.7 436,461.8 437,461.8 437,461.8 438,461.8 438,461.8 439,461.8 439,461.8 440,461.8 440,461.8 441,461.8 441,461.8 442,461.8 442,461.8 443,461.8 443,461.7 444,461.7 444,461.8 445,461.8 445,461.6 446,461.6 446,461.7 447,461.7 447,461.5 448,461.5 448,461.6 449,461.6 449,461.3 450,461.3 450,461.4 451,461.4 451,461.4 452,461.4 452,461.1 453,461.1 453,461.0 454,461.0 454,461.1 455,461.1 455,461.1 456,461.1 456,461.2 457,461.2 457,460.7 458,460.7 458,460.0 459,460.0 459,459.7 460,459.7 460,458.6 461,458.6 461,458.9 462,458.9 462,459.1 463,459.1 463,459.9 464,459.9 464,460.4 465,460.4 465,459.8 466,459.8 466,459.7 467,459.7 467,458.9 468,458.9 468,459.2 469,459.2 469,458.5 470,458.5 470,458.8 471,458.8 471,459.5 472,459.5 472,460.4 473,460.4 473,460.7 474,460.7 474,461.0 475,461.0 475,461.1 476,461.1 476,461.5 477,461.5 477,461.7 478,461.7 478,461.6 479,461.6 479,461.7 480,461.7 480,461.4 481,461.4 481,461.4 482,461.4 482,460.6 483,460.6 483,460.3 484,460.3 484,459.3 485,459.3 485,459.0 486,459.0 486,458.2 487,458.2 487,457.5 488,457.5 488,457.9 489,457.9 489,457.2 490,457.2 490,458.1 491,458.1 491,457.1 492,457.1 492,458.0 493,458.0 493,456.9 494,456.9 494,457.5 495,457.5 495,457.6 496,457.6 496,458.0 497,458.0 497,457.9 498,457.9 498,457.7 499,457.7 499,457.6 500,457.6 500,456.1 501,456.1 501,455.6 502,455.6 502,457.6 503,457.6 503,455.9 504,455.9 504,456.8 505,456.8 505,457.4 506,457.4 506,457.1 507,457.1 507,458.8 508,458.8 508,461.8 509,461.8 509,461.8 510,461.8 510,461.6 511,461.6 511,461.2 512,461.2 512,461.3 513,461.3 513,461.8 514,461.8 514,461.8 515,461.8 515,461.8 516,461.8 516,461.4 517,461.4 517,460.9 518,460.9 518,461.0 519,461.0 519,461.1 520,461.1 520,461.5 521,461.5 521,461.6 522,461.6 522,461.8 523,461.8 523,461.7 524,461.7 524,461.7 525,461.7 525,461.4 526,461.4 526,461.2 527,461.2 527,461.5 528,461.5 528,460.9 529,460.9 529,461.2 530,461.2 530,461.0 531,461.0 531,460.3 532,460.3 532,460.8 533,460.8 533,460.2 534,460.2 534,460.3 535,460.3 535,460.2 536,460.2 536,460.1 537,460.1 537,459.5 538,459.5 538,459.3 539,459.3 539,459.6 540,459.6 540,459.4 541,459.4 541,458.8 542,458.8 542,459.4 543,459.4 543,459.3 544,459.3 544,458.4 545,458.4 545,458.9 546,458.9 546,458.7 547,458.7 547,458.2 548,458.2 548,458.3 549,458.3 549,457.1 550,457.1 550,457.9 551,457.9 551,457.7 552,457.7 552,457.8 553,457.8 553,457.4 554,457.4 554,457.3 555,457.3 555,457.0 556,457.0 556,457.7 557,457.7 557,457.9 558,457.9 558,458.4 559,458.4 559,456.6 560,456.6 560,456.6 561,456.6 561,455.4 562,455.4 562,455.2 563,455.2 563,456.5 564,456.5 564,457.6 565,457.6 565,457.3 566,457.3 566,457.4 567,457.4 567,457.7 568,457.7 568,456.9 569,456.9 569,457.0 570,457.0 570,456.6 571,456.6 571,457.6 572,457.6 572,457.5 573,457.5 573,456.6 574,456.6 574,456.9 575,456.9 575,456.7 576,456.7 576,455.3 577,455.3 577,455.8 578,455.8 578,455.6 579,455.6 579,455.0 580,455.0 580,455.6 581,455.6 581,455.4 582,455.4 582,454.7 583,454.7 583,455.8 584,455.8 584,456.3 585,456.3 585,456.0 586,456.0 586,456.5 587,456.5 587,456.5 588,456.5 588,455.8 589,455.8 589,457.2 590,457.2 590,458.1 591,458.1 591,457.3 592,457.3 592,460.1 593,460.1 593,461.5 594,461.5 594,461.8 595,461.8 595,461.8 596,461.8 596,461.8 597,461.8 597,461.8 598,461.8 598,461.8 599,461.8 599,461.8 600,461.8 600,461.8 601,461.8 601,461.8 602,461.8 602,461.8 603,461.8 603,461.8 604,461.8 604,461.8 605,461.8 605,461.1 606,461.1 606,460.2 607,460.2 607,459.1 608,459.1 608,459.3 609,459.3 609,459.7 610,459.7 610,460.2 611,460.2 611,461.1 612,461.1 612,461.8 613,461.8 613,461.3 614,461.3 614,460.8 615,460.8 615,460.4 616,460.4 616,460.1 617,460.1 617,459.8 618,459.8 618,459.6 619,459.6 619,460.1 620,460.1 620,460.4 621,460.4 621,460.6 622,460.6 622,460.3 623,460.3 623,460.4 624,460.4 624,460.7 625,460.7 625,460.3 626,460.3 626,460.4 627,460.4 627,460.4 628,460.4 628,460.5 629,460.5 629,460.6 630,460.6 630,460.1 631,460.1 631,460.1 632,460.1 632,459.8 633,459.8 633,459.8 634,459.8 634,459.8 635,459.8 635,459.6 636,459.6 636,459.4 637,459.4 637,459.3 638,459.3 638,459.4 639,459.4 639,459.4 640,459.4 640,459.1 641,459.1 641,458.8 642,458.8 642,458.8 643,458.8 643,457.8 644,457.8 644,458.1 645,458.1 645,456.7 646,456.7 646,456.7 647,456.7 647,456.2 648,456.2 648,456.2 649,456.2 649,454.4 650,454.4 650,454.5 651,454.5 651,454.5 652,454.5 652,455.6 653,455.6 653,455.8 654,455.8 654,456.0 655,456.0 655,458.3 656,458.3 656,460.3 657,460.3 657,461.1 658,461.1 658,461.3 659,461.3 659,461.4 660,461.4 660,461.7 661,461.7 661,461.8 662,461.8 662,461.8 663,461.8 663,461.8 664,461.8 664,461.8 665,461.8 665,461.8 666,461.8 666,461.8 667,461.8 667,461.6 668,461.6 668,461.0 669,461.0 669,461.2 670,461.2 670,460.7 671,460.7 671,460.3 672,460.3 672,460.3 673,460.3 673,459.9 674,459.9 674,459.6 675,459.6 675,460.2 676,460.2 676,460.6 677,460.6 677,460.7 678,460.7 678,460.7 679,460.7 679,460.8 680,460.8 680,461.0 681,461.0 681,460.4 682,460.4 682,460.7 683,460.7 683,460.6 684,460.6 684,460.5 685,460.5 685,460.0 686,460.0 686,460.6 687,460.6 687,460.3 688,460.3 688,460.1 689,460.1 689,459.9 690,459.9 690,460.0 691,460.0 691,459.3 692,459.3 692,459.5 693,459.5 693,459.7 694,459.7 694,459.8 695,459.8 695,459.5 696,459.5 696,458.6 697,458.6 697,459.3 698,459.3 698,458.4 699,458.4 699,457.6 700,457.6 700,457.0 701,457.0 701,456.0 702,456.0 702,454.2 703,454.2 703,455.1 704,455.1 704,454.7 705,454.7 705,455.2 706,455.2 706,456.6 707,456.6 707,458.4 708,458.4 708,460.1 709,460.1 709,461.5 710,461.5 710,461.7 711,461.7 711,461.5 712,461.5 712,461.8 713,461.8 713,461.8 714,461.8 714,461.8 715,461.8 715,461.8 716,461.8 716,461.8 717,461.8 717,461.7 718,461.7 718,461.7 719,461.7 719,461.4 720,461.4 720,461.4 721,461.4 721,461.5 722,461.5 722,461.1 723,461.1 723,460.7 724,460.7 724,460.8 725,460.8 725,460.3 726,460.3 726,460.3 727,460.3 727,460.1 728,460.1 728,459.3 729,459.3 729,459.9 730,459.9 730,459.6 731,459.6 731,460.2 732,460.2 732,460.7 733,460.7 733,461.0 734,461.0 734,461.4 735,461.4 735,461.3 736,461.3 736,461.8 737,461.8 737,461.8 738,461.8 738,461.8 739,461.8 739,461.7 740,461.7 740,461.3 741,461.3 741,461.5 742,461.5 742,461.4 743,461.4 743,460.9 744,460.9 744,461.2 745,461.2 745,461.0 746,461.0 746,460.9 747,460.9 747,460.3 748,460.3 748,460.5 749,460.5 749,458.7 750,458.7 750,456.8 751,456.8 751,456.1 752,456.1 752,455.2 753,455.2 753,455.6 754,455.6 754,455.7 755,455.7 755,453.3 756,453.3 756,455.3 757,455.3 757,454.7 758,454.7 758,455.0 759,455.0 759,454.1 760,454.1 760,454.6 761,454.6 761,453.7 762,453.7 762,453.6 763,453.6 763,454.4 764,454.4 764,455.9 765,455.9 765,458.6 766,458.6 766,461.1 767,461.1 767,461.3 768,461.3 768,461.5 769,461.5 769,461.7 770,461.7 770,461.3 771,461.3 771,461.2 772,461.2 772,460.9 773,460.9 773,461.3 774,461.3 774,461.7 775,461.7 775,461.8 776,461.8 776,461.8 777,461.8 777,461.8 778,461.8 778,461.8 779,461.8 779,461.6 780,461.6 780,461.3 781,461.3 781,460.7 782,460.7 782,460.3 783,460.3 783,460.6 784,460.6 784,460.3 785,460.3 785,459.3 786,459.3 786,458.9 787,458.9 787,458.6 788,458.6 788,457.9 789,457.9 789,459.0 790,459.0 790,460.3 791,460.3 791,461.1 792,461.1 792,461.3 793,461.3 793,461.3 794,461.3 794,461.8 795,461.8 795,461.8 796,461.8 796,461.8 797,461.8 797,461.8 798,461.8 798,461.8 799,461.8 799,461.8 800,461.8 800,461.8 801,461.8 801,461.8 802,461.8 802,461.8 803,461.8 803,461.4 804,461.4 804,461.2 805,461.2 805,460.7 806,460.7 806,458.3 807,458.3 807,455.6 808,455.6 808,456.2 809,456.2 809,454.5 810,454.5 810,455.1 811,455.1 811,454.4 812,454.4 812,454.1 813,454.1 813,456.1 814,456.1 814,453.7 815,453.7 815,455.6 816,455.6 816,453.8 817,453.8 817,453.6 818,453.6 818,454.1 819,454.1 819,453.6 820,453.6 820,455.1 821,455.1 821,453.4 822,453.4 822,453.9 823,453.9 823,455.1 824,455.1 824,456.0 825,456.0 825,458.6 826,458.6 826,461.1 827,461.1 827,461.4 828,461.4 828,461.8 829,461.8 829,461.5 830,461.5 830,460.1 831,460.1 831,461.0 832,461.0 832,461.8 833,461.8 833,461.0 834,461.0 834,460.2 835,460.2 835,459.8 836,459.8 836,459.7 837,459.7 837,459.7 838,459.7 838,460.2 839,460.2 839,459.9 840,459.9 840,459.2 841,459.2 841,460.5 842,460.5 842,461.5 843,461.5 843,461.8 844,461.8 844,461.7 845,461.7 845,461.6 846,461.6 846,461.4 847,461.4 847,461.3 848,461.3 848,461.5 849,461.5 849,461.0 850,461.0 850,461.1 851,461.1 851,461.2 852,461.2 852,461.1 853,461.1 853,460.9 854,460.9 854,460.7 855,460.7 855,460.9 856,460.9 856,460.8 857,460.8 857,460.8 858,460.8 858,460.8 859,460.8 859,460.7 860,460.7 860,460.8 861,460.8 861,460.1 862,460.1 862,460.5 863,460.5 863,460.2 864,460.2 864,459.5 865,459.5 865,460.1 866,460.1 866,459.4 867,459.4 867,459.4 868,459.4 868,459.3 869,459.3 869,458.8 870,458.8 870,458.9 871,458.9 871,458.8 872,458.8 872,458.9 873,458.9 873,457.5 874,457.5 874,457.3 875,457.3 875,457.4 876,457.4 876,457.6 877,457.6 877,457.8 878,457.8 878,456.4 879,456.4 879,457.4 880,457.4 880,457.6 881,457.6 881,455.8 882,455.8 882,457.1 883,457.1 883,457.6 884,457.6 884,457.2 885,457.2 885,457.1 886,457.1 886,456.6 887,456.6 887,457.5 888,457.5 888,456.7 889,456.7 889,458.3 890,458.3 890,458.0 891,458.0 891,459.1 892,459.1 892,458.2 893,458.2 893,457.7 894,457.7 894,458.2 895,458.2 895,458.2 896,458.2 896,457.2 897,457.2 897,454.7 898,454.7 898,453.8 899,453.8 899,456.6 900,456.6 900,456.7 901,456.7 901,458.1 902,458.1 902,456.7 903,456.7 903,457.7 904,457.7 904,458.4 905,458.4 905,458.1 906,458.1 906,457.8 907,457.8 907,457.6 908,457.6 908,458.0 909,458.0 909,457.6 910,457.6 910,458.4 911,458.4 911,458.3 912,458.3 912,459.3 913,459.3 913,459.7 914,459.7 914,459.5 915,459.5 915,460.1 916,460.1 916,460.5 917,460.5 917,460.6 918,460.6 918,460.8 919,460.8 919,461.3 920,461.3 920,461.4 921,461.4 921,461.7 922,461.7 922,461.7 923,461.7 923,461.8 924,461.8 924,461.8 925,461.8 925,461.8 926,461.8 926,461.8 927,461.8 927,461.8 928,461.8 928,461.8 929,461.8 929,460.9 930,460.9 930,459.9 931,459.9 931,460.3 932,460.3 932,459.8 933,459.8 933,460.2 934,460.2 934,459.8 935,459.8 935,459.8 936,459.8 936,459.9 937,459.9 937,459.3 938,459.3 938,459.5 939,459.5 939,459.9 940,459.9 940,459.3 941,459.3 941,460.1 942,460.1 942,460.2 943,460.2 943,459.9 944,459.9 944,459.7 945,459.7 945,460.1 946,460.1 946,460.0 947,460.0 947,460.5 948,460.5 948,460.5 949,460.5 949,460.1 950,460.1 950,460.6 951,460.6 951,460.4 952,460.4 952,460.1 953,460.1 953,460.0 954,460.0 954,459.2 955,459.2 955,457.0 956,457.0 956,456.3 957,456.3 957,456.2 958,456.2 958,455.0 959,455.0 959,456.5 960,456.5 960,456.2 961,456.2 961,456.4 962,456.4 962,456.5 963,456.5 963,457.1 964,457.1 964,457.1 965,457.1 965,456.3 966,456.3 966,455.1 967,455.1 967,455.8 968,455.8 968,455.3 969,455.3 969,455.8 970,455.8 970,456.4 971,456.4 971,454.4 972,454.4 972,454.5 973,454.5 973,456.2 974,456.2 974,455.2 975,455.2 975,454.4 976,454.4 976,454.0 977,454.0 977,451.8 978,451.8 978,453.5 979,453.5 979,455.5 980,455.5 980,455.9 981,455.9 981,456.7 982,456.7 982,457.5 983,457.5 983,458.7 984,458.7 984,459.3 985,459.3 985,458.8 986,458.8 986,459.7 987,459.7 987,460.6 988,460.6 988,460.1 989,460.1 989,457.6 990,457.6 990,456.0 991,456.0 991,457.6 992,457.6 992,459.2 993,459.2 993,458.1 994,458.1 994,457.0 995,457.0 995,457.1 996,457.1 996,456.6 997,456.6 997,459.3 998,459.3 998,459.6 999,459.6 999,458.6 1000,458.6 1000,457.4 1001,457.4 1001,456.4 1002,456.4 1002,458.9 1003,458.9 1003,459.6 1004,459.6 1004,459.7 1005,459.7 1005,458.5 1006,458.5 1006,457.8 1007,457.8 1007,456.9 1008,456.9 1008,456.6 1009,456.6 1009,456.9 1010,456.9 1010,457.0 1011,457.0 1011,456.8 1012,456.8 1012,458.3 1013,458.3 1013,458.2 1014,458.2 1014,460.0 1015,460.0 1015,460.6 1016,460.6 1016,461.6 1017,461.6 1017,461.8 1018,461.8 1018,461.8 1019,461.8 1019,461.8 1020,461.8 1020,461.8 1021,461.8 1021,461.8 1022,461.8 1022,461.8 1023,461.8 1023,461.8 1024,461.8 1024,461.8 1025,461.8 1025,461.8 1026,461.8 1026,461.8 1027,461.8 1027,461.8 1028,461.8 1028,461.8 1029,461.8 1029,460.7 1030,460.7 1030,459.5 1031,459.5 1031,457.7 1032,457.7 1032,456.6 1033,456.6 1033,455.4 1034,455.4 1034,454.8 1035,454.8 1035,455.9 1036,455.9 1036,456.5 1037,456.5 1037,456.1 1038,456.1 1038,456.6 1039,456.6 1039,457.5 1040,457.5 1040,459.2 1041,459.2 1041,459.0 1042,459.0 1042,460.2 1043,460.2 1043,465.4 1042,465.4 1042,466.6 1041,466.6 1041,466.4 1040,466.4 1040,468.1 1039,468.1 1039,469.0 1038,469.0 1038,469.5 1037,469.5 1037,469.1 1036,469.1 1036,469.7 1035,469.7 1035,470.8 1034,470.8 1034,470.2 1033,470.2 1033,469.0 1032,469.0 1032,467.9 1031,467.9 1031,466.1 1030,466.1 1030,464.9 1029,464.9 1029,463.8 1028,463.8 1028,463.8 1027,463.8 1027,463.8 1026,463.8 1026,463.8 1025,463.8 1025,463.8 1024,463.8 1024,463.8 1023,463.8 1023,463.8 1022,463.8 1022,463.8 1021,463.8 1021,463.8 1020,463.8 1020,463.8 1019,463.8 1019,463.8 1018,463.8 1018,463.8 1017,463.8 1017,464.0 1016,464.0 1016,465.0 1015,465.0 1015,465.6 1014,465.6 1014,467.4 1013,467.4 1013,467.3 1012,467.3 1012,468.8 1011,468.8 1011,468.6 1010,468.6 1010,468.7 1009,468.7 1009,469.0 1008,469.0 1008,468.7 1007,468.7 1007,467.8 1006,467.8 1006,467.1 1005,467.1 1005,465.9 1004,465.9 1004,466.0 1003,466.0 1003,466.7 1002,466.7 1002,469.2 1001,469.2 1001,468.2 1000,468.2 1000,467.0 999,467.0 999,466.0 998,466.0 998,466.3 997,466.3 997,469.0 996,469.0 996,468.5 995,468.5 995,468.6 994,468.6 994,467.5 993,467.5 993,466.4 992,466.4 992,468.0 991,468.0 991,469.6 990,469.6 990,468.0 989,468.0 989,465.5 988,465.5 988,465.0 987,465.0 987,465.9 986,465.9 986,466.8 985,466.8 985,466.3 984,466.3 984,466.9 983,466.9 983,468.1 982,468.1 982,468.9 981,468.9 981,469.7 980,469.7 980,470.1 979,470.1 979,472.1 978,472.1 978,473.8 977,473.8 977,471.6 976,471.6 976,471.2 975,471.2 975,470.4 974,470.4 974,469.4 973,469.4 973,471.1 972,471.1 972,471.2 971,471.2 971,469.2 970,469.2 970,469.8 969,469.8 969,470.3 968,470.3 968,469.8 967,469.8 967,470.5 966,470.5 966,469.3 965,469.3 965,468.5 964,468.5 964,468.5 963,468.5 963,469.1 962,469.1 962,469.2 961,469.2 961,469.4 960,469.4 960,469.1 959,469.1 959,470.6 958,470.6 958,469.4 957,469.4 957,469.3 956,469.3 956,468.6 955,468.6 955,466.4 954,466.4 954,465.6 953,465.6 953,465.5 952,465.5 952,465.2 951,465.2 951,465.0 950,465.0 950,465.5 949,465.5 949,465.1 948,465.1 948,465.1 947,465.1 947,465.6 946,465.6 946,465.5 945,465.5 945,465.9 944,465.9 944,465.7 943,465.7 943,465.4 942,465.4 942,465.5 941,465.5 941,466.3 940,466.3 940,465.7 939,465.7 939,466.1 938,466.1 938,466.3 937,466.3 937,465.7 936,465.7 936,465.8 935,465.8 935,465.8 934,465.8 934,465.4 933,465.4 933,465.8 932,465.8 932,465.3 931,465.3 931,465.7 930,465.7 930,464.7 929,464.7 929,463.8 928,463.8 928,463.8 927,463.8 927,463.8 926,463.8 926,463.8 925,463.8 925,463.8 924,463.8 924,463.8 923,463.8 923,463.9 922,463.9 922,463.9 921,463.9 921,464.2 920,464.2 920,464.3 919,464.3 919,464.8 918,464.8 918,465.0 917,465.0 917,465.1 916,465.1 916,465.5 915,465.5 915,466.1 914,466.1 914,465.9 913,465.9 913,466.3 912,466.3 912,467.3 911,467.3 911,467.2 910,467.2 910,468.0 909,468.0 909,467.6 908,467.6 908,468.0 907,468.0 907,467.8 906,467.8 906,467.5 905,467.5 905,467.2 904,467.2 904,467.9 903,467.9 903,468.9 902,468.9 902,467.5 901,467.5 901,468.9 900,468.9 900,469.0 899,469.0 899,471.8 898,471.8 898,470.9 897,470.9 897,468.4 896,468.4 896,467.4 895,467.4 895,467.4 894,467.4 894,467.9 893,467.9 893,467.4 892,467.4 892,466.5 891,466.5 891,467.6 890,467.6 890,467.3 889,467.3 889,468.9 888,468.9 888,468.1 887,468.1 887,469.0 886,469.0 886,468.5 885,468.5 885,468.4 884,468.4 884,468.0 883,468.0 883,468.5 882,468.5 882,469.8 881,469.8 881,468.0 880,468.0 880,468.2 879,468.2 879,469.2 878,469.2 878,467.8 877,467.8 877,468.0 876,468.0 876,468.2 875,468.2 875,468.3 874,468.3 874,468.1 873,468.1 873,466.7 872,466.7 872,466.8 871,466.8 871,466.7 870,466.7 870,466.8 869,466.8 869,466.3 868,466.3 868,466.2 867,466.2 867,466.2 866,466.2 866,465.5 865,465.5 865,466.1 864,466.1 864,465.4 863,465.4 863,465.1 862,465.1 862,465.5 861,465.5 861,464.8 860,464.8 860,464.9 859,464.9 859,464.8 858,464.8 858,464.8 857,464.8 857,464.8 856,464.8 856,464.7 855,464.7 855,464.9 854,464.9 854,464.7 853,464.7 853,464.5 852,464.5 852,464.4 851,464.4 851,464.5 850,464.5 850,464.6 849,464.6 849,464.1 848,464.1 848,464.3 847,464.3 847,464.2 846,464.2 846,464.0 845,464.0 845,463.9 844,463.9 844,463.8 843,463.8 843,464.1 842,464.1 842,465.1 841,465.1 841,466.4 840,466.4 840,465.7 839,465.7 839,465.4 838,465.4 838,465.9 837,465.9 837,465.9 836,465.9 836,465.8 835,465.8 835,465.4 834,465.4 834,464.6 833,464.6 833,463.8 832,463.8 832,464.6 831,464.6 831,465.5 830,465.5 830,464.1 829,464.1 829,463.8 828,463.8 828,464.2 827,464.2 827,464.5 826,464.5 826,467.0 825,467.0 825,469.6 824,469.6 824,470.5 823,470.5 823,471.7 822,471.7 822,472.2 821,472.2 821,470.5 820,470.5 820,472.0 819,472.0 819,471.5 818,471.5 818,472.0 817,472.0 817,471.8 816,471.8 816,470.0 815,470.0 815,471.9 814,471.9 814,469.5 813,469.5 813,471.5 812,471.5 812,471.2 811,471.2 811,470.5 810,470.5 810,471.1 809,471.1 809,469.4 808,469.4 808,470.0 807,470.0 807,467.3 806,467.3 806,464.9 805,464.9 805,464.4 804,464.4 804,464.2 803,464.2 803,463.8 802,463.8 802,463.8 801,463.8 801,463.8 800,463.8 800,463.8 799,463.8 799,463.8 798,463.8 798,463.8 797,463.8 797,463.8 796,463.8 796,463.8 795,463.8 795,463.8 794,463.8 794,464.3 793,464.3 793,464.3 792,464.3 792,464.5 791,464.5 791,465.3 790,465.3 790,466.6 789,466.6 789,467.7 788,467.7 788,467.0 787,467.0 787,466.7 786,466.7 786,466.3 785,466.3 785,465.3 784,465.3 784,465.0 783,465.0 783,465.3 782,465.3 782,464.9 781,464.9 781,464.3 780,464.3 780,464.0 779,464.0 779,463.8 778,463.8 778,463.8 777,463.8 777,463.8 776,463.8 776,463.8 775,463.8 775,463.9 774,463.9 774,464.3 773,464.3 773,464.7 772,464.7 772,464.4 771,464.4 771,464.3 770,464.3 770,463.9 769,463.9 769,464.1 768,464.1 768,464.3 767,464.3 767,464.5 766,464.5 766,467.0 765,467.0 765,469.7 764,469.7 764,471.2 763,471.2 763,472.0 762,472.0 762,471.9 761,471.9 761,471.0 760,471.0 760,471.5 759,471.5 759,470.6 758,470.6 758,470.9 757,470.9 757,470.3 756,470.3 756,472.3 755,472.3 755,469.9 754,469.9 754,470.0 753,470.0 753,470.4 752,470.4 752,469.5 751,469.5 751,468.8 750,468.8 750,466.9 749,466.9 749,465.1 748,465.1 748,465.3 747,465.3 747,464.7 746,464.7 746,464.6 745,464.6 745,464.4 744,464.4 744,464.7 743,464.7 743,464.2 742,464.2 742,464.1 741,464.1 741,464.3 740,464.3 740,463.9 739,463.9 739,463.8 738,463.8 738,463.8 737,463.8 737,463.8 736,463.8 736,464.3 735,464.3 735,464.2 734,464.2 734,464.6 733,464.6 733,464.9 732,464.9 732,465.4 731,465.4 731,466.0 730,466.0 730,465.7 729,465.7 729,466.3 728,466.3 728,465.5 727,465.5 727,465.3 726,465.3 726,465.3 725,465.3 725,464.8 724,464.8 724,464.9 723,464.9 723,464.5 722,464.5 722,464.1 721,464.1 721,464.2 720,464.2 720,464.2 719,464.2 719,463.9 718,463.9 718,463.9 717,463.9 717,463.8 716,463.8 716,463.8 715,463.8 715,463.8 714,463.8 714,463.8 713,463.8 713,463.8 712,463.8 712,464.1 711,464.1 711,463.9 710,463.9 710,464.1 709,464.1 709,465.5 708,465.5 708,467.2 707,467.2 707,469.0 706,469.0 706,470.4 705,470.4 705,470.9 704,470.9 704,470.5 703,470.5 703,471.4 702,471.4 702,469.6 701,469.6 701,468.6 700,468.6 700,468.0 699,468.0 699,467.2 698,467.2 698,466.3 697,466.3 697,467.0 696,467.0 696,466.1 695,466.1 695,465.8 694,465.8 694,465.9 693,465.9 693,466.1 692,466.1 692,466.3 691,466.3 691,465.6 690,465.6 690,465.7 689,465.7 689,465.5 688,465.5 688,465.3 687,465.3 687,465.0 686,465.0 686,465.6 685,465.6 685,465.1 684,465.1 684,465.0 683,465.0 683,464.9 682,464.9 682,465.2 681,465.2 681,464.6 680,464.6 680,464.8 679,464.8 679,464.9 678,464.9 678,464.9 677,464.9 677,465.0 676,465.0 676,465.4 675,465.4 675,466.0 674,466.0 674,465.7 673,465.7 673,465.3 672,465.3 672,465.3 671,465.3 671,464.9 670,464.9 670,464.4 669,464.4 669,464.6 668,464.6 668,464.0 667,464.0 667,463.8 666,463.8 666,463.8 665,463.8 665,463.8 664,463.8 664,463.8 663,463.8 663,463.8 662,463.8 662,463.8 661,463.8 661,463.9 660,463.9 660,464.2 659,464.2 659,464.3 658,464.3 658,464.5 657,464.5 657,465.3 656,465.3 656,467.3 655,467.3 655,469.6 654,469.6 654,469.8 653,469.8 653,470.0 652,470.0 652,471.1 651,471.1 651,471.1 650,471.1 650,471.2 649,471.2 649,469.4 648,469.4 648,469.4 647,469.4 647,468.9 646,468.9 646,468.9 645,468.9 645,467.5 644,467.5 644,467.8 643,467.8 643,466.8 642,466.8 642,466.8 641,466.8 641,466.5 640,466.5 640,466.2 639,466.2 639,466.2 638,466.2 638,466.3 637,466.3 637,466.2 636,466.2 636,466.0 635,466.0 635,465.8 634,465.8 634,465.8 633,465.8 633,465.8 632,465.8 632,465.5 631,465.5 631,465.5 630,465.5 630,465.0 629,465.0 629,465.1 628,465.1 628,465.2 627,465.2 627,465.2 626,465.2 626,465.3 625,465.3 625,464.9 624,464.9 624,465.2 623,465.2 623,465.3 622,465.3 622,465.0 621,465.0 621,465.2 620,465.2 620,465.5 619,465.5 619,466.0 618,466.0 618,465.8 617,465.8 617,465.5 616,465.5 616,465.2 615,465.2 615,464.8 614,464.8 614,464.3 613,464.3 613,463.8 612,463.8 612,464.5 611,464.5 611,465.4 610,465.4 610,465.9 609,465.9 609,466.3 608,466.3 608,466.5 607,466.5 607,465.4 606,465.4 606,464.5 605,464.5 605,463.8 604,463.8 604,463.8 603,463.8 603,463.8 602,463.8 602,463.8 601,463.8 601,463.8 600,463.8 600,463.8 599,463.8 599,463.8 598,463.8 598,463.8 597,463.8 597,463.8 596,463.8 596,463.8 595,463.8 595,463.8 594,463.8 594,464.1 593,464.1 593,465.5 592,465.5 592,468.3 591,468.3 591,467.5 590,467.5 590,468.4 589,468.4 589,469.8 588,469.8 588,469.1 587,469.1 587,469.1 586,469.1 586,469.6 585,469.6 585,469.3 584,469.3 584,469.8 583,469.8 583,470.9 582,470.9 582,470.2 581,470.2 581,470.0 580,470.0 580,470.6 579,470.6 579,470.0 578,470.0 578,469.8 577,469.8 577,470.3 576,470.3 576,468.9 575,468.9 575,468.7 574,468.7 574,469.0 573,469.0 573,468.1 572,468.1 572,468.0 571,468.0 571,469.0 570,469.0 570,468.6 569,468.6 569,468.7 568,468.7 568,467.9 567,467.9 567,468.2 566,468.2 566,468.3 565,468.3 565,468.0 564,468.0 564,469.1 563,469.1 563,470.4 562,470.4 562,470.2 561,470.2 561,469.0 560,469.0 560,469.0 559,469.0 559,467.2 558,467.2 558,467.7 557,467.7 557,467.9 556,467.9 556,468.6 555,468.6 555,468.3 554,468.3 554,468.2 553,468.2 553,467.8 552,467.8 552,467.9 551,467.9 551,467.7 550,467.7 550,468.5 549,468.5 549,467.3 548,467.3 548,467.4 547,467.4 547,466.9 546,466.9 546,466.7 545,466.7 545,467.2 544,467.2 544,466.3 543,466.3 543,466.2 542,466.2 542,466.8 541,466.8 541,466.2 540,466.2 540,466.0 539,466.0 539,466.3 538,466.3 538,466.1 537,466.1 537,465.5 536,465.5 536,465.4 535,465.4 535,465.3 534,465.3 534,465.4 533,465.4 533,464.8 532,464.8 532,465.3 531,465.3 531,464.6 530,464.6 530,464.4 529,464.4 529,464.7 528,464.7 528,464.1 527,464.1 527,464.4 526,464.4 526,464.2 525,464.2 525,463.9 524,463.9 524,463.9 523,463.9 523,463.8 522,463.8 522,464.0 521,464.0 521,464.1 520,464.1 520,464.5 519,464.5 519,464.6 518,464.6 518,464.7 517,464.7 517,464.2 516,464.2 516,463.8 515,463.8 515,463.8 514,463.8 514,463.8 513,463.8 513,464.3 512,464.3 512,464.4 511,464.4 511,464.0 510,464.0 510,463.8 509,463.8 509,463.8 508,463.8 508,466.8 507,466.8 507,468.5 506,468.5 506,468.2 505,468.2 505,468.8 504,468.8 504,469.7 503,469.7 503,468.0 502,468.0 502,470.0 501,470.0 501,469.5 500,469.5 500,468.0 499,468.0 499,467.9 498,467.9 498,467.7 497,467.7 497,467.6 496,467.6 496,468.0 495,468.0 495,468.1 494,468.1 494,468.7 493,468.7 493,467.6 492,467.6 492,468.5 491,468.5 491,467.5 490,467.5 490,468.4 489,468.4 489,467.7 488,467.7 488,468.1 487,468.1 487,467.4 486,467.4 486,466.6 485,466.6 485,466.3 484,466.3 484,465.3 483,465.3 483,465.0 482,465.0 482,464.2 481,464.2 481,464.2 480,464.2 480,463.9 479,463.9 479,464.0 478,464.0 478,463.9 477,463.9 477,464.1 476,464.1 476,464.5 475,464.5 475,464.6 474,464.6 474,464.9 473,464.9 473,465.2 472,465.2 472,466.1 471,466.1 471,466.8 470,466.8 470,467.1 469,467.1 469,466.4 468,466.4 468,466.7 467,466.7 467,465.9 466,465.9 466,465.8 465,465.8 465,465.2 464,465.2 464,465.7 463,465.7 463,466.5 462,466.5 462,466.7 461,466.7 461,467.0 460,467.0 460,465.9 459,465.9 459,465.6 458,465.6 458,464.9 457,464.9 457,464.4 456,464.4 456,464.5 455,464.5 455,464.5 454,464.5 454,464.6 453,464.6 453,464.5 452,464.5 452,464.2 451,464.2 451,464.2 450,464.2 450,464.3 449,464.3 449,464.0 448,464.0 448,464.1 447,464.1 447,463.9 446,463.9 446,464.0 445,464.0 445,463.8 444,463.8 444,463.9 443,463.9 443,463.8 442,463.8 442,463.8 441,463.8 441,463.8 440,463.8 440,463.8 439,463.8 439,463.8 438,463.8 438,463.8 437,463.8 437,463.8 436,463.8 436,463.9 435,463.9 435,464.7 434,464.7 434,465.6 433,465.6 433,466.7 432,466.7 432,467.4 431,467.4 431,468.7 430,468.7 430,469.0 429,469.0 429,468.3 428,468.3 428,468.7 427,468.7 427,470.4 426,470.4 426,469.7 425,469.7 425,468.8 424,468.8 424,469.6 423,469.6 423,469.0 422,469.0 422,468.9 421,468.9 421,469.8 420,469.8 420,468.0 419,468.0 419,468.4 418,468.4 418,469.3 417,469.3 417,469.5 416,469.5 416,470.0 415,470.0 415,469.5 414,469.5 414,468.4 413,468.4 413,468.9 412,468.9 412,468.7 411,468.7 411,467.5 410,467.5 410,466.7 409,466.7 409,466.7 408,466.7 408,467.3 407,467.3 407,467.0 406,467.0 406,467.4 405,467.4 405,467.9 404,467.9 404,468.4 403,468.4 403,469.4 402,469.4 402,469.8 401,469.8 401,470.0 400,470.0 400,467.6 399,467.6 399,466.9 398,466.9 398,467.7 397,467.7 397,467.1 396,467.1 396,467.9 395,467.9 395,468.2 394,468.2 394,468.5 393,468.5 393,467.5 392,467.5 392,468.4 391,468.4 391,468.0 390,468.0 390,467.3 389,467.3 389,467.8 388,467.8 388,467.5 387,467.5 387,467.2 386,467.2 386,466.9 385,466.9 385,466.2 384,466.2 384,466.4 383,466.4 383,466.2 382,466.2 382,465.9 381,465.9 381,465.5 380,465.5 380,464.8 379,464.8 379,465.2 378,465.2 378,464.5 377,464.5 377,464.5 376,464.5 376,464.2 375,464.2 375,464.3 374,464.3 374,464.2 373,464.2 373,464.4 372,464.4 372,464.6 371,464.6 371,464.3 370,464.3 370,464.1 369,464.1 369,464.4 368,464.4 368,464.1 367,464.1 367,464.4 366,464.4 366,464.2 365,464.2 365,464.1 364,464.1 364,464.1 363,464.1 363,464.0 362,464.0 362,463.8 361,463.8 361,464.0 360,464.0 360,464.2 359,464.2 359,464.6 358,464.6 358,464.4 357,464.4 357,464.3 356,464.3 356,463.8 355,463.8 355,463.8 354,463.8 354,464.2 353,464.2 353,464.5 352,464.5 352,464.4 351,464.4 351,464.2 350,464.2 350,463.8 349,463.8 349,464.2 348,464.2 348,466.4 347,466.4 347,468.7 346,468.7 346,469.3 345,469.3 345,469.4 344,469.4 344,469.4 343,469.4 343,468.5 342,468.5 342,470.0 341,470.0 341,469.9 340,469.9 340,469.4 339,469.4 339,469.6 338,469.6 338,468.9 337,468.9 337,469.5 336,469.5 336,469.2 335,469.2 335,469.1 334,469.1 334,468.9 333,468.9 333,467.9 332,467.9 332,469.4 331,469.4 331,468.0 330,468.0 330,469.5 329,469.5 329,468.1 328,468.1 328,467.6 327,467.6 327,467.4 326,467.4 326,466.5 325,466.5 325,465.4 324,465.4 324,464.8 323,464.8 323,464.0 322,464.0 322,464.2 321,464.2 321,464.3 320,464.3 320,464.2 319,464.2 319,463.9 318,463.9 318,464.1 317,464.1 317,463.9 316,463.9 316,464.5 315,464.5 315,464.7 314,464.7 314,464.8 313,464.8 313,465.5 312,465.5 312,466.1 311,466.1 311,466.2 310,466.2 310,466.4 309,466.4 309,466.7 308,466.7 308,467.2 307,467.2 307,466.4 306,466.4 306,466.0 305,466.0 305,465.6 304,465.6 304,466.6 303,466.6 303,466.0 302,466.0 302,466.4 301,466.4 301,466.2 300,466.2 300,465.9 299,465.9 299,465.4 298,465.4 298,465.2 297,465.2 297,465.3 296,465.3 296,464.9 295,464.9 295,464.7 294,464.7 294,464.6 293,464.6 293,464.4 292,464.4 292,464.5 291,464.5 291,464.0 290,464.0 290,464.1 289,464.1 289,464.1 288,464.1 288,464.0 287,464.0 287,463.8 286,463.8" fill="#6d72e0"/></svg>
<div style="position:absolute;left:153px;top:537.5px;width:907px;height:84.4px;background:#64678a"></div>
<div style="position:absolute;left:1060px;top:234px;width:17px;height:388px;background:#f2f2f4"></div>
<div style="position:absolute;left:1068.2px;top:249.6px;width:1.8px;height:355px;background:#85878c"></div>
<div style="position:absolute;left:153px;top:621.8px;width:924px;height:17.6px;background:#eceef0"></div>
<div style="position:absolute;left:306px;top:629.8px;width:596px;height:1.8px;background:#77797f"></div>
<div style="position:absolute;left:153px;top:639.4px;width:924px;height:55.6px;background:#f6f7fc"></div>
<div style="position:absolute;left:153px;top:639.2px;width:924px;height:1px;background:#dfe0e6"></div>
<svg style="position:absolute;left:156.6px;top:643.7px;overflow:visible;" width="6" height="50" viewBox="0 0 6 50"><rect x="0" y="1.50" width="4.4" height="1" fill="#c6c8ce"/><rect x="0" y="5.54" width="4.4" height="1" fill="#c6c8ce"/><rect x="0" y="9.58" width="4.4" height="1" fill="#c6c8ce"/><rect x="0" y="13.62" width="4.4" height="1" fill="#c6c8ce"/><rect x="0" y="17.66" width="4.4" height="1" fill="#c6c8ce"/><rect x="0" y="21.70" width="4.4" height="1" fill="#c6c8ce"/><rect x="0" y="25.74" width="4.4" height="1" fill="#c6c8ce"/><rect x="0" y="29.78" width="4.4" height="1" fill="#c6c8ce"/><rect x="0" y="33.82" width="4.4" height="1" fill="#c6c8ce"/><rect x="0" y="37.86" width="4.4" height="1" fill="#c6c8ce"/><rect x="0" y="41.90" width="4.4" height="1" fill="#c6c8ce"/><rect x="0" y="45.94" width="4.4" height="1" fill="#c6c8ce"/></svg>
<div style="position:absolute;left:163.2px;top:640.4px;width:1px;height:54px;background:#c9ccd6"></div>
<span id="t64" style="position:absolute;left:170.2px;top:645.0px;line-height:18px;font-size:12px;font-weight:normal;color:#1a1a1a;white-space:pre;letter-spacing:-0.014px;">Project Rate (Hz)</span>
<div style="position:absolute;left:268.6px;top:644.6px;width:1.2px;height:15.6px;background:#b3b5bd"></div>
<span id="t65" style="position:absolute;left:275.2px;top:645.0px;line-height:18px;font-size:12px;font-weight:normal;color:#1a1a1a;white-space:pre;letter-spacing:0.169px;">Snap-To</span>
<div style="position:absolute;left:349.2px;top:644.6px;width:1.2px;height:15.6px;background:#b3b5bd"></div>
<div style="position:absolute;left:268.6px;top:672.6px;width:1.2px;height:15.6px;background:#b3b5bd"></div>
<div style="position:absolute;left:349.2px;top:672.6px;width:1.2px;height:15.6px;background:#b3b5bd"></div>
<div style="position:absolute;left:170.2px;top:668.9px;width:91.8px;height:21.6px;background:#fff;border:1px solid #5c5e66;box-sizing:border-box;border-radius:2px"></div>
<span id="t66" style="position:absolute;left:176px;top:670.3px;line-height:17px;font-size:11.6px;font-weight:normal;color:#1a1a1a;white-space:pre;letter-spacing:-0.633px;">44100</span>
<svg style="position:absolute;left:248.3px;top:677.4px;overflow:visible;" width="9" height="6" viewBox="0 0 9 6"><path d="M0.6 0.6 L4.5 4.6 L8.4 0.6" stroke="#444" stroke-width="1.15" fill="none"/></svg>
<div style="position:absolute;left:275.2px;top:668.9px;width:67.4px;height:21.6px;background:#fff;border:1px solid #e1e2e8;box-sizing:border-box;border-radius:2px"></div>
<span id="t67" style="position:absolute;left:279.4px;top:670.6px;line-height:18px;font-size:12px;font-weight:normal;color:#1a1a1a;white-space:pre;">Off</span>
<svg style="position:absolute;left:329.3px;top:677.4px;overflow:visible;" width="9" height="6" viewBox="0 0 9 6"><path d="M0.6 0.6 L4.5 4.6 L8.4 0.6" stroke="#444" stroke-width="1.15" fill="none"/></svg>
<div style="position:absolute;left:356px;top:640.8px;width:317.2px;height:21px;background:#fff;border:1px solid #e6e7ec;box-sizing:border-box;border-radius:2px"></div>
<span id="t68" style="position:absolute;left:360.2px;top:642.8px;line-height:18px;font-size:12px;font-weight:normal;color:#1a1a1a;white-space:pre;letter-spacing:-0.166px;">Start and End of Selection</span>
<svg style="position:absolute;left:660.3px;top:649.4px;overflow:visible;" width="9" height="6" viewBox="0 0 9 6"><path d="M0.6 0.6 L4.5 4.6 L8.4 0.6" stroke="#444" stroke-width="1.15" fill="none"/></svg>
<div style="position:absolute;left:356px;top:668.8px;width:155.2px;height:20.40000000000009px;background:#b1b1b9;box-shadow:inset 1px 1px 0 #85858e, inset -1px -1px 0 #d0d0d6"></div>
<div style="position:absolute;left:357.4px;top:670.4px;width:133.99999999999997px;height:17.40000000000009px;background:#d0d0de"></div>
<div style="position:absolute;left:380.8px;top:670.4px;width:12.800000000000011px;height:17.40000000000009px;background:#b9b9ca"></div>
<div style="position:absolute;left:416.4px;top:670.4px;width:16.80000000000001px;height:17.40000000000009px;background:#b9b9ca"></div>
<div style="position:absolute;left:491.4px;top:670.4px;width:12.0px;height:17.40000000000009px;background:#b9b9ca"></div>
<span id="t69" style="position:absolute;left:364.1px;transform:translateX(-50%);top:669.6px;line-height:20px;font-size:13.4px;font-weight:normal;color:#1717ae;white-space:pre;">0</span>
<span id="t70" style="position:absolute;left:375.4px;transform:translateX(-50%);top:669.6px;line-height:20px;font-size:13.4px;font-weight:normal;color:#1717ae;white-space:pre;">0</span>
<span id="t71" style="position:absolute;left:387.4px;transform:translateX(-50%);top:669.6px;line-height:20px;font-size:13.4px;font-weight:normal;color:#1717ae;white-space:pre;">h</span>
<span id="t72" style="position:absolute;left:399.5px;transform:translateX(-50%);top:669.6px;line-height:20px;font-size:13.4px;font-weight:normal;color:#1717ae;white-space:pre;">0</span>
<span id="t73" style="position:absolute;left:411.0px;transform:translateX(-50%);top:669.6px;line-height:20px;font-size:13.4px;font-weight:normal;color:#1717ae;white-space:pre;">1</span>
<span id="t74" style="position:absolute;left:424.4px;transform:translateX(-50%);top:669.6px;line-height:20px;font-size:13.4px;font-weight:normal;color:#1717ae;white-space:pre;">m</span>
<span id="t75" style="position:absolute;left:438.6px;transform:translateX(-50%);top:669.6px;line-height:20px;font-size:13.4px;font-weight:normal;color:#1717ae;white-space:pre;">5</span>
<span id="t76" style="position:absolute;left:449.9px;transform:translateX(-50%);top:669.6px;line-height:20px;font-size:13.4px;font-weight:normal;color:#1717ae;white-space:pre;">4</span>
<span id="t77" style="position:absolute;left:457.1px;transform:translateX(-50%);top:669.6px;line-height:20px;font-size:13.4px;font-weight:normal;color:#1717ae;white-space:pre;">.</span>
<span id="t78" style="position:absolute;left:463.8px;transform:translateX(-50%);top:669.6px;line-height:20px;font-size:13.4px;font-weight:normal;color:#1717ae;white-space:pre;">1</span>
<span id="t79" style="position:absolute;left:474.8px;transform:translateX(-50%);top:669.6px;line-height:20px;font-size:13.4px;font-weight:normal;color:#1717ae;white-space:pre;">5</span>
<span id="t80" style="position:absolute;left:485.5px;transform:translateX(-50%);top:669.6px;line-height:20px;font-size:13.4px;font-weight:normal;color:#1717ae;white-space:pre;">5</span>
<span id="t81" style="position:absolute;left:496.8px;transform:translateX(-50%);top:669.6px;line-height:20px;font-size:13.4px;font-weight:normal;color:#1717ae;white-space:pre;">s</span>
<svg style="position:absolute;left:502.59999999999997px;top:676.6px;overflow:visible;" width="8" height="5" viewBox="0 0 8 5"><path d="M0 0 H7.2 L3.6 4.4 Z" fill="#111"/></svg>
<div style="position:absolute;left:518.8px;top:668.8px;width:154.60000000000002px;height:20.40000000000009px;background:#b1b1b9;box-shadow:inset 1px 1px 0 #85858e, inset -1px -1px 0 #d0d0d6"></div>
<div style="position:absolute;left:520.1999999999999px;top:670.4px;width:133.50000000000009px;height:17.40000000000009px;background:#d0d0de"></div>
<div style="position:absolute;left:543.1px;top:670.4px;width:12.800000000000068px;height:17.40000000000009px;background:#b9b9ca"></div>
<div style="position:absolute;left:578.7px;top:670.4px;width:16.799999999999955px;height:17.40000000000009px;background:#b9b9ca"></div>
<div style="position:absolute;left:653.7px;top:670.4px;width:12.0px;height:17.40000000000009px;background:#b9b9ca"></div>
<span id="t82" style="position:absolute;left:526.4000000000001px;transform:translateX(-50%);top:669.6px;line-height:20px;font-size:13.4px;font-weight:normal;color:#1717ae;white-space:pre;">0</span>
<span id="t83" style="position:absolute;left:537.7px;transform:translateX(-50%);top:669.6px;line-height:20px;font-size:13.4px;font-weight:normal;color:#1717ae;white-space:pre;">0</span>
<span id="t84" style="position:absolute;left:549.7px;transform:translateX(-50%);top:669.6px;line-height:20px;font-size:13.4px;font-weight:normal;color:#1717ae;white-space:pre;">h</span>
<span id="t85" style="position:absolute;left:561.8px;transform:translateX(-50%);top:669.6px;line-height:20px;font-size:13.4px;font-weight:normal;color:#1717ae;white-space:pre;">0</span>
<span id="t86" style="position:absolute;left:573.3px;transform:translateX(-50%);top:669.6px;line-height:20px;font-size:13.4px;font-weight:normal;color:#1717ae;white-space:pre;">2</span>
<span id="t87" style="position:absolute;left:586.7px;transform:translateX(-50%);top:669.6px;line-height:20px;font-size:13.4px;font-weight:normal;color:#1717ae;white-space:pre;">m</span>
<span id="t88" style="position:absolute;left:600.9000000000001px;transform:translateX(-50%);top:669.6px;line-height:20px;font-size:13.4px;font-weight:normal;color:#1717ae;white-space:pre;">2</span>
<span id="t89" style="position:absolute;left:612.2px;transform:translateX(-50%);top:669.6px;line-height:20px;font-size:13.4px;font-weight:normal;color:#1717ae;white-space:pre;">4</span>
<span id="t90" style="position:absolute;left:619.4000000000001px;transform:translateX(-50%);top:669.6px;line-height:20px;font-size:13.4px;font-weight:normal;color:#1717ae;white-space:pre;">.</span>
<span id="t91" style="position:absolute;left:626.1px;transform:translateX(-50%);top:669.6px;line-height:20px;font-size:13.4px;font-weight:normal;color:#1717ae;white-space:pre;">8</span>
<span id="t92" style="position:absolute;left:637.1px;transform:translateX(-50%);top:669.6px;line-height:20px;font-size:13.4px;font-weight:normal;color:#1717ae;white-space:pre;">5</span>
<span id="t93" style="position:absolute;left:647.8px;transform:translateX(-50%);top:669.6px;line-height:20px;font-size:13.4px;font-weight:normal;color:#1717ae;white-space:pre;">2</span>
<span id="t94" style="position:absolute;left:659.1px;transform:translateX(-50%);top:669.6px;line-height:20px;font-size:13.4px;font-weight:normal;color:#1717ae;white-space:pre;">s</span>
<svg style="position:absolute;left:664.9px;top:676.6px;overflow:visible;" width="8" height="5" viewBox="0 0 8 5"><path d="M0 0 H7.2 L3.6 4.4 Z" fill="#111"/></svg>
<div style="position:absolute;left:676.6px;top:640.4px;width:1px;height:54px;background:#c9ccd6"></div>
<div style="position:absolute;left:679.4px;top:640.4px;width:1px;height:54px;background:#c9ccd6"></div>
<svg style="position:absolute;left:682.8px;top:643.7px;overflow:visible;" width="6" height="50" viewBox="0 0 6 50"><rect x="0" y="1.50" width="4.4" height="1" fill="#c6c8ce"/><rect x="0" y="5.54" width="4.4" height="1" fill="#c6c8ce"/><rect x="0" y="9.58" width="4.4" height="1" fill="#c6c8ce"/><rect x="0" y="13.62" width="4.4" height="1" fill="#c6c8ce"/><rect x="0" y="17.66" width="4.4" height="1" fill="#c6c8ce"/><rect x="0" y="21.70" width="4.4" height="1" fill="#c6c8ce"/><rect x="0" y="25.74" width="4.4" height="1" fill="#c6c8ce"/><rect x="0" y="29.78" width="4.4" height="1" fill="#c6c8ce"/><rect x="0" y="33.82" width="4.4" height="1" fill="#c6c8ce"/><rect x="0" y="37.86" width="4.4" height="1" fill="#c6c8ce"/><rect x="0" y="41.90" width="4.4" height="1" fill="#c6c8ce"/><rect x="0" y="45.94" width="4.4" height="1" fill="#c6c8ce"/></svg>
<div style="position:absolute;left:689.8px;top:640.4px;width:1px;height:54px;background:#c9ccd6"></div>
<div style="position:absolute;left:692.8px;top:648px;width:224.0px;height:36.799999999999955px;background:#b1b1b9;box-shadow:inset 1px 1px 0 #85858e, inset -1px -1px 0 #d0d0d6"></div>
<div style="position:absolute;left:694.1999999999999px;top:649.6px;width:189.80000000000004px;height:33.799999999999955px;background:#d0d0de"></div>
<div style="position:absolute;left:734.8px;top:649.6px;width:30.600000000000023px;height:33.799999999999955px;background:#b9b9ca"></div>
<div style="position:absolute;left:805.8px;top:649.6px;width:37.80000000000007px;height:33.799999999999955px;background:#b9b9ca"></div>
<div style="position:absolute;left:884px;top:649.6px;width:23px;height:33.799999999999955px;background:#b9b9ca"></div>
<span id="t95" style="position:absolute;left:704.8px;transform:translateX(-50%);top:647.1999999999999px;line-height:42px;font-size:28.2px;font-weight:normal;color:#1717ae;white-space:pre;">0</span>
<span id="t96" style="position:absolute;left:725.0px;transform:translateX(-50%);top:647.1999999999999px;line-height:42px;font-size:28.2px;font-weight:normal;color:#1717ae;white-space:pre;">0</span>
<span id="t97" style="position:absolute;left:750.2px;transform:translateX(-50%);top:647.1999999999999px;line-height:42px;font-size:28.2px;font-weight:normal;color:#1717ae;white-space:pre;">h</span>
<span id="t98" style="position:absolute;left:775.2px;transform:translateX(-50%);top:647.1999999999999px;line-height:42px;font-size:28.2px;font-weight:normal;color:#1717ae;white-space:pre;">0</span>
<span id="t99" style="position:absolute;left:796.0px;transform:translateX(-50%);top:647.1999999999999px;line-height:42px;font-size:28.2px;font-weight:normal;color:#1717ae;white-space:pre;">1</span>
<span id="t100" style="position:absolute;left:825.0px;transform:translateX(-50%);top:647.1999999999999px;line-height:42px;font-size:28.2px;font-weight:normal;color:#1717ae;white-space:pre;">m</span>
<span id="t101" style="position:absolute;left:853.8px;transform:translateX(-50%);top:647.1999999999999px;line-height:42px;font-size:28.2px;font-weight:normal;color:#1717ae;white-space:pre;">5</span>
<span id="t102" style="position:absolute;left:874.2px;transform:translateX(-50%);top:647.1999999999999px;line-height:42px;font-size:28.2px;font-weight:normal;color:#1717ae;white-space:pre;">4</span>
<span id="t103" style="position:absolute;left:898.4px;transform:translateX(-50%);top:647.1999999999999px;line-height:42px;font-size:28.2px;font-weight:normal;color:#1717ae;white-space:pre;">s</span>
<svg style="position:absolute;left:908.1999999999999px;top:664.0px;overflow:visible;" width="8" height="5" viewBox="0 0 8 5"><path d="M0 0 H7.2 L3.6 4.4 Z" fill="#111"/></svg>
<div style="position:absolute;left:928px;top:640.4px;width:1px;height:54px;background:#c9ccd6"></div>
<div style="position:absolute;left:930.6px;top:640.4px;width:1px;height:54px;background:#c9ccd6"></div>
<div style="position:absolute;left:931.6px;top:640.2px;width:146px;height:54.2px;background:#fbfbfd"></div>
<div style="position:absolute;left:153px;top:695px;width:924px;height:24px;background:#f0f0f0"></div>
<div style="position:absolute;left:153px;top:694.4px;width:924px;height:1.8px;background:#dcdde1"></div>
<div style="position:absolute;left:162.6px;top:696.6px;width:1px;height:22px;background:#dedee0"></div>
<span id="t104" style="position:absolute;left:167.2px;top:699.6px;line-height:18px;font-size:12px;font-weight:normal;color:#111;white-space:pre;letter-spacing:-0.220px;">Stopped.</span>
<div style="position:absolute;left:333.2px;top:696.4px;width:1px;height:22px;background:#d4d5d8"></div>
<div style="position:absolute;left:898.4px;top:696.4px;width:1px;height:22px;background:#d4d5d8"></div>
<svg style="position:absolute;left:1064.6px;top:706.6px;overflow:visible;" width="10" height="10" viewBox="0 0 10 10"><rect x="8" y="0" width="2" height="2" fill="#b4b6bc"/><rect x="4" y="4" width="2" height="2" fill="#b4b6bc"/><rect x="8" y="4" width="2" height="2" fill="#b4b6bc"/><rect x="0" y="8" width="2" height="2" fill="#b4b6bc"/><rect x="4" y="8" width="2" height="2" fill="#b4b6bc"/><rect x="8" y="8" width="2" height="2" fill="#b4b6bc"/></svg>
</div></div>
<div style="position:absolute;left:185.4px;top:64px;width:216.8px;height:348.6px;background:#f9f9f9;border-radius:8px;box-shadow:0 0 0 1px rgba(0,0,0,0.08),0 5px 14px rgba(0,0,0,0.22),0 1px 3px rgba(0,0,0,0.14)"></div>
<span id="t105" style="position:absolute;left:223.4px;top:68.0px;line-height:18px;font-size:12px;font-weight:normal;color:#111;white-space:pre;letter-spacing:0.111px;">Undo Import</span>
<span id="t106" style="position:absolute;right:927px;top:68.0px;line-height:18px;font-size:12px;font-weight:normal;color:#111;white-space:pre;letter-spacing:0.091px;">Ctrl+Z</span>
<span id="t107" style="position:absolute;left:223.4px;top:90.10000000000001px;line-height:18px;font-size:12px;font-weight:normal;color:#a0a0a0;white-space:pre;letter-spacing:-0.768px;">Redo</span>
<span id="t108" style="position:absolute;right:927px;top:90.10000000000001px;line-height:18px;font-size:12px;font-weight:normal;color:#a0a0a0;white-space:pre;letter-spacing:-0.125px;">Ctrl+Y</span>
<span id="t109" style="position:absolute;left:223.4px;top:121.20000000000002px;line-height:18px;font-size:12px;font-weight:normal;color:#111;white-space:pre;letter-spacing:-0.115px;">Cut</span>
<span id="t110" style="position:absolute;right:927px;top:121.20000000000002px;line-height:18px;font-size:12px;font-weight:normal;color:#111;white-space:pre;letter-spacing:-0.034px;">Ctrl+X</span>
<span id="t111" style="position:absolute;left:223.4px;top:143.20000000000002px;line-height:18px;font-size:12px;font-weight:normal;color:#111;white-space:pre;letter-spacing:-0.307px;">Delete</span>
<span id="t112" style="position:absolute;right:927px;top:143.20000000000002px;line-height:18px;font-size:12px;font-weight:normal;color:#111;white-space:pre;letter-spacing:-0.034px;">Ctrl+K</span>
<span id="t113" style="position:absolute;left:223.4px;top:165.20000000000002px;line-height:18px;font-size:12px;font-weight:normal;color:#111;white-space:pre;letter-spacing:-0.119px;">Copy</span>
<span id="t114" style="position:absolute;right:927px;top:165.20000000000002px;line-height:18px;font-size:12px;font-weight:normal;color:#111;white-space:pre;letter-spacing:0.028px;">Ctrl+C</span>
<span id="t115" style="position:absolute;left:223.4px;top:187.20000000000002px;line-height:18px;font-size:12px;font-weight:normal;color:#111;white-space:pre;letter-spacing:-0.597px;">Paste</span>
<span id="t116" style="position:absolute;right:927px;top:187.20000000000002px;line-height:18px;font-size:12px;font-weight:normal;color:#111;white-space:pre;letter-spacing:-0.034px;">Ctrl+V</span>
<span id="t117" style="position:absolute;left:223.4px;top:209.1px;line-height:18px;font-size:12px;font-weight:normal;color:#111;white-space:pre;letter-spacing:-0.004px;">Duplicate</span>
<span id="t118" style="position:absolute;right:927px;top:209.1px;line-height:18px;font-size:12px;font-weight:normal;color:#111;white-space:pre;letter-spacing:0.028px;">Ctrl+D</span>
<div style="position:absolute;left:225px;top:113.9px;width:168.6px;height:1px;background:#dadada"></div>
<div style="position:absolute;left:225px;top:233.3px;width:168.6px;height:1px;background:#dadada"></div>
<div style="position:absolute;left:225px;top:264.3px;width:168.6px;height:1px;background:#dadada"></div>
<div style="position:absolute;left:225px;top:382.9px;width:168.6px;height:1px;background:#dadada"></div>
<div style="position:absolute;left:195px;top:242px;width:198px;height:13.8px;background:#0a76d3;border-radius:6px"></div>
<span id="t119" style="position:absolute;left:223.4px;top:239.9px;line-height:18px;font-size:12px;font-weight:normal;color:#fff;white-space:pre;letter-spacing:-0.324px;">Remove Special</span>
<svg style="position:absolute;left:382.8px;top:245.0px;overflow:visible;" width="6" height="8" viewBox="0 0 6 8"><path d="M0.8 0.6 L4.4 3.8 L0.8 7" stroke="#fff" stroke-width="1.1" fill="none"/></svg>
<span id="t120" style="position:absolute;left:223.4px;top:271.0px;line-height:18px;font-size:12px;font-weight:normal;color:#111;white-space:pre;letter-spacing:-0.119px;">Clip Boundaries</span>
<svg style="position:absolute;left:382.8px;top:276.0px;overflow:visible;" width="6" height="8" viewBox="0 0 6 8"><path d="M0.8 0.6 L4.4 3.8 L0.8 7" stroke="#333" stroke-width="1.1" fill="none"/></svg>
<span id="t121" style="position:absolute;left:223.4px;top:293.0px;line-height:18px;font-size:12px;font-weight:normal;color:#111;white-space:pre;letter-spacing:-0.432px;">Labels</span>
<svg style="position:absolute;left:382.8px;top:298.0px;overflow:visible;" width="6" height="8" viewBox="0 0 6 8"><path d="M0.8 0.6 L4.4 3.8 L0.8 7" stroke="#333" stroke-width="1.1" fill="none"/></svg>
<span id="t122" style="position:absolute;left:223.4px;top:315.0px;line-height:18px;font-size:12px;font-weight:normal;color:#111;white-space:pre;letter-spacing:-0.054px;">Labeled Audio</span>
<svg style="position:absolute;left:382.8px;top:320.0px;overflow:visible;" width="6" height="8" viewBox="0 0 6 8"><path d="M0.8 0.6 L4.4 3.8 L0.8 7" stroke="#333" stroke-width="1.1" fill="none"/></svg>
<span id="t123" style="position:absolute;left:223.4px;top:337.0px;line-height:18px;font-size:12px;font-weight:normal;color:#111;white-space:pre;letter-spacing:-0.138px;">Metadata...</span>
<span id="t124" style="position:absolute;left:223.4px;top:359.0px;line-height:18px;font-size:12px;font-weight:normal;color:#a0a0a0;white-space:pre;letter-spacing:-0.250px;">Rename Clip...</span>
<span id="t125" style="position:absolute;right:927px;top:359.0px;line-height:18px;font-size:12px;font-weight:normal;color:#a0a0a0;white-space:pre;letter-spacing:-0.229px;">Ctrl+F2</span>
<span id="t126" style="position:absolute;left:223.4px;top:390.0px;line-height:18px;font-size:12px;font-weight:normal;color:#111;white-space:pre;letter-spacing:-0.348px;">Preferences...</span>
<span id="t127" style="position:absolute;right:927px;top:390.0px;line-height:18px;font-size:12px;font-weight:normal;color:#111;white-space:pre;letter-spacing:-0.089px;">Ctrl+P</span>
<div style="position:absolute;left:398.4px;top:235.4px;width:223.2px;height:101.6px;background:#f9f9f9;border-radius:8px;box-shadow:0 0 0 1px rgba(0,0,0,0.08),0 5px 14px rgba(0,0,0,0.22),0 1px 3px rgba(0,0,0,0.14)"></div>
<span id="t128" style="position:absolute;left:435px;top:240.3px;line-height:18px;font-size:12px;font-weight:normal;color:#111;white-space:pre;letter-spacing:0.005px;">Split Cut</span>
<span id="t129" style="position:absolute;right:707.8px;top:240.3px;line-height:18px;font-size:12px;font-weight:normal;color:#111;white-space:pre;letter-spacing:0.201px;">Ctrl+Alt+X</span>
<span id="t130" style="position:absolute;left:435px;top:262.2px;line-height:18px;font-size:12px;font-weight:normal;color:#111;white-space:pre;letter-spacing:-0.172px;">Split Delete</span>
<span id="t131" style="position:absolute;right:707.8px;top:262.2px;line-height:18px;font-size:12px;font-weight:normal;color:#111;white-space:pre;letter-spacing:0.201px;">Ctrl+Alt+K</span>
<span id="t132" style="position:absolute;left:435px;top:293.2px;line-height:18px;font-size:12px;font-weight:normal;color:#111;white-space:pre;letter-spacing:-0.059px;">Silence Audio</span>
<span id="t133" style="position:absolute;right:707.8px;top:293.2px;line-height:18px;font-size:12px;font-weight:normal;color:#111;white-space:pre;letter-spacing:0.047px;">Ctrl+L</span>
<div style="position:absolute;left:436.8px;top:286.6px;width:176px;height:1px;background:#dadada"></div>
<div style="position:absolute;left:407px;top:317.4px;width:205.2px;height:13.6px;background:#0a76d3;border-radius:6px"></div>
<span id="t134" style="position:absolute;left:435px;top:315.0px;line-height:18px;font-size:12px;font-weight:normal;color:#fff;white-space:pre;letter-spacing:0.073px;">Trim Audio</span>
<span id="t135" style="position:absolute;right:707.8px;top:315.0px;line-height:18px;font-size:12px;font-weight:normal;color:#fff;white-space:pre;letter-spacing:-0.073px;">Ctrl+T</span>
<div style="position:absolute;left:181.3px;top:40.3px;width:452.1px;height:381px;border:5.4px solid #fb0007;box-sizing:border-box"></div>
</body></html>
